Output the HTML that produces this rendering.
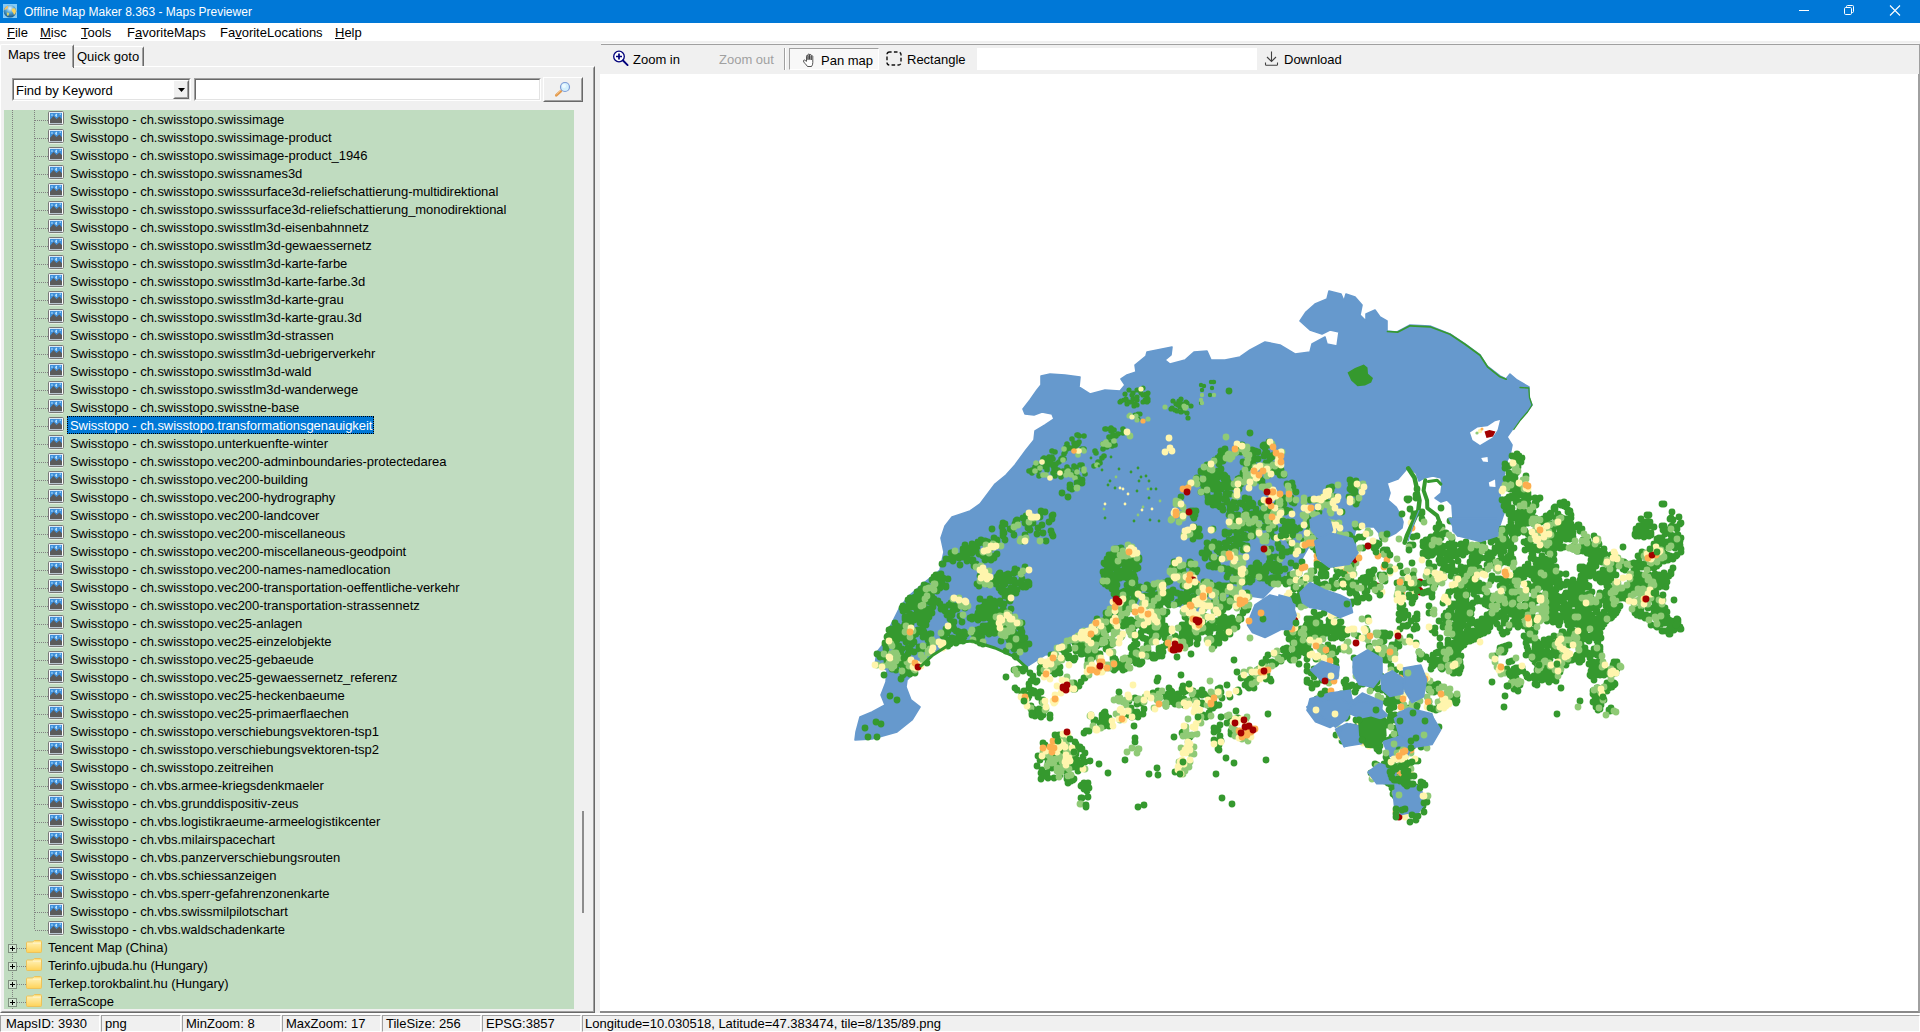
<!DOCTYPE html>
<html>
<head>
<meta charset="utf-8">
<title>Offline Map Maker 8.363 - Maps Previewer</title>
<style>
html,body{margin:0;padding:0;}
body{width:1920px;height:1032px;overflow:hidden;background:#f0f0f0;position:relative;
 font-family:"Liberation Sans",sans-serif;font-size:13px;color:#000;}
.abs{position:absolute;}
div,span{box-sizing:border-box;}
#title{left:0;top:0;width:1920px;height:23px;background:#0078d7;}
#title .t{position:absolute;left:24px;top:5px;font-size:12px;line-height:14px;color:#fff;white-space:pre;}
#menu{left:0;top:23px;width:1920px;height:18px;background:#fff;}
#menu span{position:absolute;top:2px;line-height:15px;font-size:13px;white-space:pre;}
#menu u{text-decoration:underline;text-underline-offset:1px;}
.tab{position:absolute;white-space:pre;font-size:13px;line-height:15px;}
.sunk{position:absolute;background:#fff;border:1px solid;border-color:#a0a0a0 #fff #fff #a0a0a0;}
.sunk:before{content:"";position:absolute;left:0;top:0;right:0;bottom:0;border:1px solid;border-color:#696969 #e3e3e3 #e3e3e3 #696969;}
.raised{position:absolute;background:#f0f0f0;border:1px solid;border-color:#fff #696969 #696969 #fff;}
.raised:before{content:"";position:absolute;left:0;top:0;right:0;bottom:0;border:1px solid;border-color:#f0f0f0 #a0a0a0 #a0a0a0 #f0f0f0;}
#tree{left:4px;top:110px;width:570px;height:899px;background:#c0dcc0;overflow:hidden;}
.row{position:absolute;left:0;height:18px;width:570px;}
.row .lbl{position:absolute;left:63px;top:0;height:18px;padding:2px 3px 0 3px;line-height:16px;font-size:13px;white-space:pre;letter-spacing:-0.05px;}
.row.f .lbl{left:41px;}
.row .lbl.sel{background:#0078d7;color:#fff;outline:1px dotted #000;outline-offset:-1px;width:307px;}
.row .ico{position:absolute;left:44px;top:1px;width:16px;height:15px;}
.row .fico{position:absolute;left:22px;top:2px;width:16px;height:13px;}
.row .plus{position:absolute;left:4px;top:6px;width:9px;height:9px;}
.hdot{position:absolute;height:1px;background-image:linear-gradient(90deg,#808080 50%,transparent 50%);background-size:2px 1px;}
.vdot{position:absolute;width:1px;background-image:linear-gradient(180deg,#808080 50%,transparent 50%);background-size:1px 2px;}
.sb{position:absolute;top:1015px;height:17px;border:1px solid;border-color:#a0a0a0 #fff #fff #a0a0a0;}
.sb span{position:absolute;left:3px;top:0px;font-size:13px;line-height:15px;white-space:pre;}
.tb{position:absolute;font-size:13px;line-height:15px;white-space:pre;}
</style>
</head>
<body>
<!-- TITLE BAR -->
<div id="title" class="abs">
  <svg class="abs" style="left:3px;top:4px" width="14" height="14" viewBox="0 0 14 14">
    <defs><radialGradient id="gl" cx=".5" cy=".28" r=".75"><stop offset="0" stop-color="#e8f4fa"/><stop offset=".45" stop-color="#58a8d8"/><stop offset="1" stop-color="#12507e"/></radialGradient></defs>
    <rect width="14" height="14" fill="#86cbf7"/>
    <circle cx="7" cy="7.200" r="6.300" fill="url(#gl)"/>
    <path d="M1.500 4.500Q3 2 5 1.800Q5.500 3.500 4.300 4.800Q3 5.800 1.300 6.200Z" fill="#f3bf63"/>
    <path d="M8.800 5Q10.500 3.600 12.300 4.600Q13.300 6.500 12.600 9Q11.800 11 10.800 10.800Q10.600 8.800 9.400 8Q8.300 6.500 8.800 5Z" fill="#f7d25e"/>
    <path d="M3.800 8.500Q5.500 8 6.300 9.600Q6 11.500 4.800 12.200Q3.500 10.500 3.800 8.500Z" fill="#d8cf6e"/>
  </svg>
  <span class="t">Offline Map Maker 8.363 - Maps Previewer</span>
  <svg class="abs" style="left:1790px;top:0" width="130" height="23" viewBox="0 0 130 23">
    <path d="M9 10.500H19" stroke="#fff" stroke-width="1" fill="none"/>
    <rect x="54.500" y="7.500" width="7" height="7" rx="1.200" fill="none" stroke="#fff" stroke-width="1"/>
    <path d="M56.500 7.500V6.500Q56.500 5.500 57.500 5.500H62.500Q63.500 5.500 63.500 6.500V11.500Q63.500 12.500 62.500 12.500H61.500" fill="none" stroke="#fff" stroke-width="1"/>
    <path d="M100 5.500L110 15.500M110 5.500L100 15.500" stroke="#fff" stroke-width="1.100" fill="none"/>
  </svg>
</div>
<!-- MENU BAR -->
<div id="menu" class="abs">
  <span style="left:7px"><u>F</u>ile</span>
  <span style="left:40px"><u>M</u>isc</span>
  <span style="left:81px"><u>T</u>ools</span>
  <span style="left:127px">F<u>a</u>voriteMaps</span>
  <span style="left:220px">Fa<u>v</u>oriteLocations</span>
  <span style="left:335px"><u>H</u>elp</span>
</div>
<!-- LEFT PANEL : tab control -->
<div class="abs" style="left:0;top:66px;width:595px;height:947px;border:1px solid;border-color:#fff #696969 #696969 #fff;"></div>
<div class="abs" style="left:1px;top:67px;width:593px;height:945px;border:1px solid;border-color:#f0f0f0 #a0a0a0 #a0a0a0 #f0f0f0;"></div>
<!-- active tab -->
<div class="abs" style="left:0;top:44px;width:74px;height:24px;background:#f0f0f0;border:1px solid;border-color:#fff #696969 #f0f0f0 #fff;border-bottom:0;border-radius:2px 2px 0 0;"></div>
<div class="abs" style="left:72px;top:46px;width:1px;height:21px;background:#a0a0a0;"></div>
<span class="tab" style="left:8px;top:47px">Maps tree</span>
<!-- inactive tab -->
<div class="abs" style="left:74px;top:46px;width:70px;height:20px;border:1px solid;border-color:#fff #696969 transparent transparent;border-bottom:0;border-left:0;border-radius:0 2px 0 0;"></div>
<div class="abs" style="left:142px;top:48px;width:1px;height:18px;background:#a0a0a0;"></div>
<span class="tab" style="left:77px;top:49px">Quick goto</span>
<!-- combobox -->
<div class="sunk" style="left:12px;top:78px;width:179px;height:23px;"></div>
<span class="tab" style="left:16px;top:83px">Find by Keyword</span>
<div class="raised" style="left:173px;top:80px;width:16px;height:19px;"></div>
<svg class="abs" style="left:177px;top:87px" width="9" height="6" viewBox="0 0 9 6"><path d="M1 1H8L4.500 5Z" fill="#000"/></svg>
<!-- search edit -->
<div class="sunk" style="left:194px;top:78px;width:347px;height:23px;"></div>
<!-- search button -->
<div class="raised" style="left:543px;top:77px;width:40px;height:25px;"></div>
<svg class="abs" style="left:552px;top:80px" width="22" height="18" viewBox="0 0 22 18">
  <path d="M9 11L4.300 15.300" stroke="#e39a4c" stroke-width="2.600" stroke-linecap="round"/>
  <path d="M8.500 10.500L4.800 14" stroke="#f6c48a" stroke-width="1" stroke-linecap="round"/>
  <circle cx="13" cy="7" r="4.500" fill="#d3f0fd" stroke="#7d9bd6" stroke-width="1.200"/>
  <circle cx="12" cy="6" r="2" fill="#eefaff"/>
</svg>
<!-- scrollbar -->
<div class="abs" style="left:582px;top:811px;width:2px;height:102px;background:#8c8c8c;"></div>
<!-- TOOLBAR -->
<div class="abs" style="left:601px;top:43px;width:1318px;height:1px;background:#f8f8f8;"></div>
<div class="abs" style="left:601px;top:44px;width:1319px;height:1px;background:#a0a0a0;"></div>
<div class="abs" style="left:1919px;top:44px;width:1px;height:30px;background:#a0a0a0;"></div>
<svg class="abs" style="left:611px;top:49px" width="20" height="20" viewBox="0 0 20 20">
  <circle cx="8" cy="7.500" r="5.300" fill="#fff" stroke="#00007b" stroke-width="1.300"/>
  <path d="M5 7.500H11M8 4.500V10.500" stroke="#00007b" stroke-width="1.700"/>
  <path d="M12 11.500L16.600 16.100" stroke="#00007b" stroke-width="1.900" stroke-linecap="round"/>
</svg>
<span class="tb" style="left:633px;top:52px">Zoom in</span>
<span class="tb" style="left:719px;top:52px;color:#a0a0a0">Zoom out</span>
<div class="abs" style="left:784px;top:48px;width:1px;height:22px;background:#a0a0a0;"></div>
<div class="abs" style="left:785px;top:48px;width:1px;height:22px;background:#fff;"></div>
<div class="abs" style="left:789px;top:48px;width:90px;height:22px;background:#f8f8f8;border:1px solid;border-color:#a0a0a0 #fff #fff #a0a0a0;"></div>
<svg class="abs" style="left:802px;top:53px" width="14" height="15" viewBox="0 0 14 15">
  <path d="M4.500 8V3.200Q4.500 2.300 5.300 2.300Q6 2.300 6 3.200V7M6 6.500V2Q6 1 6.800 1Q7.600 1 7.600 2V6.500M7.600 6.500V2.300Q7.600 1.500 8.400 1.500Q9.200 1.500 9.200 2.300V7M9.200 7V3.500Q9.200 2.700 10 2.700Q10.800 2.700 10.800 3.500V9.500Q10.800 12 9.500 13.500H5.500Q4.500 12 3 10.500Q1.500 9 1.500 8Q1.500 7 2.500 7Q3.300 7 4.500 8.800" fill="#fff" stroke="#404040" stroke-width=".9" stroke-linejoin="round"/>
</svg>
<span class="tb" style="left:821px;top:53px">Pan map</span>
<svg class="abs" style="left:886px;top:51px" width="16" height="15" viewBox="0 0 16 15">
  <rect x="1" y="1" width="14" height="13" rx="2.500" fill="none" stroke="#111" stroke-width="1.400" stroke-dasharray="3.600 2.300" stroke-dashoffset="1.500"/>
</svg>
<span class="tb" style="left:907px;top:52px">Rectangle</span>
<div class="abs" style="left:977px;top:48px;width:280px;height:22px;background:#fff;"></div>
<svg class="abs" style="left:1264px;top:50px" width="16" height="17" viewBox="0 0 16 17">
  <path d="M7.500 1.500V11.500M3 7L7.500 11.500L12 7" fill="none" stroke="#404040" stroke-width="1.100"/>
  <path d="M1.500 12.500V14.500Q1.500 15.300 2.300 15.300H12.700Q13.500 15.300 13.500 14.500V12.500" fill="none" stroke="#404040" stroke-width="1.100"/>
</svg>
<span class="tb" style="left:1284px;top:52px">Download</span>
<!-- MAP PANEL -->
<div class="abs" style="left:600px;top:74px;width:1320px;height:939px;background:#fff;border:solid;border-width:0 2px 2px 0;border-color:#a0a0a0 #a0a0a0 #8a8a8a #a0a0a0;"></div>
<div id="tree" class="abs">
<div class="vdot" style="left:8px;top:0;height:900px"></div>
<div class="vdot" style="left:30px;top:0;height:820px"></div>
<div class="row" style="top:0px"><div class="hdot" style="left:31px;top:10px;width:13px"></div><svg class="ico" viewBox="0 0 16 15"><rect x=".5" y=".5" width="15" height="13" rx="1.200" fill="#fff" stroke="#777"/><path d="M1 14.500H15" stroke="#e4efe4" stroke-width="1"/><rect x="2" y="1.800" width="12" height="10.400" fill="#3f90da"/><path d="M2 12.200V8.700L5.600 5L8.500 7.900L11.500 5.400L14 8.300V12.200Z" fill="#5b5b5b"/><path d="M3.200 4H4.800M4 3.200V4.800M11.600 3.200H13M12.300 2.500V3.900" stroke="#a9dcff" stroke-width=".8" fill="none"/><path d="M9.300 3.100A1.400 1.400 0 1 0 9.300 5.500A1.700 1.700 0 0 1 9.300 3.100Z" fill="#c9ecff"/></svg><span class="lbl">Swisstopo - ch.swisstopo.swissimage</span></div>
<div class="row" style="top:18px"><div class="hdot" style="left:31px;top:10px;width:13px"></div><svg class="ico" viewBox="0 0 16 15"><rect x=".5" y=".5" width="15" height="13" rx="1.200" fill="#fff" stroke="#777"/><path d="M1 14.500H15" stroke="#e4efe4" stroke-width="1"/><rect x="2" y="1.800" width="12" height="10.400" fill="#3f90da"/><path d="M2 12.200V8.700L5.600 5L8.500 7.900L11.500 5.400L14 8.300V12.200Z" fill="#5b5b5b"/><path d="M3.200 4H4.800M4 3.200V4.800M11.600 3.200H13M12.300 2.500V3.900" stroke="#a9dcff" stroke-width=".8" fill="none"/><path d="M9.300 3.100A1.400 1.400 0 1 0 9.300 5.500A1.700 1.700 0 0 1 9.300 3.100Z" fill="#c9ecff"/></svg><span class="lbl">Swisstopo - ch.swisstopo.swissimage-product</span></div>
<div class="row" style="top:36px"><div class="hdot" style="left:31px;top:10px;width:13px"></div><svg class="ico" viewBox="0 0 16 15"><rect x=".5" y=".5" width="15" height="13" rx="1.200" fill="#fff" stroke="#777"/><path d="M1 14.500H15" stroke="#e4efe4" stroke-width="1"/><rect x="2" y="1.800" width="12" height="10.400" fill="#3f90da"/><path d="M2 12.200V8.700L5.600 5L8.500 7.900L11.500 5.400L14 8.300V12.200Z" fill="#5b5b5b"/><path d="M3.200 4H4.800M4 3.200V4.800M11.600 3.200H13M12.300 2.500V3.900" stroke="#a9dcff" stroke-width=".8" fill="none"/><path d="M9.300 3.100A1.400 1.400 0 1 0 9.300 5.500A1.700 1.700 0 0 1 9.300 3.100Z" fill="#c9ecff"/></svg><span class="lbl">Swisstopo - ch.swisstopo.swissimage-product_1946</span></div>
<div class="row" style="top:54px"><div class="hdot" style="left:31px;top:10px;width:13px"></div><svg class="ico" viewBox="0 0 16 15"><rect x=".5" y=".5" width="15" height="13" rx="1.200" fill="#fff" stroke="#777"/><path d="M1 14.500H15" stroke="#e4efe4" stroke-width="1"/><rect x="2" y="1.800" width="12" height="10.400" fill="#3f90da"/><path d="M2 12.200V8.700L5.600 5L8.500 7.900L11.500 5.400L14 8.300V12.200Z" fill="#5b5b5b"/><path d="M3.200 4H4.800M4 3.200V4.800M11.600 3.200H13M12.300 2.500V3.900" stroke="#a9dcff" stroke-width=".8" fill="none"/><path d="M9.300 3.100A1.400 1.400 0 1 0 9.300 5.500A1.700 1.700 0 0 1 9.300 3.100Z" fill="#c9ecff"/></svg><span class="lbl">Swisstopo - ch.swisstopo.swissnames3d</span></div>
<div class="row" style="top:72px"><div class="hdot" style="left:31px;top:10px;width:13px"></div><svg class="ico" viewBox="0 0 16 15"><rect x=".5" y=".5" width="15" height="13" rx="1.200" fill="#fff" stroke="#777"/><path d="M1 14.500H15" stroke="#e4efe4" stroke-width="1"/><rect x="2" y="1.800" width="12" height="10.400" fill="#3f90da"/><path d="M2 12.200V8.700L5.600 5L8.500 7.900L11.500 5.400L14 8.300V12.200Z" fill="#5b5b5b"/><path d="M3.200 4H4.800M4 3.200V4.800M11.600 3.200H13M12.300 2.500V3.900" stroke="#a9dcff" stroke-width=".8" fill="none"/><path d="M9.300 3.100A1.400 1.400 0 1 0 9.300 5.500A1.700 1.700 0 0 1 9.300 3.100Z" fill="#c9ecff"/></svg><span class="lbl">Swisstopo - ch.swisstopo.swisssurface3d-reliefschattierung-multidirektional</span></div>
<div class="row" style="top:90px"><div class="hdot" style="left:31px;top:10px;width:13px"></div><svg class="ico" viewBox="0 0 16 15"><rect x=".5" y=".5" width="15" height="13" rx="1.200" fill="#fff" stroke="#777"/><path d="M1 14.500H15" stroke="#e4efe4" stroke-width="1"/><rect x="2" y="1.800" width="12" height="10.400" fill="#3f90da"/><path d="M2 12.200V8.700L5.600 5L8.500 7.900L11.500 5.400L14 8.300V12.200Z" fill="#5b5b5b"/><path d="M3.200 4H4.800M4 3.200V4.800M11.600 3.200H13M12.300 2.500V3.900" stroke="#a9dcff" stroke-width=".8" fill="none"/><path d="M9.300 3.100A1.400 1.400 0 1 0 9.300 5.500A1.700 1.700 0 0 1 9.300 3.100Z" fill="#c9ecff"/></svg><span class="lbl">Swisstopo - ch.swisstopo.swisssurface3d-reliefschattierung_monodirektional</span></div>
<div class="row" style="top:108px"><div class="hdot" style="left:31px;top:10px;width:13px"></div><svg class="ico" viewBox="0 0 16 15"><rect x=".5" y=".5" width="15" height="13" rx="1.200" fill="#fff" stroke="#777"/><path d="M1 14.500H15" stroke="#e4efe4" stroke-width="1"/><rect x="2" y="1.800" width="12" height="10.400" fill="#3f90da"/><path d="M2 12.200V8.700L5.600 5L8.500 7.900L11.500 5.400L14 8.300V12.200Z" fill="#5b5b5b"/><path d="M3.200 4H4.800M4 3.200V4.800M11.600 3.200H13M12.300 2.500V3.900" stroke="#a9dcff" stroke-width=".8" fill="none"/><path d="M9.300 3.100A1.400 1.400 0 1 0 9.300 5.500A1.700 1.700 0 0 1 9.300 3.100Z" fill="#c9ecff"/></svg><span class="lbl">Swisstopo - ch.swisstopo.swisstlm3d-eisenbahnnetz</span></div>
<div class="row" style="top:126px"><div class="hdot" style="left:31px;top:10px;width:13px"></div><svg class="ico" viewBox="0 0 16 15"><rect x=".5" y=".5" width="15" height="13" rx="1.200" fill="#fff" stroke="#777"/><path d="M1 14.500H15" stroke="#e4efe4" stroke-width="1"/><rect x="2" y="1.800" width="12" height="10.400" fill="#3f90da"/><path d="M2 12.200V8.700L5.600 5L8.500 7.900L11.500 5.400L14 8.300V12.200Z" fill="#5b5b5b"/><path d="M3.200 4H4.800M4 3.200V4.800M11.600 3.200H13M12.300 2.500V3.900" stroke="#a9dcff" stroke-width=".8" fill="none"/><path d="M9.300 3.100A1.400 1.400 0 1 0 9.300 5.500A1.700 1.700 0 0 1 9.300 3.100Z" fill="#c9ecff"/></svg><span class="lbl">Swisstopo - ch.swisstopo.swisstlm3d-gewaessernetz</span></div>
<div class="row" style="top:144px"><div class="hdot" style="left:31px;top:10px;width:13px"></div><svg class="ico" viewBox="0 0 16 15"><rect x=".5" y=".5" width="15" height="13" rx="1.200" fill="#fff" stroke="#777"/><path d="M1 14.500H15" stroke="#e4efe4" stroke-width="1"/><rect x="2" y="1.800" width="12" height="10.400" fill="#3f90da"/><path d="M2 12.200V8.700L5.600 5L8.500 7.900L11.500 5.400L14 8.300V12.200Z" fill="#5b5b5b"/><path d="M3.200 4H4.800M4 3.200V4.800M11.600 3.200H13M12.300 2.500V3.900" stroke="#a9dcff" stroke-width=".8" fill="none"/><path d="M9.300 3.100A1.400 1.400 0 1 0 9.300 5.500A1.700 1.700 0 0 1 9.300 3.100Z" fill="#c9ecff"/></svg><span class="lbl">Swisstopo - ch.swisstopo.swisstlm3d-karte-farbe</span></div>
<div class="row" style="top:162px"><div class="hdot" style="left:31px;top:10px;width:13px"></div><svg class="ico" viewBox="0 0 16 15"><rect x=".5" y=".5" width="15" height="13" rx="1.200" fill="#fff" stroke="#777"/><path d="M1 14.500H15" stroke="#e4efe4" stroke-width="1"/><rect x="2" y="1.800" width="12" height="10.400" fill="#3f90da"/><path d="M2 12.200V8.700L5.600 5L8.500 7.900L11.500 5.400L14 8.300V12.200Z" fill="#5b5b5b"/><path d="M3.200 4H4.800M4 3.200V4.800M11.600 3.200H13M12.300 2.500V3.900" stroke="#a9dcff" stroke-width=".8" fill="none"/><path d="M9.300 3.100A1.400 1.400 0 1 0 9.300 5.500A1.700 1.700 0 0 1 9.300 3.100Z" fill="#c9ecff"/></svg><span class="lbl">Swisstopo - ch.swisstopo.swisstlm3d-karte-farbe.3d</span></div>
<div class="row" style="top:180px"><div class="hdot" style="left:31px;top:10px;width:13px"></div><svg class="ico" viewBox="0 0 16 15"><rect x=".5" y=".5" width="15" height="13" rx="1.200" fill="#fff" stroke="#777"/><path d="M1 14.500H15" stroke="#e4efe4" stroke-width="1"/><rect x="2" y="1.800" width="12" height="10.400" fill="#3f90da"/><path d="M2 12.200V8.700L5.600 5L8.500 7.900L11.500 5.400L14 8.300V12.200Z" fill="#5b5b5b"/><path d="M3.200 4H4.800M4 3.200V4.800M11.600 3.200H13M12.300 2.500V3.900" stroke="#a9dcff" stroke-width=".8" fill="none"/><path d="M9.300 3.100A1.400 1.400 0 1 0 9.300 5.500A1.700 1.700 0 0 1 9.300 3.100Z" fill="#c9ecff"/></svg><span class="lbl">Swisstopo - ch.swisstopo.swisstlm3d-karte-grau</span></div>
<div class="row" style="top:198px"><div class="hdot" style="left:31px;top:10px;width:13px"></div><svg class="ico" viewBox="0 0 16 15"><rect x=".5" y=".5" width="15" height="13" rx="1.200" fill="#fff" stroke="#777"/><path d="M1 14.500H15" stroke="#e4efe4" stroke-width="1"/><rect x="2" y="1.800" width="12" height="10.400" fill="#3f90da"/><path d="M2 12.200V8.700L5.600 5L8.500 7.900L11.500 5.400L14 8.300V12.200Z" fill="#5b5b5b"/><path d="M3.200 4H4.800M4 3.200V4.800M11.600 3.200H13M12.300 2.500V3.900" stroke="#a9dcff" stroke-width=".8" fill="none"/><path d="M9.300 3.100A1.400 1.400 0 1 0 9.300 5.500A1.700 1.700 0 0 1 9.300 3.100Z" fill="#c9ecff"/></svg><span class="lbl">Swisstopo - ch.swisstopo.swisstlm3d-karte-grau.3d</span></div>
<div class="row" style="top:216px"><div class="hdot" style="left:31px;top:10px;width:13px"></div><svg class="ico" viewBox="0 0 16 15"><rect x=".5" y=".5" width="15" height="13" rx="1.200" fill="#fff" stroke="#777"/><path d="M1 14.500H15" stroke="#e4efe4" stroke-width="1"/><rect x="2" y="1.800" width="12" height="10.400" fill="#3f90da"/><path d="M2 12.200V8.700L5.600 5L8.500 7.900L11.500 5.400L14 8.300V12.200Z" fill="#5b5b5b"/><path d="M3.200 4H4.800M4 3.200V4.800M11.600 3.200H13M12.300 2.500V3.900" stroke="#a9dcff" stroke-width=".8" fill="none"/><path d="M9.300 3.100A1.400 1.400 0 1 0 9.300 5.500A1.700 1.700 0 0 1 9.300 3.100Z" fill="#c9ecff"/></svg><span class="lbl">Swisstopo - ch.swisstopo.swisstlm3d-strassen</span></div>
<div class="row" style="top:234px"><div class="hdot" style="left:31px;top:10px;width:13px"></div><svg class="ico" viewBox="0 0 16 15"><rect x=".5" y=".5" width="15" height="13" rx="1.200" fill="#fff" stroke="#777"/><path d="M1 14.500H15" stroke="#e4efe4" stroke-width="1"/><rect x="2" y="1.800" width="12" height="10.400" fill="#3f90da"/><path d="M2 12.200V8.700L5.600 5L8.500 7.900L11.500 5.400L14 8.300V12.200Z" fill="#5b5b5b"/><path d="M3.200 4H4.800M4 3.200V4.800M11.600 3.200H13M12.300 2.500V3.900" stroke="#a9dcff" stroke-width=".8" fill="none"/><path d="M9.300 3.100A1.400 1.400 0 1 0 9.300 5.500A1.700 1.700 0 0 1 9.300 3.100Z" fill="#c9ecff"/></svg><span class="lbl">Swisstopo - ch.swisstopo.swisstlm3d-uebrigerverkehr</span></div>
<div class="row" style="top:252px"><div class="hdot" style="left:31px;top:10px;width:13px"></div><svg class="ico" viewBox="0 0 16 15"><rect x=".5" y=".5" width="15" height="13" rx="1.200" fill="#fff" stroke="#777"/><path d="M1 14.500H15" stroke="#e4efe4" stroke-width="1"/><rect x="2" y="1.800" width="12" height="10.400" fill="#3f90da"/><path d="M2 12.200V8.700L5.600 5L8.500 7.900L11.500 5.400L14 8.300V12.200Z" fill="#5b5b5b"/><path d="M3.200 4H4.800M4 3.200V4.800M11.600 3.200H13M12.300 2.500V3.900" stroke="#a9dcff" stroke-width=".8" fill="none"/><path d="M9.300 3.100A1.400 1.400 0 1 0 9.300 5.500A1.700 1.700 0 0 1 9.300 3.100Z" fill="#c9ecff"/></svg><span class="lbl">Swisstopo - ch.swisstopo.swisstlm3d-wald</span></div>
<div class="row" style="top:270px"><div class="hdot" style="left:31px;top:10px;width:13px"></div><svg class="ico" viewBox="0 0 16 15"><rect x=".5" y=".5" width="15" height="13" rx="1.200" fill="#fff" stroke="#777"/><path d="M1 14.500H15" stroke="#e4efe4" stroke-width="1"/><rect x="2" y="1.800" width="12" height="10.400" fill="#3f90da"/><path d="M2 12.200V8.700L5.600 5L8.500 7.900L11.500 5.400L14 8.300V12.200Z" fill="#5b5b5b"/><path d="M3.200 4H4.800M4 3.200V4.800M11.600 3.200H13M12.300 2.500V3.900" stroke="#a9dcff" stroke-width=".8" fill="none"/><path d="M9.300 3.100A1.400 1.400 0 1 0 9.300 5.500A1.700 1.700 0 0 1 9.300 3.100Z" fill="#c9ecff"/></svg><span class="lbl">Swisstopo - ch.swisstopo.swisstlm3d-wanderwege</span></div>
<div class="row" style="top:288px"><div class="hdot" style="left:31px;top:10px;width:13px"></div><svg class="ico" viewBox="0 0 16 15"><rect x=".5" y=".5" width="15" height="13" rx="1.200" fill="#fff" stroke="#777"/><path d="M1 14.500H15" stroke="#e4efe4" stroke-width="1"/><rect x="2" y="1.800" width="12" height="10.400" fill="#3f90da"/><path d="M2 12.200V8.700L5.600 5L8.500 7.900L11.500 5.400L14 8.300V12.200Z" fill="#5b5b5b"/><path d="M3.200 4H4.800M4 3.200V4.800M11.600 3.200H13M12.300 2.500V3.900" stroke="#a9dcff" stroke-width=".8" fill="none"/><path d="M9.300 3.100A1.400 1.400 0 1 0 9.300 5.500A1.700 1.700 0 0 1 9.300 3.100Z" fill="#c9ecff"/></svg><span class="lbl">Swisstopo - ch.swisstopo.swisstne-base</span></div>
<div class="row" style="top:306px"><div class="hdot" style="left:31px;top:10px;width:13px"></div><svg class="ico" viewBox="0 0 16 15"><rect x=".5" y=".5" width="15" height="13" rx="1.200" fill="#fff" stroke="#777"/><path d="M1 14.500H15" stroke="#e4efe4" stroke-width="1"/><rect x="2" y="1.800" width="12" height="10.400" fill="#3f90da"/><path d="M2 12.200V8.700L5.600 5L8.500 7.900L11.500 5.400L14 8.300V12.200Z" fill="#5b5b5b"/><path d="M3.200 4H4.800M4 3.200V4.800M11.600 3.200H13M12.300 2.500V3.900" stroke="#a9dcff" stroke-width=".8" fill="none"/><path d="M9.300 3.100A1.400 1.400 0 1 0 9.300 5.500A1.700 1.700 0 0 1 9.300 3.100Z" fill="#c9ecff"/></svg><span class="lbl sel">Swisstopo - ch.swisstopo.transformationsgenauigkeit</span></div>
<div class="row" style="top:324px"><div class="hdot" style="left:31px;top:10px;width:13px"></div><svg class="ico" viewBox="0 0 16 15"><rect x=".5" y=".5" width="15" height="13" rx="1.200" fill="#fff" stroke="#777"/><path d="M1 14.500H15" stroke="#e4efe4" stroke-width="1"/><rect x="2" y="1.800" width="12" height="10.400" fill="#3f90da"/><path d="M2 12.200V8.700L5.600 5L8.500 7.900L11.500 5.400L14 8.300V12.200Z" fill="#5b5b5b"/><path d="M3.200 4H4.800M4 3.200V4.800M11.600 3.200H13M12.300 2.500V3.900" stroke="#a9dcff" stroke-width=".8" fill="none"/><path d="M9.300 3.100A1.400 1.400 0 1 0 9.300 5.500A1.700 1.700 0 0 1 9.300 3.100Z" fill="#c9ecff"/></svg><span class="lbl">Swisstopo - ch.swisstopo.unterkuenfte-winter</span></div>
<div class="row" style="top:342px"><div class="hdot" style="left:31px;top:10px;width:13px"></div><svg class="ico" viewBox="0 0 16 15"><rect x=".5" y=".5" width="15" height="13" rx="1.200" fill="#fff" stroke="#777"/><path d="M1 14.500H15" stroke="#e4efe4" stroke-width="1"/><rect x="2" y="1.800" width="12" height="10.400" fill="#3f90da"/><path d="M2 12.200V8.700L5.600 5L8.500 7.900L11.500 5.400L14 8.300V12.200Z" fill="#5b5b5b"/><path d="M3.200 4H4.800M4 3.200V4.800M11.600 3.200H13M12.300 2.500V3.900" stroke="#a9dcff" stroke-width=".8" fill="none"/><path d="M9.300 3.100A1.400 1.400 0 1 0 9.300 5.500A1.700 1.700 0 0 1 9.300 3.100Z" fill="#c9ecff"/></svg><span class="lbl">Swisstopo - ch.swisstopo.vec200-adminboundaries-protectedarea</span></div>
<div class="row" style="top:360px"><div class="hdot" style="left:31px;top:10px;width:13px"></div><svg class="ico" viewBox="0 0 16 15"><rect x=".5" y=".5" width="15" height="13" rx="1.200" fill="#fff" stroke="#777"/><path d="M1 14.500H15" stroke="#e4efe4" stroke-width="1"/><rect x="2" y="1.800" width="12" height="10.400" fill="#3f90da"/><path d="M2 12.200V8.700L5.600 5L8.500 7.900L11.500 5.400L14 8.300V12.200Z" fill="#5b5b5b"/><path d="M3.200 4H4.800M4 3.200V4.800M11.600 3.200H13M12.300 2.500V3.900" stroke="#a9dcff" stroke-width=".8" fill="none"/><path d="M9.300 3.100A1.400 1.400 0 1 0 9.300 5.500A1.700 1.700 0 0 1 9.300 3.100Z" fill="#c9ecff"/></svg><span class="lbl">Swisstopo - ch.swisstopo.vec200-building</span></div>
<div class="row" style="top:378px"><div class="hdot" style="left:31px;top:10px;width:13px"></div><svg class="ico" viewBox="0 0 16 15"><rect x=".5" y=".5" width="15" height="13" rx="1.200" fill="#fff" stroke="#777"/><path d="M1 14.500H15" stroke="#e4efe4" stroke-width="1"/><rect x="2" y="1.800" width="12" height="10.400" fill="#3f90da"/><path d="M2 12.200V8.700L5.600 5L8.500 7.900L11.500 5.400L14 8.300V12.200Z" fill="#5b5b5b"/><path d="M3.200 4H4.800M4 3.200V4.800M11.600 3.200H13M12.300 2.500V3.900" stroke="#a9dcff" stroke-width=".8" fill="none"/><path d="M9.300 3.100A1.400 1.400 0 1 0 9.300 5.500A1.700 1.700 0 0 1 9.300 3.100Z" fill="#c9ecff"/></svg><span class="lbl">Swisstopo - ch.swisstopo.vec200-hydrography</span></div>
<div class="row" style="top:396px"><div class="hdot" style="left:31px;top:10px;width:13px"></div><svg class="ico" viewBox="0 0 16 15"><rect x=".5" y=".5" width="15" height="13" rx="1.200" fill="#fff" stroke="#777"/><path d="M1 14.500H15" stroke="#e4efe4" stroke-width="1"/><rect x="2" y="1.800" width="12" height="10.400" fill="#3f90da"/><path d="M2 12.200V8.700L5.600 5L8.500 7.900L11.500 5.400L14 8.300V12.200Z" fill="#5b5b5b"/><path d="M3.200 4H4.800M4 3.200V4.800M11.600 3.200H13M12.300 2.500V3.900" stroke="#a9dcff" stroke-width=".8" fill="none"/><path d="M9.300 3.100A1.400 1.400 0 1 0 9.300 5.500A1.700 1.700 0 0 1 9.300 3.100Z" fill="#c9ecff"/></svg><span class="lbl">Swisstopo - ch.swisstopo.vec200-landcover</span></div>
<div class="row" style="top:414px"><div class="hdot" style="left:31px;top:10px;width:13px"></div><svg class="ico" viewBox="0 0 16 15"><rect x=".5" y=".5" width="15" height="13" rx="1.200" fill="#fff" stroke="#777"/><path d="M1 14.500H15" stroke="#e4efe4" stroke-width="1"/><rect x="2" y="1.800" width="12" height="10.400" fill="#3f90da"/><path d="M2 12.200V8.700L5.600 5L8.500 7.900L11.500 5.400L14 8.300V12.200Z" fill="#5b5b5b"/><path d="M3.200 4H4.800M4 3.200V4.800M11.600 3.200H13M12.300 2.500V3.900" stroke="#a9dcff" stroke-width=".8" fill="none"/><path d="M9.300 3.100A1.400 1.400 0 1 0 9.300 5.500A1.700 1.700 0 0 1 9.300 3.100Z" fill="#c9ecff"/></svg><span class="lbl">Swisstopo - ch.swisstopo.vec200-miscellaneous</span></div>
<div class="row" style="top:432px"><div class="hdot" style="left:31px;top:10px;width:13px"></div><svg class="ico" viewBox="0 0 16 15"><rect x=".5" y=".5" width="15" height="13" rx="1.200" fill="#fff" stroke="#777"/><path d="M1 14.500H15" stroke="#e4efe4" stroke-width="1"/><rect x="2" y="1.800" width="12" height="10.400" fill="#3f90da"/><path d="M2 12.200V8.700L5.600 5L8.500 7.900L11.500 5.400L14 8.300V12.200Z" fill="#5b5b5b"/><path d="M3.200 4H4.800M4 3.200V4.800M11.600 3.200H13M12.300 2.500V3.900" stroke="#a9dcff" stroke-width=".8" fill="none"/><path d="M9.300 3.100A1.400 1.400 0 1 0 9.300 5.500A1.700 1.700 0 0 1 9.300 3.100Z" fill="#c9ecff"/></svg><span class="lbl">Swisstopo - ch.swisstopo.vec200-miscellaneous-geodpoint</span></div>
<div class="row" style="top:450px"><div class="hdot" style="left:31px;top:10px;width:13px"></div><svg class="ico" viewBox="0 0 16 15"><rect x=".5" y=".5" width="15" height="13" rx="1.200" fill="#fff" stroke="#777"/><path d="M1 14.500H15" stroke="#e4efe4" stroke-width="1"/><rect x="2" y="1.800" width="12" height="10.400" fill="#3f90da"/><path d="M2 12.200V8.700L5.600 5L8.500 7.900L11.500 5.400L14 8.300V12.200Z" fill="#5b5b5b"/><path d="M3.200 4H4.800M4 3.200V4.800M11.600 3.200H13M12.300 2.500V3.900" stroke="#a9dcff" stroke-width=".8" fill="none"/><path d="M9.300 3.100A1.400 1.400 0 1 0 9.300 5.500A1.700 1.700 0 0 1 9.300 3.100Z" fill="#c9ecff"/></svg><span class="lbl">Swisstopo - ch.swisstopo.vec200-names-namedlocation</span></div>
<div class="row" style="top:468px"><div class="hdot" style="left:31px;top:10px;width:13px"></div><svg class="ico" viewBox="0 0 16 15"><rect x=".5" y=".5" width="15" height="13" rx="1.200" fill="#fff" stroke="#777"/><path d="M1 14.500H15" stroke="#e4efe4" stroke-width="1"/><rect x="2" y="1.800" width="12" height="10.400" fill="#3f90da"/><path d="M2 12.200V8.700L5.600 5L8.500 7.900L11.500 5.400L14 8.300V12.200Z" fill="#5b5b5b"/><path d="M3.200 4H4.800M4 3.200V4.800M11.600 3.200H13M12.300 2.500V3.900" stroke="#a9dcff" stroke-width=".8" fill="none"/><path d="M9.300 3.100A1.400 1.400 0 1 0 9.300 5.500A1.700 1.700 0 0 1 9.300 3.100Z" fill="#c9ecff"/></svg><span class="lbl">Swisstopo - ch.swisstopo.vec200-transportation-oeffentliche-verkehr</span></div>
<div class="row" style="top:486px"><div class="hdot" style="left:31px;top:10px;width:13px"></div><svg class="ico" viewBox="0 0 16 15"><rect x=".5" y=".5" width="15" height="13" rx="1.200" fill="#fff" stroke="#777"/><path d="M1 14.500H15" stroke="#e4efe4" stroke-width="1"/><rect x="2" y="1.800" width="12" height="10.400" fill="#3f90da"/><path d="M2 12.200V8.700L5.600 5L8.500 7.900L11.500 5.400L14 8.300V12.200Z" fill="#5b5b5b"/><path d="M3.200 4H4.800M4 3.200V4.800M11.600 3.200H13M12.300 2.500V3.900" stroke="#a9dcff" stroke-width=".8" fill="none"/><path d="M9.300 3.100A1.400 1.400 0 1 0 9.300 5.500A1.700 1.700 0 0 1 9.300 3.100Z" fill="#c9ecff"/></svg><span class="lbl">Swisstopo - ch.swisstopo.vec200-transportation-strassennetz</span></div>
<div class="row" style="top:504px"><div class="hdot" style="left:31px;top:10px;width:13px"></div><svg class="ico" viewBox="0 0 16 15"><rect x=".5" y=".5" width="15" height="13" rx="1.200" fill="#fff" stroke="#777"/><path d="M1 14.500H15" stroke="#e4efe4" stroke-width="1"/><rect x="2" y="1.800" width="12" height="10.400" fill="#3f90da"/><path d="M2 12.200V8.700L5.600 5L8.500 7.900L11.500 5.400L14 8.300V12.200Z" fill="#5b5b5b"/><path d="M3.200 4H4.800M4 3.200V4.800M11.600 3.200H13M12.300 2.500V3.900" stroke="#a9dcff" stroke-width=".8" fill="none"/><path d="M9.300 3.100A1.400 1.400 0 1 0 9.300 5.500A1.700 1.700 0 0 1 9.300 3.100Z" fill="#c9ecff"/></svg><span class="lbl">Swisstopo - ch.swisstopo.vec25-anlagen</span></div>
<div class="row" style="top:522px"><div class="hdot" style="left:31px;top:10px;width:13px"></div><svg class="ico" viewBox="0 0 16 15"><rect x=".5" y=".5" width="15" height="13" rx="1.200" fill="#fff" stroke="#777"/><path d="M1 14.500H15" stroke="#e4efe4" stroke-width="1"/><rect x="2" y="1.800" width="12" height="10.400" fill="#3f90da"/><path d="M2 12.200V8.700L5.600 5L8.500 7.900L11.500 5.400L14 8.300V12.200Z" fill="#5b5b5b"/><path d="M3.200 4H4.800M4 3.200V4.800M11.600 3.200H13M12.300 2.500V3.900" stroke="#a9dcff" stroke-width=".8" fill="none"/><path d="M9.300 3.100A1.400 1.400 0 1 0 9.300 5.500A1.700 1.700 0 0 1 9.300 3.100Z" fill="#c9ecff"/></svg><span class="lbl">Swisstopo - ch.swisstopo.vec25-einzelobjekte</span></div>
<div class="row" style="top:540px"><div class="hdot" style="left:31px;top:10px;width:13px"></div><svg class="ico" viewBox="0 0 16 15"><rect x=".5" y=".5" width="15" height="13" rx="1.200" fill="#fff" stroke="#777"/><path d="M1 14.500H15" stroke="#e4efe4" stroke-width="1"/><rect x="2" y="1.800" width="12" height="10.400" fill="#3f90da"/><path d="M2 12.200V8.700L5.600 5L8.500 7.900L11.500 5.400L14 8.300V12.200Z" fill="#5b5b5b"/><path d="M3.200 4H4.800M4 3.200V4.800M11.600 3.200H13M12.300 2.500V3.900" stroke="#a9dcff" stroke-width=".8" fill="none"/><path d="M9.300 3.100A1.400 1.400 0 1 0 9.300 5.500A1.700 1.700 0 0 1 9.300 3.100Z" fill="#c9ecff"/></svg><span class="lbl">Swisstopo - ch.swisstopo.vec25-gebaeude</span></div>
<div class="row" style="top:558px"><div class="hdot" style="left:31px;top:10px;width:13px"></div><svg class="ico" viewBox="0 0 16 15"><rect x=".5" y=".5" width="15" height="13" rx="1.200" fill="#fff" stroke="#777"/><path d="M1 14.500H15" stroke="#e4efe4" stroke-width="1"/><rect x="2" y="1.800" width="12" height="10.400" fill="#3f90da"/><path d="M2 12.200V8.700L5.600 5L8.500 7.900L11.500 5.400L14 8.300V12.200Z" fill="#5b5b5b"/><path d="M3.200 4H4.800M4 3.200V4.800M11.600 3.200H13M12.300 2.500V3.900" stroke="#a9dcff" stroke-width=".8" fill="none"/><path d="M9.300 3.100A1.400 1.400 0 1 0 9.300 5.500A1.700 1.700 0 0 1 9.300 3.100Z" fill="#c9ecff"/></svg><span class="lbl">Swisstopo - ch.swisstopo.vec25-gewaessernetz_referenz</span></div>
<div class="row" style="top:576px"><div class="hdot" style="left:31px;top:10px;width:13px"></div><svg class="ico" viewBox="0 0 16 15"><rect x=".5" y=".5" width="15" height="13" rx="1.200" fill="#fff" stroke="#777"/><path d="M1 14.500H15" stroke="#e4efe4" stroke-width="1"/><rect x="2" y="1.800" width="12" height="10.400" fill="#3f90da"/><path d="M2 12.200V8.700L5.600 5L8.500 7.900L11.500 5.400L14 8.300V12.200Z" fill="#5b5b5b"/><path d="M3.200 4H4.800M4 3.200V4.800M11.600 3.200H13M12.300 2.500V3.900" stroke="#a9dcff" stroke-width=".8" fill="none"/><path d="M9.300 3.100A1.400 1.400 0 1 0 9.300 5.500A1.700 1.700 0 0 1 9.300 3.100Z" fill="#c9ecff"/></svg><span class="lbl">Swisstopo - ch.swisstopo.vec25-heckenbaeume</span></div>
<div class="row" style="top:594px"><div class="hdot" style="left:31px;top:10px;width:13px"></div><svg class="ico" viewBox="0 0 16 15"><rect x=".5" y=".5" width="15" height="13" rx="1.200" fill="#fff" stroke="#777"/><path d="M1 14.500H15" stroke="#e4efe4" stroke-width="1"/><rect x="2" y="1.800" width="12" height="10.400" fill="#3f90da"/><path d="M2 12.200V8.700L5.600 5L8.500 7.900L11.500 5.400L14 8.300V12.200Z" fill="#5b5b5b"/><path d="M3.200 4H4.800M4 3.200V4.800M11.600 3.200H13M12.300 2.500V3.900" stroke="#a9dcff" stroke-width=".8" fill="none"/><path d="M9.300 3.100A1.400 1.400 0 1 0 9.300 5.500A1.700 1.700 0 0 1 9.300 3.100Z" fill="#c9ecff"/></svg><span class="lbl">Swisstopo - ch.swisstopo.vec25-primaerflaechen</span></div>
<div class="row" style="top:612px"><div class="hdot" style="left:31px;top:10px;width:13px"></div><svg class="ico" viewBox="0 0 16 15"><rect x=".5" y=".5" width="15" height="13" rx="1.200" fill="#fff" stroke="#777"/><path d="M1 14.500H15" stroke="#e4efe4" stroke-width="1"/><rect x="2" y="1.800" width="12" height="10.400" fill="#3f90da"/><path d="M2 12.200V8.700L5.600 5L8.500 7.900L11.500 5.400L14 8.300V12.200Z" fill="#5b5b5b"/><path d="M3.200 4H4.800M4 3.200V4.800M11.600 3.200H13M12.300 2.500V3.900" stroke="#a9dcff" stroke-width=".8" fill="none"/><path d="M9.300 3.100A1.400 1.400 0 1 0 9.300 5.500A1.700 1.700 0 0 1 9.300 3.100Z" fill="#c9ecff"/></svg><span class="lbl">Swisstopo - ch.swisstopo.verschiebungsvektoren-tsp1</span></div>
<div class="row" style="top:630px"><div class="hdot" style="left:31px;top:10px;width:13px"></div><svg class="ico" viewBox="0 0 16 15"><rect x=".5" y=".5" width="15" height="13" rx="1.200" fill="#fff" stroke="#777"/><path d="M1 14.500H15" stroke="#e4efe4" stroke-width="1"/><rect x="2" y="1.800" width="12" height="10.400" fill="#3f90da"/><path d="M2 12.200V8.700L5.600 5L8.500 7.900L11.500 5.400L14 8.300V12.200Z" fill="#5b5b5b"/><path d="M3.200 4H4.800M4 3.200V4.800M11.600 3.200H13M12.300 2.500V3.900" stroke="#a9dcff" stroke-width=".8" fill="none"/><path d="M9.300 3.100A1.400 1.400 0 1 0 9.300 5.500A1.700 1.700 0 0 1 9.300 3.100Z" fill="#c9ecff"/></svg><span class="lbl">Swisstopo - ch.swisstopo.verschiebungsvektoren-tsp2</span></div>
<div class="row" style="top:648px"><div class="hdot" style="left:31px;top:10px;width:13px"></div><svg class="ico" viewBox="0 0 16 15"><rect x=".5" y=".5" width="15" height="13" rx="1.200" fill="#fff" stroke="#777"/><path d="M1 14.500H15" stroke="#e4efe4" stroke-width="1"/><rect x="2" y="1.800" width="12" height="10.400" fill="#3f90da"/><path d="M2 12.200V8.700L5.600 5L8.500 7.900L11.500 5.400L14 8.300V12.200Z" fill="#5b5b5b"/><path d="M3.200 4H4.800M4 3.200V4.800M11.600 3.200H13M12.300 2.500V3.900" stroke="#a9dcff" stroke-width=".8" fill="none"/><path d="M9.300 3.100A1.400 1.400 0 1 0 9.300 5.500A1.700 1.700 0 0 1 9.300 3.100Z" fill="#c9ecff"/></svg><span class="lbl">Swisstopo - ch.swisstopo.zeitreihen</span></div>
<div class="row" style="top:666px"><div class="hdot" style="left:31px;top:10px;width:13px"></div><svg class="ico" viewBox="0 0 16 15"><rect x=".5" y=".5" width="15" height="13" rx="1.200" fill="#fff" stroke="#777"/><path d="M1 14.500H15" stroke="#e4efe4" stroke-width="1"/><rect x="2" y="1.800" width="12" height="10.400" fill="#3f90da"/><path d="M2 12.200V8.700L5.600 5L8.500 7.900L11.500 5.400L14 8.300V12.200Z" fill="#5b5b5b"/><path d="M3.200 4H4.800M4 3.200V4.800M11.600 3.200H13M12.300 2.500V3.900" stroke="#a9dcff" stroke-width=".8" fill="none"/><path d="M9.300 3.100A1.400 1.400 0 1 0 9.300 5.500A1.700 1.700 0 0 1 9.300 3.100Z" fill="#c9ecff"/></svg><span class="lbl">Swisstopo - ch.vbs.armee-kriegsdenkmaeler</span></div>
<div class="row" style="top:684px"><div class="hdot" style="left:31px;top:10px;width:13px"></div><svg class="ico" viewBox="0 0 16 15"><rect x=".5" y=".5" width="15" height="13" rx="1.200" fill="#fff" stroke="#777"/><path d="M1 14.500H15" stroke="#e4efe4" stroke-width="1"/><rect x="2" y="1.800" width="12" height="10.400" fill="#3f90da"/><path d="M2 12.200V8.700L5.600 5L8.500 7.900L11.500 5.400L14 8.300V12.200Z" fill="#5b5b5b"/><path d="M3.200 4H4.800M4 3.200V4.800M11.600 3.200H13M12.300 2.500V3.900" stroke="#a9dcff" stroke-width=".8" fill="none"/><path d="M9.300 3.100A1.400 1.400 0 1 0 9.300 5.500A1.700 1.700 0 0 1 9.300 3.100Z" fill="#c9ecff"/></svg><span class="lbl">Swisstopo - ch.vbs.grunddispositiv-zeus</span></div>
<div class="row" style="top:702px"><div class="hdot" style="left:31px;top:10px;width:13px"></div><svg class="ico" viewBox="0 0 16 15"><rect x=".5" y=".5" width="15" height="13" rx="1.200" fill="#fff" stroke="#777"/><path d="M1 14.500H15" stroke="#e4efe4" stroke-width="1"/><rect x="2" y="1.800" width="12" height="10.400" fill="#3f90da"/><path d="M2 12.200V8.700L5.600 5L8.500 7.900L11.500 5.400L14 8.300V12.200Z" fill="#5b5b5b"/><path d="M3.200 4H4.800M4 3.200V4.800M11.600 3.200H13M12.300 2.500V3.900" stroke="#a9dcff" stroke-width=".8" fill="none"/><path d="M9.300 3.100A1.400 1.400 0 1 0 9.300 5.500A1.700 1.700 0 0 1 9.300 3.100Z" fill="#c9ecff"/></svg><span class="lbl">Swisstopo - ch.vbs.logistikraeume-armeelogistikcenter</span></div>
<div class="row" style="top:720px"><div class="hdot" style="left:31px;top:10px;width:13px"></div><svg class="ico" viewBox="0 0 16 15"><rect x=".5" y=".5" width="15" height="13" rx="1.200" fill="#fff" stroke="#777"/><path d="M1 14.500H15" stroke="#e4efe4" stroke-width="1"/><rect x="2" y="1.800" width="12" height="10.400" fill="#3f90da"/><path d="M2 12.200V8.700L5.600 5L8.500 7.900L11.500 5.400L14 8.300V12.200Z" fill="#5b5b5b"/><path d="M3.200 4H4.800M4 3.200V4.800M11.600 3.200H13M12.300 2.500V3.900" stroke="#a9dcff" stroke-width=".8" fill="none"/><path d="M9.300 3.100A1.400 1.400 0 1 0 9.300 5.500A1.700 1.700 0 0 1 9.300 3.100Z" fill="#c9ecff"/></svg><span class="lbl">Swisstopo - ch.vbs.milairspacechart</span></div>
<div class="row" style="top:738px"><div class="hdot" style="left:31px;top:10px;width:13px"></div><svg class="ico" viewBox="0 0 16 15"><rect x=".5" y=".5" width="15" height="13" rx="1.200" fill="#fff" stroke="#777"/><path d="M1 14.500H15" stroke="#e4efe4" stroke-width="1"/><rect x="2" y="1.800" width="12" height="10.400" fill="#3f90da"/><path d="M2 12.200V8.700L5.600 5L8.500 7.900L11.500 5.400L14 8.300V12.200Z" fill="#5b5b5b"/><path d="M3.200 4H4.800M4 3.200V4.800M11.600 3.200H13M12.300 2.500V3.900" stroke="#a9dcff" stroke-width=".8" fill="none"/><path d="M9.300 3.100A1.400 1.400 0 1 0 9.300 5.500A1.700 1.700 0 0 1 9.300 3.100Z" fill="#c9ecff"/></svg><span class="lbl">Swisstopo - ch.vbs.panzerverschiebungsrouten</span></div>
<div class="row" style="top:756px"><div class="hdot" style="left:31px;top:10px;width:13px"></div><svg class="ico" viewBox="0 0 16 15"><rect x=".5" y=".5" width="15" height="13" rx="1.200" fill="#fff" stroke="#777"/><path d="M1 14.500H15" stroke="#e4efe4" stroke-width="1"/><rect x="2" y="1.800" width="12" height="10.400" fill="#3f90da"/><path d="M2 12.200V8.700L5.600 5L8.500 7.900L11.500 5.400L14 8.300V12.200Z" fill="#5b5b5b"/><path d="M3.200 4H4.800M4 3.200V4.800M11.600 3.200H13M12.300 2.500V3.900" stroke="#a9dcff" stroke-width=".8" fill="none"/><path d="M9.300 3.100A1.400 1.400 0 1 0 9.300 5.500A1.700 1.700 0 0 1 9.300 3.100Z" fill="#c9ecff"/></svg><span class="lbl">Swisstopo - ch.vbs.schiessanzeigen</span></div>
<div class="row" style="top:774px"><div class="hdot" style="left:31px;top:10px;width:13px"></div><svg class="ico" viewBox="0 0 16 15"><rect x=".5" y=".5" width="15" height="13" rx="1.200" fill="#fff" stroke="#777"/><path d="M1 14.500H15" stroke="#e4efe4" stroke-width="1"/><rect x="2" y="1.800" width="12" height="10.400" fill="#3f90da"/><path d="M2 12.200V8.700L5.600 5L8.500 7.900L11.500 5.400L14 8.300V12.200Z" fill="#5b5b5b"/><path d="M3.200 4H4.800M4 3.200V4.800M11.600 3.200H13M12.300 2.500V3.900" stroke="#a9dcff" stroke-width=".8" fill="none"/><path d="M9.300 3.100A1.400 1.400 0 1 0 9.300 5.500A1.700 1.700 0 0 1 9.300 3.100Z" fill="#c9ecff"/></svg><span class="lbl">Swisstopo - ch.vbs.sperr-gefahrenzonenkarte</span></div>
<div class="row" style="top:792px"><div class="hdot" style="left:31px;top:10px;width:13px"></div><svg class="ico" viewBox="0 0 16 15"><rect x=".5" y=".5" width="15" height="13" rx="1.200" fill="#fff" stroke="#777"/><path d="M1 14.500H15" stroke="#e4efe4" stroke-width="1"/><rect x="2" y="1.800" width="12" height="10.400" fill="#3f90da"/><path d="M2 12.200V8.700L5.600 5L8.500 7.900L11.500 5.400L14 8.300V12.200Z" fill="#5b5b5b"/><path d="M3.200 4H4.800M4 3.200V4.800M11.600 3.200H13M12.300 2.500V3.900" stroke="#a9dcff" stroke-width=".8" fill="none"/><path d="M9.300 3.100A1.400 1.400 0 1 0 9.300 5.500A1.700 1.700 0 0 1 9.300 3.100Z" fill="#c9ecff"/></svg><span class="lbl">Swisstopo - ch.vbs.swissmilpilotschart</span></div>
<div class="row" style="top:810px"><div class="hdot" style="left:31px;top:10px;width:13px"></div><svg class="ico" viewBox="0 0 16 15"><rect x=".5" y=".5" width="15" height="13" rx="1.200" fill="#fff" stroke="#777"/><path d="M1 14.500H15" stroke="#e4efe4" stroke-width="1"/><rect x="2" y="1.800" width="12" height="10.400" fill="#3f90da"/><path d="M2 12.200V8.700L5.600 5L8.500 7.900L11.500 5.400L14 8.300V12.200Z" fill="#5b5b5b"/><path d="M3.200 4H4.800M4 3.200V4.800M11.600 3.200H13M12.300 2.500V3.900" stroke="#a9dcff" stroke-width=".8" fill="none"/><path d="M9.300 3.100A1.400 1.400 0 1 0 9.300 5.500A1.700 1.700 0 0 1 9.300 3.100Z" fill="#c9ecff"/></svg><span class="lbl">Swisstopo - ch.vbs.waldschadenkarte</span></div>
<div class="row f" style="top:828px"><div class="hdot" style="left:13px;top:10px;width:9px"></div><svg class="plus" viewBox="0 0 9 9"><rect x=".5" y=".5" width="8" height="8" fill="#fff" fill-opacity=".3" stroke="#7f8f7f"/><path d="M2 4.500H7M4.500 2V7" stroke="#000" stroke-width="1"/></svg><svg class="fico" viewBox="0 0 16 13"><defs><linearGradient id="fg" x1="0" y1="0" x2="0" y2="1"><stop offset="0" stop-color="#fff6c4"/><stop offset="1" stop-color="#ffd257"/></linearGradient></defs><path d="M.5 3Q.5 2 1.500 2H6.800L8.300 .5H14.500Q15.500 .5 15.500 1.500V11.500Q15.500 12.500 14.500 12.500H1.500Q.5 12.500 .5 11.500Z" fill="url(#fg)" stroke="#ecc25a" stroke-width="1"/><path d="M8.600 1H15V2.600H7Z" fill="#ffe07c"/><path d="M7 3.100H15" stroke="#fff8d8" stroke-width=".8"/></svg><span class="lbl">Tencent Map (China)</span></div>
<div class="row f" style="top:846px"><div class="hdot" style="left:13px;top:10px;width:9px"></div><svg class="plus" viewBox="0 0 9 9"><rect x=".5" y=".5" width="8" height="8" fill="#fff" fill-opacity=".3" stroke="#7f8f7f"/><path d="M2 4.500H7M4.500 2V7" stroke="#000" stroke-width="1"/></svg><svg class="fico" viewBox="0 0 16 13"><path d="M.5 3Q.5 2 1.500 2H6.800L8.300 .5H14.500Q15.500 .5 15.500 1.500V11.500Q15.500 12.500 14.500 12.500H1.500Q.5 12.500 .5 11.500Z" fill="url(#fg)" stroke="#ecc25a" stroke-width="1"/><path d="M8.600 1H15V2.600H7Z" fill="#ffe07c"/><path d="M7 3.100H15" stroke="#fff8d8" stroke-width=".8"/></svg><span class="lbl">Terinfo.ujbuda.hu (Hungary)</span></div>
<div class="row f" style="top:864px"><div class="hdot" style="left:13px;top:10px;width:9px"></div><svg class="plus" viewBox="0 0 9 9"><rect x=".5" y=".5" width="8" height="8" fill="#fff" fill-opacity=".3" stroke="#7f8f7f"/><path d="M2 4.500H7M4.500 2V7" stroke="#000" stroke-width="1"/></svg><svg class="fico" viewBox="0 0 16 13"><path d="M.5 3Q.5 2 1.500 2H6.800L8.300 .5H14.500Q15.500 .5 15.500 1.500V11.500Q15.500 12.500 14.500 12.500H1.500Q.5 12.500 .5 11.500Z" fill="url(#fg)" stroke="#ecc25a" stroke-width="1"/><path d="M8.600 1H15V2.600H7Z" fill="#ffe07c"/><path d="M7 3.100H15" stroke="#fff8d8" stroke-width=".8"/></svg><span class="lbl">Terkep.torokbalint.hu (Hungary)</span></div>
<div class="row f" style="top:882px"><div class="hdot" style="left:13px;top:10px;width:9px"></div><svg class="plus" viewBox="0 0 9 9"><rect x=".5" y=".5" width="8" height="8" fill="#fff" fill-opacity=".3" stroke="#7f8f7f"/><path d="M2 4.500H7M4.500 2V7" stroke="#000" stroke-width="1"/></svg><svg class="fico" viewBox="0 0 16 13"><path d="M.5 3Q.5 2 1.500 2H6.800L8.300 .5H14.500Q15.500 .5 15.500 1.500V11.500Q15.500 12.500 14.500 12.500H1.500Q.5 12.500 .5 11.500Z" fill="url(#fg)" stroke="#ecc25a" stroke-width="1"/><path d="M8.600 1H15V2.600H7Z" fill="#ffe07c"/><path d="M7 3.100H15" stroke="#fff8d8" stroke-width=".8"/></svg><span class="lbl">TerraScope</span></div>
</div>
<svg class="abs" style="left:840px;top:280px" width="860" height="560" viewBox="840 280 860 560">
<path fill="#6699cd" stroke="#6699cd" stroke-width="1.6" stroke-linejoin="round" d="M941 538L945 526L952 517L970 511L980 504L989 492L995 484L1006 475L1015 465L1026 450L1034 440L1035 431L1045 425L1054 419L1052 414L1042 412L1034 415L1025 414L1023 409L1030 400L1037 390L1041 385L1041 376L1050 374L1065 375L1080 377L1079 387L1090 394L1105 390L1120 391L1125 385L1121 379L1127 375L1136 372L1135 365L1146 356L1147 352L1162 349L1172 347L1171 355L1165 360L1170 364L1185 360L1194 352L1207 351L1211 360L1225 360L1240 357L1250 350L1265 342L1280 345L1295 354L1310 352L1312 344L1325 337L1327 344L1337 346L1339 332L1330 330L1322 334L1310 330L1300 321L1306 312L1315 304L1327 299L1329 291L1341 294L1344 301L1346 294L1355 297L1362 305L1360 315L1366 321L1366 314L1375 310L1380 317L1387 321L1387 331L1397 332L1410 325L1430 326L1450 334L1465 344L1480 355L1487 366L1500 376L1506 379L1510 374L1517 380L1529 387L1529 397L1532 405L1527 412L1520 420L1512 430L1507 437L1512 445L1510 455L1505 465L1504 480L1500 495L1505 510L1500 525L1495 538L1480 537L1458 536L1453 531L1453 520L1452 505L1447 500L1441 502L1435 498L1441 493L1442 485L1441 478L1433 476L1424 478L1419 481L1416 473L1408 467L1405 471L1398 479L1387 483L1390 493L1388 500L1396 507L1401 516L1403 522L1402 528L1396 533L1388 537L1380 539L1379 533L1374 527L1364 527L1356 528L1354 536L1356 548L1351 553L1345 560L1333 561L1325 566L1318 560L1316 548L1320 540L1308 548L1300 562L1285 575L1263 598L1241.5 594.7L1219.8 605.6L1198.1 611L1176.4 605.6L1154.7 600.1L1133 605.6L1111.3 616.4L1095 627.3L1078.7 638.1L1062.5 649L1048.9 654.4L1045 655L1026 667L1015 656L995 647L972 640L952 642L932 655L920 667L907 680L906 687L911 700L920 707L912 720L897 732L872 739L855 740L856 732L860 717L872 712L885 705L881 695L886 682L887 670L875 665L877 652L885 642L891 625L900 607L910 595L925 582L940 570L944 552Z"/>
<path fill="#fff" d="M1470 432.5L1477.5 427.5L1487.5 426.2L1495 421.2L1500 420L1497.5 430L1492.5 437.5L1480 445L1472.5 440Z"/>
<path fill="#fff" d="M1481.2 458L1487.5 457L1488 462L1483 461.5Z"/>
<path fill="#fff" d="M1488.8 482.5L1495 479.5L1495.5 487L1489.5 486.5Z"/>
<path fill="none" stroke="#35992e" stroke-width="5.2" stroke-linecap="round" d="M1148 393h.01M1137 405h.01M1121 401h.01M1143 395h.01M1138 390h.01M1132 402h.01M1132 395h.01M1133 399h.01M1148 399h.01M1141 393h.01M1147 395h.01M1127 404h.01M1129 402h.01M1147 402h.01M1137 390h.01M1146 394h.01M1129 390h.01M1134 406h.01M1137 400h.01M1133 393h.01M1148 401h.01M1143 402h.01M1125 394h.01M1145 400h.01M1137 397h.01M1147 397h.01M1143 388h.01M1120 402h.01M1135 404h.01M1124 400h.01M1126 399h.01M1180 402h.01M1180 407h.01M1186 402h.01M1177 411h.01M1180 403h.01M1184 404h.01M1173 401h.01M1171 409h.01M1191 406h.01M1177 404h.01M1187 413h.01M1183 411h.01M1172 408h.01M1188 418h.01M1181 399h.01M1187 403h.01M1179 401h.01M1180 401h.01M1178 405h.01M1176 404h.01M1181 412h.01M1175 410h.01"/>
<path fill="none" stroke="#8fca76" stroke-width="5.2" stroke-linecap="round" d="M1184 406h.01M1165 407h.01M1185 408h.01M1186 407h.01"/>
<path fill="none" stroke="#fff5ad" stroke-width="5.2" stroke-linecap="round" d="M1141 389h.01"/>
<path fill="none" stroke="#35992e" stroke-width="4.4" stroke-linecap="round" d="M1212 388h.01M1214 382h.01M1204 386h.01M1201 385h.01M1210 395h.01M1201 403h.01M1202 390h.01M1213 382h.01M1211 382h.01"/>
<path fill="none" stroke="#8fca76" stroke-width="4.4" stroke-linecap="round" d="M1214 395h.01M1201 400h.01M1202 403h.01M1202 395h.01"/>
<path fill="none" stroke="#35992e" stroke-width="5.2" stroke-linecap="round" d="M1138 419h.01M1135 415h.01M1140 414h.01M1138 414h.01"/>
<path fill="none" stroke="#8fca76" stroke-width="5.2" stroke-linecap="round" d="M1137 420h.01M1129 416h.01M1130 415h.01M1148 419h.01M1136 416h.01"/>
<path fill="none" stroke="#fff5ad" stroke-width="5.2" stroke-linecap="round" d="M1132 417h.01"/>
<path fill="none" stroke="#fdae4f" stroke-width="5.2" stroke-linecap="round" d="M1143 421h.01"/>
<path fill="none" stroke="#35992e" stroke-width="5.6" stroke-linecap="round" d="M1080 465h.01M1075 473h.01M1062 458h.01M1043 459h.01M1065 472h.01M1035 467h.01M1074 443h.01M1109 442h.01M1070 470h.01M1107 447h.01M1067 444h.01M1049 458h.01M1038 470h.01M1064 454h.01M1111 428h.01M1052 457h.01M1052 451h.01M1047 462h.01M1054 469h.01M1055 466h.01M1059 462h.01M1078 435h.01M1032 470h.01M1054 471h.01M1074 466h.01M1112 437h.01M1049 464h.01M1106 429h.01M1063 471h.01M1098 462h.01M1039 470h.01M1113 435h.01M1084 449h.01M1109 437h.01M1075 448h.01M1047 467h.01M1055 452h.01M1045 460h.01M1100 463h.01M1061 459h.01M1053 473h.01M1053 459h.01M1072 439h.01M1123 433h.01M1058 471h.01M1056 464h.01M1064 459h.01M1116 436h.01M1029 471h.01M1053 466h.01M1085 474h.01M1096 453h.01M1075 467h.01M1061 459h.01M1078 444h.01M1108 443h.01M1061 476h.01M1123 429h.01M1102 458h.01M1037 471h.01M1058 470h.01M1079 436h.01M1065 451h.01M1083 470h.01M1076 474h.01M1044 458h.01M1037 468h.01M1045 467h.01M1066 447h.01M1105 429h.01M1112 446h.01M1077 445h.01M1070 448h.01M1049 457h.01M1078 443h.01M1039 476h.01M1051 464h.01M1067 447h.01M1046 459h.01M1032 473h.01M1061 459h.01M1037 464h.01M1077 435h.01M1103 444h.01M1076 469h.01M1104 456h.01M1079 442h.01M1067 467h.01M1114 430h.01M1076 468h.01M1045 463h.01M1074 447h.01M1082 449h.01M1077 444h.01M1111 431h.01M1115 445h.01M1040 467h.01M1104 446h.01M1067 449h.01M1039 470h.01M1065 452h.01M1118 434h.01M1051 461h.01M1067 468h.01M1078 477h.01M1055 476h.01M1061 477h.01M1061 475h.01M1103 449h.01M1051 463h.01M1047 469h.01M1084 436h.01M1094 466h.01M1082 465h.01M1061 475h.01M1047 470h.01M1095 451h.01"/>
<path fill="none" stroke="#8fca76" stroke-width="5.6" stroke-linecap="round" d="M1036 463h.01M1107 445h.01M1106 442h.01M1107 445h.01M1105 444h.01M1071 475h.01M1040 468h.01M1083 450h.01M1068 471h.01M1064 449h.01M1084 451h.01M1075 478h.01M1067 472h.01M1063 460h.01M1077 472h.01M1078 455h.01M1084 471h.01M1109 445h.01M1114 441h.01M1035 471h.01M1043 475h.01M1103 444h.01M1097 465h.01M1046 475h.01M1066 475h.01M1084 469h.01"/>
<path fill="none" stroke="#fff5ad" stroke-width="5.6" stroke-linecap="round" d="M1079 451h.01M1078 451h.01M1042 462h.01M1050 478h.01M1060 473h.01"/>
<path fill="none" stroke="#fdae4f" stroke-width="5.6" stroke-linecap="round" d="M1074 451h.01"/>
<path fill="none" stroke="#35992e" stroke-width="6.8" stroke-linecap="round" d="M1072 489h.01M1068 497h.01M1082 480h.01M1070 485h.01M1077 483h.01M1062 493h.01M1070 488h.01M1082 483h.01M1003 533h.01M992 529h.01M994 538h.01M1030 530h.01M1025 523h.01M1003 536h.01M1030 530h.01M1012 530h.01M1028 528h.01M1053 515h.01M1045 512h.01M1052 519h.01M1046 541h.01M1017 520h.01M1042 525h.01M1016 521h.01M1025 535h.01M1014 535h.01M1037 534h.01M1052 516h.01M1002 527h.01M1015 524h.01M1026 516h.01M1041 511h.01M1005 540h.01M1003 523h.01M1030 524h.01M1005 524h.01M1053 536h.01M1003 531h.01M1038 528h.01M1049 522h.01M1043 533h.01M1052 534h.01M1004 533h.01M1040 517h.01M1033 523h.01M1023 541h.01M1051 531h.01M1010 529h.01M1023 518h.01M1250 433h.01M1229 391h.01"/>
<path fill="none" stroke="#8fca76" stroke-width="6.8" stroke-linecap="round" d="M1077 488h.01M1014 527h.01M1040 541h.01M1029 522h.01M1020 541h.01M1018 525h.01M1026 538h.01M1021 539h.01M1034 518h.01M1130 436h.01M1226 437h.01"/>
<path fill="none" stroke="#fff5ad" stroke-width="6.8" stroke-linecap="round" d="M1033 517h.01M1029 513h.01M1037 517h.01M1025 541h.01M1031 517h.01M1169 438h.01M1172 451h.01M1165 452h.01M1170 448h.01M1127 432h.01"/>
<path fill="#35992e" d="M1347.5 372.5L1355 368L1363.8 364.5L1367.5 367.5L1368 373.8L1373 378L1371.2 382.5L1365 385.5L1357.5 386.2L1351.2 380.5Z"/>
<path fill="none" stroke="#35992e" stroke-width="2.8" stroke-linecap="round" d="M1137 491h.01M1156 489h.01M1141 477h.01M1110 481h.01M1102 470h.01M1146 476h.01M1091 458h.01M1111 457h.01M1138 468h.01M1099 466h.01M1139 481h.01M1151 489h.01M1159 521h.01M1108 485h.01M1150 520h.01M1131 472h.01M1149 498h.01M1119 469h.01M1149 481h.01M1134 521h.01M1105 518h.01M1115 488h.01"/>
<path fill="none" stroke="#8fca76" stroke-width="2.8" stroke-linecap="round" d="M1138 515h.01M1148 489h.01M1104 509h.01M1116 477h.01M1143 507h.01M1160 501h.01"/>
<path fill="none" stroke="#fff5ad" stroke-width="2.8" stroke-linecap="round" d="M1142 510h.01M1125 504h.01M1128 494h.01M1120 488h.01M1123 489h.01M1152 509h.01M1105 504h.01"/>
<path fill="none" stroke="#35992e" stroke-width="6.8" stroke-linecap="round" d="M1265 520h.01M1220 456h.01M1293 487h.01M1223 461h.01M1223 549h.01M1296 579h.01M1270 466h.01M1196 572h.01M1179 571h.01M1234 539h.01M1193 539h.01M1229 515h.01M1285 512h.01M1217 550h.01M1245 506h.01M1251 572h.01M1271 568h.01M1239 528h.01M1218 458h.01M1253 536h.01M1242 504h.01M1245 582h.01M1245 498h.01M1207 486h.01M1269 442h.01M1248 457h.01M1215 564h.01M1235 569h.01M1235 521h.01M1264 510h.01M1241 526h.01M1255 531h.01M1277 472h.01M1202 553h.01M1172 568h.01M1206 480h.01M1290 575h.01M1227 495h.01M1254 575h.01M1247 538h.01M1224 475h.01M1266 463h.01M1267 566h.01M1243 473h.01M1227 577h.01M1232 487h.01M1275 582h.01M1283 475h.01M1218 544h.01M1271 583h.01M1251 504h.01M1241 531h.01M1286 579h.01M1270 521h.01M1233 515h.01M1284 504h.01M1265 454h.01M1243 545h.01M1221 455h.01M1272 456h.01M1196 534h.01M1207 543h.01M1196 511h.01M1253 460h.01M1198 481h.01M1290 511h.01M1251 482h.01M1239 489h.01M1230 510h.01M1228 575h.01M1258 452h.01M1246 577h.01M1237 452h.01M1205 487h.01M1285 569h.01M1216 501h.01M1217 505h.01M1221 489h.01M1267 453h.01M1218 495h.01M1285 499h.01M1211 565h.01M1198 536h.01M1221 489h.01M1227 502h.01M1253 573h.01M1262 483h.01M1258 568h.01M1264 569h.01M1276 567h.01M1170 581h.01M1226 494h.01M1275 571h.01M1202 471h.01M1224 499h.01M1255 532h.01M1211 480h.01M1252 569h.01M1236 581h.01M1252 504h.01M1225 455h.01M1174 562h.01M1218 496h.01M1280 470h.01M1262 481h.01M1279 581h.01M1276 582h.01M1253 504h.01M1228 569h.01M1193 513h.01M1236 530h.01M1268 581h.01M1257 573h.01M1259 565h.01M1191 511h.01M1285 498h.01M1235 529h.01M1246 536h.01M1253 455h.01M1263 446h.01M1246 514h.01M1213 498h.01M1258 459h.01M1229 533h.01M1277 569h.01M1254 524h.01M1216 567h.01M1241 531h.01M1277 471h.01M1247 526h.01M1273 565h.01M1215 460h.01M1265 576h.01M1252 462h.01M1261 575h.01M1267 511h.01M1198 480h.01M1221 469h.01M1291 498h.01M1226 482h.01M1221 451h.01M1278 503h.01M1218 489h.01M1205 558h.01M1201 471h.01M1280 571h.01M1290 485h.01M1260 573h.01M1290 583h.01M1232 518h.01M1210 475h.01M1189 591h.01M1256 509h.01M1248 468h.01M1189 565h.01M1223 568h.01M1214 566h.01M1261 503h.01M1183 571h.01M1259 571h.01M1236 508h.01M1266 454h.01M1204 488h.01M1223 510h.01M1269 525h.01M1232 571h.01M1257 563h.01M1225 532h.01M1217 483h.01M1236 548h.01M1212 472h.01M1215 479h.01M1239 540h.01M1225 449h.01M1220 472h.01M1219 464h.01M1242 576h.01M1213 489h.01M1252 579h.01M1193 568h.01M1266 517h.01M1264 445h.01M1207 465h.01M1225 476h.01M1259 479h.01M1273 470h.01M1224 479h.01M1212 558h.01M1266 570h.01M1263 486h.01M1183 567h.01M1213 567h.01M1207 549h.01M1256 564h.01M1218 560h.01M1283 581h.01M1286 584h.01M1218 501h.01M1236 543h.01M1208 497h.01M1197 570h.01M1213 480h.01M1193 511h.01M1238 515h.01M1200 536h.01M1200 483h.01M1252 578h.01M1263 512h.01M1247 549h.01M1206 481h.01M1284 580h.01M1282 500h.01M1228 482h.01M1248 500h.01M1292 580h.01M1254 479h.01M1294 503h.01M1235 579h.01M1232 548h.01M1296 492h.01M1227 501h.01M1243 550h.01M1274 466h.01M1194 527h.01M1278 577h.01M1213 529h.01M1214 546h.01M1252 450h.01M1258 480h.01M1204 473h.01M1264 511h.01M1273 466h.01M1281 470h.01M1245 506h.01M1266 567h.01M1199 529h.01M1246 506h.01M1220 551h.01M1201 492h.01M1271 568h.01M1286 510h.01M1242 503h.01M1247 508h.01M1242 538h.01M1193 566h.01M1201 482h.01M1299 573h.01M1274 578h.01M1267 445h.01M1213 594h.01M1196 482h.01M1267 579h.01M1206 592h.01M1219 552h.01M1246 528h.01M1292 502h.01M1274 465h.01M1261 517h.01M1255 531h.01M1194 518h.01M1265 447h.01M1255 459h.01M1265 448h.01M1274 455h.01M1192 572h.01M1206 476h.01M1207 493h.01M1270 510h.01M1240 528h.01M1191 563h.01M1222 454h.01M1253 465h.01M1219 544h.01M1246 464h.01M1237 534h.01M1247 546h.01M1226 569h.01M1227 479h.01M1227 480h.01M1273 570h.01M1270 579h.01M1276 564h.01M1267 537h.01M1223 509h.01M1239 525h.01M1250 582h.01M1244 450h.01M1238 479h.01M1198 532h.01M1256 517h.01M1225 534h.01M1221 549h.01M1256 530h.01M1223 549h.01M1220 507h.01M1217 546h.01M1247 453h.01M1218 477h.01M1236 571h.01M1208 544h.01M1284 475h.01M1217 494h.01M1240 478h.01M1210 475h.01M1230 484h.01M1236 542h.01M1242 445h.01M1216 498h.01M1251 568h.01M1208 502h.01M1235 552h.01M1181 575h.01M1234 502h.01M1278 568h.01M1204 489h.01M1212 472h.01M1225 549h.01M1279 571h.01M1215 502h.01M1231 510h.01M1218 471h.01M1245 514h.01M1226 485h.01M1233 504h.01M1254 531h.01M1214 560h.01M1257 513h.01M1251 530h.01M1255 451h.01M1222 550h.01M1298 572h.01M1168 581h.01M1264 527h.01M1225 550h.01M1269 445h.01M1240 446h.01M1241 484h.01M1234 568h.01M1230 506h.01M1223 477h.01M1264 456h.01M1275 507h.01M1195 515h.01M1226 496h.01M1234 530h.01M1252 503h.01M1281 505h.01M1251 456h.01M1256 528h.01M1190 563h.01M1225 543h.01M1216 547h.01M1224 458h.01M1272 457h.01M1266 572h.01M1272 578h.01M1268 581h.01M1281 502h.01M1227 478h.01M1264 487h.01M1247 524h.01M1268 567h.01M1251 515h.01M1225 451h.01M1247 513h.01M1252 569h.01M1253 464h.01M1181 497h.01M1241 583h.01M1229 541h.01M1269 563h.01M1219 495h.01M1208 501h.01M1190 562h.01M1248 571h.01M1230 494h.01M1175 562h.01M1272 568h.01M1224 552h.01M1246 538h.01M1222 506h.01M1233 581h.01M1227 488h.01M1295 574h.01M1218 566h.01M1222 485h.01M1292 483h.01M1252 514h.01M1249 461h.01M1280 475h.01M1205 554h.01M1260 578h.01M1222 557h.01M1287 484h.01M1217 472h.01M1260 479h.01M1249 499h.01M1238 527h.01M1224 476h.01M1248 462h.01M1220 507h.01M1241 452h.01M1211 500h.01M1236 577h.01M1227 546h.01M1251 506h.01M1209 554h.01M1233 524h.01M1258 515h.01M1213 485h.01M1243 462h.01M1214 542h.01M1273 564h.01M1270 459h.01M1252 454h.01M1213 505h.01M1244 535h.01M1206 471h.01M1240 503h.01M1174 564h.01M1234 526h.01M1200 481h.01M1209 473h.01M1197 478h.01M1273 578h.01M1269 475h.01M1279 566h.01M1234 546h.01M1193 516h.01M1237 545h.01M1209 566h.01M1293 489h.01M1195 530h.01M1225 550h.01M1218 505h.01M1263 578h.01M1190 533h.01M1229 540h.01M1252 580h.01M1251 454h.01M1246 508h.01M1249 455h.01M1217 499h.01M1177 569h.01M1223 509h.01M1277 505h.01M1201 472h.01M1213 474h.01M1331 490h.01M1318 513h.01M1355 485h.01M1353 487h.01M1308 518h.01M1332 487h.01M1358 497h.01M1335 497h.01M1328 503h.01M1351 484h.01M1354 484h.01M1319 512h.01M1356 481h.01M1357 501h.01M1351 490h.01M1342 512h.01M1310 500h.01M1355 493h.01M1354 493h.01M1350 489h.01M1355 491h.01M1349 497h.01M1325 499h.01M1350 480h.01M1353 485h.01M1356 504h.01M1329 488h.01M1352 569h.01M1321 574h.01M1340 557h.01M1271 557h.01M1345 557h.01M1331 587h.01M1271 549h.01M1271 533h.01M1334 588h.01M1352 570h.01M1292 545h.01M1328 586h.01M1341 583h.01M1333 552h.01M1304 541h.01M1351 571h.01M1302 562h.01M1278 544h.01M1334 551h.01M1315 541h.01M1275 528h.01M1350 547h.01M1274 537h.01M1276 557h.01M1270 561h.01M1270 532h.01M1317 583h.01M1337 570h.01M1291 563h.01M1290 541h.01M1336 577h.01M1332 581h.01M1297 547h.01M1338 586h.01M1338 586h.01M1291 551h.01M1349 570h.01M1320 553h.01M1344 587h.01M1279 548h.01M1335 551h.01M1270 557h.01M1336 560h.01M1347 553h.01M1302 550h.01M1343 555h.01M1326 557h.01M1330 554h.01M1327 557h.01M1305 541h.01M1328 560h.01M1266 549h.01M1336 577h.01M1130 561h.01M1122 551h.01M1115 582h.01M1105 584h.01M1130 567h.01M1128 576h.01M1109 584h.01M1107 570h.01M1118 549h.01M1120 595h.01M1123 592h.01M1129 570h.01M1125 557h.01M1119 564h.01M1114 578h.01M1108 580h.01M1114 564h.01M1117 570h.01M1117 551h.01M1134 576h.01M1129 561h.01M1125 552h.01M1115 562h.01M1139 589h.01M1133 580h.01M1121 561h.01M1111 586h.01M1115 549h.01M1110 585h.01M1115 585h.01M1115 558h.01M1105 577h.01M1112 589h.01M1123 561h.01M1131 587h.01M1127 571h.01M1110 557h.01M1118 553h.01M1114 594h.01M1116 582h.01M1110 586h.01M1110 559h.01M1131 559h.01M1136 563h.01M1120 571h.01M1134 566h.01M1113 577h.01M1107 559h.01M1103 572h.01M1124 556h.01M1114 594h.01M1130 559h.01M1131 581h.01M1116 588h.01M1109 557h.01M1127 585h.01M1107 577h.01M1124 577h.01M1117 574h.01M1115 565h.01M1129 580h.01M1121 596h.01M1127 572h.01M1108 586h.01M1119 593h.01M1104 575h.01M1123 592h.01M1110 576h.01M1132 563h.01M1120 574h.01M1109 555h.01M1110 573h.01M1130 563h.01M1113 563h.01M1134 590h.01M1133 567h.01M1139 560h.01M1109 564h.01M1116 574h.01M1134 559h.01M1126 574h.01M1139 558h.01M1120 577h.01M1124 563h.01M1131 589h.01M1136 569h.01M1115 589h.01M1120 549h.01M1105 583h.01M1131 588h.01M1103 582h.01M1125 591h.01M1129 580h.01M1111 567h.01M1131 565h.01M1112 559h.01M1117 585h.01M1127 590h.01M1125 567h.01M1104 575h.01M1120 577h.01M1130 574h.01M1135 561h.01M1128 589h.01M1120 578h.01M1121 548h.01M1124 572h.01M1118 564h.01M1109 556h.01M1129 590h.01M1131 577h.01M1118 555h.01M1133 574h.01M1124 561h.01M1108 560h.01M1128 570h.01M1113 554h.01M1109 568h.01M1135 579h.01M1109 568h.01M1135 583h.01M1114 552h.01M1133 563h.01M1126 595h.01M1110 578h.01M1138 568h.01M1105 564h.01M1137 567h.01M1115 568h.01M1126 573h.01M1127 578h.01M1104 563h.01M1409 499h.01M1442 527h.01M1417 536h.01M1416 498h.01M1414 514h.01M1422 512h.01M1450 521h.01M1439 524h.01M1418 513h.01M1413 518h.01M1413 537h.01M1436 528h.01M1416 495h.01M1407 499h.01M1408 500h.01M1422 519h.01M1441 508h.01M1410 545h.01M1440 532h.01M1410 509h.01M1402 514h.01M1430 539h.01M1417 489h.01M1422 513h.01M1451 521h.01M1414 514h.01"/>
<path fill="none" stroke="#8fca76" stroke-width="6.8" stroke-linecap="round" d="M1269 486h.01M1265 487h.01M1296 574h.01M1293 574h.01M1274 512h.01M1249 523h.01M1201 492h.01M1232 457h.01M1297 582h.01M1244 516h.01M1250 479h.01M1248 459h.01M1180 565h.01M1235 453h.01M1289 498h.01M1179 502h.01M1296 500h.01M1290 582h.01M1272 444h.01M1235 552h.01M1189 534h.01M1185 512h.01M1269 529h.01M1279 503h.01M1192 575h.01M1255 520h.01M1172 574h.01M1230 522h.01M1211 464h.01M1237 579h.01M1289 491h.01M1230 459h.01M1262 466h.01M1187 535h.01M1240 584h.01M1190 534h.01M1268 489h.01M1185 578h.01M1266 536h.01M1185 575h.01M1279 500h.01M1233 579h.01M1180 580h.01M1198 588h.01M1242 449h.01M1266 549h.01M1264 508h.01M1221 569h.01M1233 526h.01M1280 454h.01M1203 479h.01M1182 514h.01M1247 463h.01M1273 514h.01M1247 449h.01M1230 555h.01M1235 496h.01M1288 486h.01M1280 504h.01M1226 458h.01M1277 497h.01M1255 467h.01M1246 515h.01M1190 589h.01M1237 566h.01M1267 517h.01M1249 455h.01M1190 574h.01M1207 490h.01M1183 518h.01M1248 459h.01M1252 477h.01M1229 454h.01M1180 504h.01M1191 564h.01M1185 580h.01M1245 452h.01M1242 579h.01M1228 455h.01M1244 482h.01M1282 452h.01M1230 525h.01M1195 564h.01M1183 565h.01M1185 534h.01M1211 468h.01M1237 496h.01M1252 522h.01M1190 484h.01M1212 470h.01M1210 469h.01M1176 504h.01M1246 548h.01M1245 470h.01M1284 474h.01M1224 554h.01M1242 523h.01M1262 487h.01M1273 465h.01M1174 571h.01M1197 484h.01M1213 593h.01M1259 524h.01M1212 469h.01M1238 565h.01M1260 535h.01M1183 507h.01M1179 522h.01M1243 573h.01M1250 475h.01M1176 501h.01M1240 558h.01M1246 454h.01M1275 466h.01M1172 519h.01M1184 535h.01M1212 547h.01M1212 530h.01M1214 461h.01M1239 480h.01M1214 557h.01M1179 576h.01M1170 572h.01M1280 501h.01M1237 481h.01M1247 475h.01M1278 584h.01M1204 467h.01M1265 488h.01M1263 541h.01M1235 553h.01M1170 571h.01M1274 584h.01M1269 467h.01M1289 499h.01M1263 541h.01M1234 484h.01M1266 490h.01M1180 566h.01M1281 511h.01M1186 513h.01M1233 564h.01M1171 520h.01M1259 531h.01M1228 455h.01M1247 519h.01M1267 476h.01M1247 447h.01M1262 537h.01M1255 519h.01M1266 467h.01M1251 536h.01M1243 563h.01M1246 474h.01M1237 565h.01M1267 475h.01M1238 526h.01M1266 541h.01M1273 525h.01M1259 577h.01M1196 479h.01M1176 503h.01M1200 588h.01M1254 483h.01M1278 456h.01M1282 520h.01M1231 517h.01M1192 483h.01M1236 452h.01M1246 477h.01M1275 515h.01M1268 552h.01M1245 572h.01M1226 558h.01M1228 456h.01M1231 554h.01M1268 521h.01M1236 565h.01M1314 500h.01M1359 498h.01M1338 485h.01M1317 515h.01M1321 507h.01M1306 516h.01M1323 497h.01M1303 515h.01M1304 516h.01M1360 486h.01M1331 513h.01M1306 522h.01M1363 484h.01M1327 505h.01M1313 514h.01M1318 500h.01M1331 504h.01M1304 502h.01M1352 501h.01M1331 496h.01M1330 511h.01M1304 498h.01M1304 498h.01M1322 501h.01M1280 559h.01M1297 546h.01M1336 566h.01M1297 567h.01M1342 571h.01M1321 557h.01M1352 570h.01M1356 563h.01M1347 557h.01M1348 565h.01M1297 550h.01M1337 584h.01M1338 558h.01M1288 538h.01M1352 560h.01M1353 568h.01M1353 567h.01M1130 555h.01M1120 555h.01M1137 558h.01M1103 581h.01M1126 556h.01M1116 549h.01M1122 556h.01M1114 549h.01M1118 561h.01M1132 583h.01M1132 547h.01M1123 551h.01M1107 581h.01M1128 545h.01M1442 530h.01"/>
<path fill="none" stroke="#fff5ad" stroke-width="6.8" stroke-linecap="round" d="M1296 580h.01M1276 521h.01M1292 514h.01M1274 492h.01M1241 570h.01M1276 519h.01M1242 574h.01M1273 490h.01M1239 521h.01M1256 475h.01M1192 584h.01M1188 530h.01M1229 522h.01M1179 560h.01M1254 471h.01M1237 495h.01M1238 484h.01M1281 465h.01M1281 513h.01M1174 577h.01M1177 577h.01M1271 492h.01M1241 573h.01M1174 513h.01M1189 576h.01M1280 514h.01M1181 504h.01M1231 555h.01M1257 478h.01M1278 463h.01M1175 578h.01M1243 569h.01M1211 464h.01M1176 512h.01M1281 452h.01M1270 442h.01M1249 488h.01M1186 577h.01M1256 478h.01M1272 498h.01M1191 483h.01M1242 582h.01M1268 503h.01M1183 516h.01M1271 499h.01M1264 500h.01M1185 531h.01M1259 533h.01M1260 466h.01M1222 559h.01M1247 549h.01M1280 520h.01M1234 561h.01M1272 495h.01M1175 563h.01M1242 446h.01M1268 492h.01M1209 590h.01M1213 591h.01M1267 469h.01M1279 457h.01M1276 496h.01M1250 482h.01M1211 530h.01M1254 474h.01M1237 444h.01M1278 461h.01M1256 468h.01M1271 474h.01M1194 578h.01M1237 491h.01M1235 559h.01M1184 537h.01M1175 511h.01M1193 527h.01M1299 573h.01M1275 508h.01M1246 557h.01M1190 585h.01M1318 507h.01M1334 501h.01M1326 496h.01M1308 508h.01M1308 510h.01M1319 499h.01M1304 508h.01M1357 484h.01M1324 497h.01M1333 503h.01M1314 499h.01M1350 502h.01M1321 500h.01M1364 487h.01M1337 500h.01M1326 492h.01M1350 499h.01M1329 491h.01M1328 495h.01M1338 497h.01M1340 512h.01M1362 492h.01M1335 508h.01M1319 541h.01M1289 536h.01M1283 537h.01M1348 573h.01M1350 583h.01M1348 585h.01M1320 550h.01M1299 570h.01M1356 556h.01M1319 559h.01M1277 538h.01M1345 575h.01M1298 551h.01M1296 554h.01M1357 555h.01M1320 567h.01M1340 565h.01M1288 525h.01M1132 549h.01M1133 554h.01M1137 553h.01M1129 550h.01M1131 548h.01M1134 550h.01M1411 523h.01"/>
<path fill="none" stroke="#fdae4f" stroke-width="6.8" stroke-linecap="round" d="M1280 494h.01M1230 557h.01M1273 447h.01M1272 492h.01M1188 488h.01M1263 471h.01M1281 462h.01M1276 453h.01M1176 515h.01M1183 489h.01M1235 449h.01M1254 471h.01M1176 512h.01M1281 456h.01M1190 575h.01M1289 494h.01M1271 506h.01M1273 492h.01M1211 589h.01M1197 584h.01M1259 475h.01M1229 554h.01M1272 517h.01M1268 501h.01M1311 508h.01M1345 572h.01M1317 556h.01M1346 567h.01M1317 561h.01M1357 552h.01M1129 552h.01M1412 528h.01"/>
<path fill="none" stroke="#a30000" stroke-width="6.8" stroke-linecap="round" d="M1187 492h.01M1207 588h.01M1267 492h.01M1264 549h.01M1193 580h.01M1269 501h.01M1189 512h.01M1354 560h.01"/>
<path fill="none" stroke="#35992e" stroke-width="4.5" stroke-linecap="round" stroke-linejoin="round" d="M1408.2 468.3L1414.5 477.8L1417.3 490.4L1419.5 500.5L1418.3 510.6L1413.2 521.9L1406.9 535.7L1404.7 542.7"/>
<path fill="none" stroke="#6699cd" stroke-width="1.2" stroke-linecap="round" stroke-linejoin="round" d="M1408.2 540.8L1413.9 523.1L1418.9 510.6"/>
<path fill="none" stroke="#35992e" stroke-width="4" stroke-linecap="round" stroke-linejoin="round" d="M1425.2 480.3L1423.6 490.4L1427.1 500.5L1427.3 508L1437.2 515.6L1440.9 525.7L1433.4 535.7"/>
<path fill="none" stroke="#35992e" stroke-width="3" stroke-linecap="round" stroke-linejoin="round" d="M1428.3 481.6L1437.2 480.3L1440.9 484.1"/>
<path fill="none" stroke="#35992e" stroke-width="6.8" stroke-linecap="round" d="M1388 553h.01M1383 538h.01M1383 551h.01M1374 548h.01M1356 527h.01M1359 527h.01M1384 554h.01M1377 546h.01M1379 544h.01M1383 538h.01M1373 546h.01M1359 537h.01M1363 548h.01M1363 537h.01M1384 550h.01M1413 545h.01M1385 565h.01M1377 543h.01M1400 566h.01M1403 573h.01M1412 563h.01M1015 569h.01M1023 647h.01M1014 641h.01M948 613h.01M1008 591h.01M998 630h.01M1022 579h.01M1009 599h.01M976 617h.01M1000 573h.01M919 647h.01M943 636h.01M926 616h.01M971 560h.01M914 652h.01M930 644h.01M1009 620h.01M983 627h.01M1003 579h.01M971 548h.01M960 556h.01M908 654h.01M957 631h.01M979 636h.01M923 616h.01M967 561h.01M980 632h.01M1003 604h.01M1019 572h.01M891 633h.01M957 557h.01M965 605h.01M985 602h.01M930 602h.01M913 636h.01M908 648h.01M999 577h.01M975 547h.01M893 669h.01M920 609h.01M991 624h.01M946 559h.01M896 670h.01M991 560h.01M921 590h.01M1024 641h.01M979 586h.01M980 642h.01M947 630h.01M1023 587h.01M932 608h.01M1002 626h.01M887 637h.01M945 607h.01M979 614h.01M935 589h.01M1014 649h.01M968 553h.01M983 607h.01M908 661h.01M946 642h.01M985 541h.01M910 626h.01M938 601h.01M1002 592h.01M1004 578h.01M1014 588h.01M1010 581h.01M1017 648h.01M973 562h.01M1014 641h.01M1021 574h.01M1025 638h.01M886 648h.01M998 629h.01M992 607h.01M956 642h.01M933 607h.01M925 588h.01M945 636h.01M896 650h.01M914 620h.01M972 544h.01M954 642h.01M903 666h.01M921 610h.01M995 628h.01M912 644h.01M948 631h.01M952 638h.01M994 633h.01M896 652h.01M1015 583h.01M953 561h.01M987 606h.01M965 556h.01M993 630h.01M919 601h.01M1017 570h.01M1010 590h.01M892 669h.01M965 545h.01M887 655h.01M978 613h.01M954 607h.01M891 643h.01M931 613h.01M934 577h.01M1015 656h.01M977 546h.01M974 566h.01M1014 573h.01M925 590h.01M987 557h.01M926 610h.01M920 621h.01M979 585h.01M963 557h.01M989 605h.01M923 637h.01M964 637h.01M1001 620h.01M1018 638h.01M997 624h.01M888 637h.01M926 587h.01M885 643h.01M902 636h.01M891 658h.01M989 609h.01M979 616h.01M987 611h.01M929 638h.01M944 635h.01M1009 576h.01M927 663h.01M992 614h.01M1024 585h.01M991 548h.01M932 613h.01M981 540h.01M903 675h.01M1017 637h.01M898 664h.01M993 621h.01M941 580h.01M993 623h.01M984 543h.01M1025 649h.01M994 557h.01M995 619h.01M935 601h.01M999 574h.01M1003 606h.01M928 609h.01M997 540h.01M950 613h.01M952 553h.01M972 619h.01M1016 590h.01M986 607h.01M1026 645h.01M959 558h.01M881 655h.01M954 553h.01M989 559h.01M956 631h.01M904 636h.01M960 565h.01M895 637h.01M896 642h.01M926 636h.01M895 641h.01M949 641h.01M907 640h.01M943 586h.01M964 632h.01M993 608h.01M1025 567h.01M974 634h.01M1005 596h.01M1010 601h.01M1004 604h.01M945 611h.01M925 636h.01M983 626h.01M904 665h.01M959 641h.01M923 649h.01M926 625h.01M997 554h.01M1000 601h.01M967 606h.01M1005 579h.01M1005 594h.01M1021 641h.01M1002 619h.01M945 646h.01M901 660h.01M988 629h.01M977 630h.01M980 576h.01M1008 626h.01M947 615h.01M993 629h.01M999 625h.01M986 626h.01M979 554h.01M962 622h.01M1018 642h.01M989 559h.01M956 606h.01M999 613h.01M906 642h.01M1024 642h.01M989 581h.01M1028 582h.01M1016 642h.01M929 617h.01M1001 578h.01M975 639h.01M964 634h.01M994 556h.01M988 584h.01M972 618h.01M1003 611h.01M922 619h.01M915 673h.01M972 617h.01M966 548h.01M980 599h.01M942 564h.01M1029 585h.01M1006 575h.01M1001 591h.01M978 620h.01M963 549h.01M1023 586h.01M951 553h.01M887 662h.01M989 617h.01M980 641h.01M977 547h.01M951 625h.01M1002 582h.01M968 548h.01M999 588h.01M922 598h.01M1005 584h.01M1015 643h.01M995 607h.01M936 577h.01M975 637h.01M978 613h.01M961 636h.01M925 623h.01M979 608h.01M983 556h.01M984 632h.01M940 604h.01M959 635h.01M897 640h.01M1020 645h.01M902 656h.01M984 542h.01M994 581h.01M994 558h.01M959 632h.01M911 624h.01M891 645h.01M989 614h.01M980 634h.01M982 636h.01M917 615h.01M893 632h.01M990 616h.01M997 542h.01M943 578h.01M957 609h.01M949 605h.01M907 665h.01M895 641h.01M965 608h.01M983 614h.01M998 576h.01M973 560h.01M980 629h.01M932 588h.01M897 657h.01M928 640h.01M924 632h.01M1029 583h.01M966 634h.01M980 643h.01M888 641h.01M896 641h.01M1024 585h.01M980 611h.01M1029 644h.01M963 641h.01M1022 586h.01M956 643h.01M948 646h.01M901 654h.01M1013 588h.01M986 608h.01M977 641h.01M931 634h.01M1017 590h.01M919 649h.01M972 553h.01M997 577h.01M926 588h.01M960 616h.01M991 618h.01M943 564h.01M943 564h.01M1014 642h.01M1003 621h.01M988 542h.01M888 664h.01M910 674h.01M954 622h.01M946 587h.01M906 664h.01M925 647h.01M923 623h.01M986 630h.01M1016 638h.01M979 608h.01M899 658h.01M940 580h.01M967 556h.01M899 646h.01M930 634h.01M914 642h.01M973 618h.01M1018 583h.01M940 582h.01M930 640h.01M934 603h.01M1008 595h.01M1009 615h.01M1016 641h.01M918 630h.01M926 586h.01M921 623h.01M963 552h.01M950 644h.01M1002 625h.01M886 653h.01M941 574h.01M951 627h.01M953 557h.01M916 634h.01M999 578h.01M906 657h.01M929 614h.01M911 673h.01M916 615h.01M907 671h.01M944 634h.01M1021 584h.01M990 625h.01M994 601h.01M1003 582h.01M983 618h.01M980 616h.01M889 657h.01M889 630h.01M977 584h.01M1016 593h.01M884 657h.01M946 586h.01M991 607h.01M1014 580h.01M995 625h.01M927 620h.01M1004 611h.01M914 633h.01M977 616h.01M918 632h.01M886 649h.01M924 621h.01M923 611h.01M1003 607h.01M989 634h.01M1016 657h.01M976 564h.01M995 606h.01M949 616h.01M920 592h.01M990 599h.01M955 639h.01M989 618h.01M941 584h.01M880 657h.01M938 582h.01M924 585h.01M996 584h.01M902 663h.01M950 640h.01M1011 609h.01M978 542h.01M929 641h.01M908 623h.01M1011 590h.01M894 637h.01M1001 604h.01M987 614h.01M1011 588h.01M1006 581h.01M985 606h.01M902 638h.01M950 559h.01M985 560h.01M994 619h.01M983 644h.01M1003 587h.01M923 627h.01M885 644h.01M953 611h.01M984 618h.01M947 633h.01M995 629h.01M895 636h.01M1022 636h.01M953 560h.01M952 615h.01M957 606h.01M921 611h.01M969 551h.01M934 599h.01M1001 630h.01M953 626h.01M986 613h.01M994 612h.01M951 603h.01M904 674h.01M910 649h.01M954 629h.01M964 555h.01M917 592h.01M1008 574h.01M1006 651h.01M924 607h.01M941 609h.01M970 618h.01M989 556h.01M986 607h.01M1020 650h.01M1026 587h.01M991 623h.01M1013 593h.01M902 664h.01M950 619h.01M902 649h.01M920 623h.01M976 551h.01M946 629h.01M971 551h.01M999 612h.01M979 543h.01M876 722h.01M868 737h.01M865 728h.01M877 737h.01M881 724h.01M890 696h.01M897 700h.01M914 604h.01M895 653h.01M932 597h.01M932 580h.01M895 628h.01M915 597h.01M899 634h.01M906 610h.01M897 626h.01M903 606h.01M911 624h.01M920 603h.01M895 623h.01M916 608h.01M920 602h.01M902 608h.01M901 632h.01M904 627h.01M942 578h.01M905 617h.01M909 605h.01M904 632h.01M932 592h.01M923 590h.01M905 624h.01M914 606h.01M900 629h.01M908 621h.01M925 587h.01M942 582h.01M903 627h.01M927 587h.01M888 636h.01M917 600h.01M940 588h.01M935 577h.01M932 590h.01M922 606h.01M903 611h.01M922 607h.01M926 594h.01M925 599h.01M937 583h.01M891 629h.01M915 607h.01M907 630h.01M889 661h.01M918 609h.01M891 638h.01M911 607h.01M931 589h.01M939 585h.01M905 619h.01M924 596h.01M895 636h.01M920 600h.01M916 602h.01M927 586h.01M940 576h.01M910 618h.01M921 589h.01M930 588h.01M906 609h.01M904 638h.01M920 597h.01M938 588h.01M910 601h.01M936 575h.01M910 598h.01M911 618h.01M937 591h.01M917 610h.01M932 591h.01M924 604h.01M900 634h.01M929 589h.01M920 598h.01M896 647h.01M948 579h.01M914 605h.01M907 610h.01M891 636h.01M911 616h.01M915 615h.01M935 586h.01M931 590h.01M907 627h.01M908 600h.01M910 614h.01M920 605h.01M927 600h.01M890 640h.01M904 636h.01"/>
<path fill="none" stroke="#8fca76" stroke-width="6.8" stroke-linecap="round" d="M1385 539h.01M1368 531h.01M1384 554h.01M1382 535h.01M1409 547h.01M1373 578h.01M1370 533h.01M1390 567h.01M1402 580h.01M1414 571h.01M929 588h.01M1002 624h.01M960 602h.01M980 570h.01M986 549h.01M983 642h.01M889 663h.01M923 605h.01M884 654h.01M976 567h.01M910 637h.01M980 581h.01M897 655h.01M935 584h.01M959 598h.01M934 584h.01M932 640h.01M923 660h.01M923 646h.01M941 633h.01M891 663h.01M986 545h.01M891 664h.01M993 544h.01M924 658h.01M927 596h.01M1009 620h.01M980 581h.01M983 580h.01M921 606h.01M888 665h.01M909 666h.01M961 606h.01M983 552h.01M915 670h.01M989 553h.01M971 632h.01M894 653h.01M990 585h.01M925 599h.01M955 551h.01M1000 616h.01M894 666h.01M933 643h.01M1001 546h.01M896 661h.01M989 571h.01M1020 652h.01M913 631h.01M981 566h.01M892 668h.01M893 654h.01M985 584h.01M914 669h.01M905 632h.01M1023 571h.01M973 640h.01M928 653h.01M972 630h.01M899 658h.01M921 655h.01M928 651h.01M930 649h.01M934 590h.01M953 599h.01M963 615h.01M907 629h.01M1021 574h.01M897 659h.01M938 642h.01M907 662h.01M968 606h.01M893 654h.01M965 607h.01M926 589h.01M877 665h.01M888 665h.01M891 654h.01M892 646h.01M891 644h.01M906 626h.01M896 653h.01M892 664h.01M883 666h.01"/>
<path fill="none" stroke="#fff5ad" stroke-width="6.8" stroke-linecap="round" d="M1357 554h.01M1366 534h.01M1414 591h.01M1395 569h.01M1390 573h.01M1382 592h.01M921 666h.01M932 651h.01M984 551h.01M996 546h.01M911 660h.01M991 546h.01M948 626h.01M990 577h.01M933 648h.01M890 658h.01M994 547h.01M916 668h.01M889 657h.01M983 568h.01M939 642h.01M965 601h.01M1011 598h.01M882 667h.01M966 602h.01M959 600h.01M954 598h.01M981 578h.01M959 600h.01M913 667h.01M1029 570h.01M983 573h.01M943 648h.01M987 579h.01M987 576h.01M941 645h.01M993 547h.01M943 648h.01M988 550h.01M917 664h.01M943 643h.01M919 667h.01M985 572h.01M911 628h.01M980 570h.01M875 665h.01M889 641h.01"/>
<path fill="none" stroke="#fdae4f" stroke-width="6.8" stroke-linecap="round" d="M1378 556h.01M1387 560h.01M1384 567h.01M1359 558h.01M1402 592h.01M910 632h.01M915 663h.01"/>
<path fill="none" stroke="#a30000" stroke-width="6.8" stroke-linecap="round" d="M1420 582h.01M1419 590h.01M1368 546h.01M1420 592h.01M1377 586h.01M1420 591h.01M918 667h.01"/>
<path fill="none" stroke="#35992e" stroke-width="3" stroke-linecap="round" stroke-linejoin="round" d="M921 666L933 655L952 643L972 641L995 648L1015 657L1026 667"/>
<path fill="none" stroke="#35992e" stroke-width="6.8" stroke-linecap="round" d="M1014 633h.01M1006 626h.01M1022 623h.01M1022 638h.01M997 632h.01M1019 627h.01M1001 641h.01M1020 638h.01M1013 646h.01M1005 620h.01M1009 613h.01M1007 637h.01M1020 634h.01M1011 643h.01M1022 639h.01M1013 632h.01M1008 631h.01M1011 622h.01M995 633h.01M1011 638h.01M1021 630h.01M1009 640h.01M1006 630h.01M1008 630h.01M1013 630h.01M1021 629h.01M1004 634h.01M1019 636h.01M1022 632h.01M1010 632h.01M1013 633h.01M1011 646h.01M1165 602h.01M1184 601h.01M1088 660h.01M1171 598h.01M1177 593h.01M1106 618h.01M1225 591h.01M1219 634h.01M1113 669h.01M1187 606h.01M1040 673h.01M1093 641h.01M1055 674h.01M1129 661h.01M1164 584h.01M1152 630h.01M1215 596h.01M1148 651h.01M1175 636h.01M1147 585h.01M1186 595h.01M1183 596h.01M1172 593h.01M1186 636h.01M1224 617h.01M1230 626h.01M1124 669h.01M1128 660h.01M1159 650h.01M1185 628h.01M1152 638h.01M1162 620h.01M1241 619h.01M1159 629h.01M1218 639h.01M1183 586h.01M1089 654h.01M1160 633h.01M1107 625h.01M1227 586h.01M1234 600h.01M1238 621h.01M1134 595h.01M1113 659h.01M1122 611h.01M1166 593h.01M1153 655h.01M1210 637h.01M1223 617h.01M1040 668h.01M1216 638h.01M1074 660h.01M1214 628h.01M1130 623h.01M1146 630h.01M1160 602h.01M1075 658h.01M1232 622h.01M1221 625h.01M1106 649h.01M1131 648h.01M1221 616h.01M1149 598h.01M1210 632h.01M1160 632h.01M1041 662h.01M1102 626h.01M1040 669h.01M1090 658h.01M1094 630h.01M1123 670h.01M1185 626h.01M1170 592h.01M1231 602h.01M1152 593h.01M1162 625h.01M1165 601h.01M1160 613h.01M1121 617h.01M1063 649h.01M1178 602h.01M1165 628h.01M1192 632h.01M1181 640h.01M1138 636h.01M1219 585h.01M1148 589h.01M1197 592h.01M1201 626h.01M1227 619h.01M1228 619h.01M1185 617h.01M1190 626h.01M1214 586h.01M1124 668h.01M1127 609h.01M1190 606h.01M1230 600h.01M1131 603h.01M1135 626h.01M1159 648h.01M1165 614h.01M1224 622h.01M1120 612h.01M1159 594h.01M1137 654h.01M1173 590h.01M1125 664h.01M1191 601h.01M1154 630h.01M1132 602h.01M1248 597h.01M1169 592h.01M1219 636h.01M1222 599h.01M1066 654h.01M1113 657h.01M1104 632h.01M1136 656h.01M1109 617h.01M1160 605h.01M1182 631h.01M1124 608h.01M1093 657h.01M1182 645h.01M1153 625h.01M1196 586h.01M1122 625h.01M1214 646h.01M1226 603h.01M1134 656h.01M1225 624h.01M1208 632h.01M1247 610h.01M1141 663h.01M1187 596h.01M1243 612h.01M1127 625h.01M1150 600h.01M1204 582h.01M1214 591h.01M1145 624h.01M1069 649h.01M1110 615h.01M1075 689h.01M1155 631h.01M1140 625h.01M1194 598h.01M1225 605h.01M1221 587h.01M1135 658h.01M1135 639h.01M1148 587h.01M1137 644h.01M1160 619h.01M1058 669h.01M1181 598h.01M1068 658h.01M1191 629h.01M1221 628h.01M1116 661h.01M1074 683h.01M1186 615h.01M1129 658h.01M1151 599h.01M1223 599h.01M1215 612h.01M1219 591h.01M1149 631h.01M1185 626h.01M1075 643h.01M1069 649h.01M1163 652h.01M1168 604h.01M1120 610h.01M1130 661h.01M1146 624h.01M1181 598h.01M1080 644h.01M1109 629h.01M1220 605h.01M1247 608h.01M1243 613h.01M1113 629h.01M1107 630h.01M1165 635h.01M1146 639h.01M1087 642h.01M1221 592h.01M1189 602h.01M1134 597h.01M1103 638h.01M1124 612h.01M1114 670h.01M1222 623h.01M1185 632h.01M1162 619h.01M1159 653h.01M1227 630h.01M1142 625h.01M1169 605h.01M1157 618h.01M1189 590h.01M1213 603h.01M1203 623h.01M1123 626h.01M1121 637h.01M1088 661h.01M1132 658h.01M1096 638h.01M1181 638h.01M1167 640h.01M1232 619h.01M1130 623h.01M1230 634h.01M1057 669h.01M1233 598h.01M1162 628h.01M1148 623h.01M1216 641h.01M1182 629h.01M1223 621h.01M1240 619h.01M1192 599h.01M1205 595h.01M1197 638h.01M1229 591h.01M1137 651h.01M1084 637h.01M1141 633h.01M1162 622h.01M1090 655h.01M1132 604h.01M1095 641h.01M1099 634h.01M1102 639h.01M1187 592h.01M1043 670h.01M1202 632h.01M1197 644h.01M1193 607h.01M1228 601h.01M1130 591h.01M1064 651h.01M1179 603h.01M1222 621h.01M1207 584h.01M1126 620h.01M1198 638h.01M1130 632h.01M1222 625h.01M1157 595h.01M1100 654h.01M1081 651h.01M1065 654h.01M1143 638h.01M1181 628h.01M1132 631h.01M1148 621h.01M1152 634h.01M1208 626h.01M1079 639h.01M1244 608h.01M1121 665h.01M1045 670h.01M1140 587h.01M1156 600h.01M1148 656h.01M1145 596h.01M1218 591h.01M1210 630h.01M1225 586h.01M1134 601h.01M1223 610h.01M1081 682h.01M1133 609h.01M1186 626h.01M1225 621h.01M1129 589h.01M1190 640h.01M1168 582h.01M1132 647h.01M1127 598h.01M1080 638h.01M1140 664h.01M1232 597h.01M1167 612h.01M1132 648h.01M1119 667h.01M1136 663h.01M1221 604h.01M1248 608h.01M1137 662h.01M1237 627h.01M1076 686h.01M1079 686h.01M1203 620h.01M1136 622h.01M1073 689h.01M1107 667h.01M1162 630h.01M1130 624h.01M1220 592h.01M1149 596h.01M1165 626h.01M1195 618h.01M1217 628h.01M1210 625h.01M1125 615h.01M1118 617h.01M1192 634h.01M1191 626h.01M1061 649h.01M1122 664h.01M1232 618h.01M1108 644h.01M1163 647h.01M1234 625h.01M1203 590h.01M1214 603h.01M1068 647h.01M1198 639h.01M1124 607h.01M1074 641h.01M1104 628h.01M1166 645h.01M1085 639h.01M1109 619h.01M1246 608h.01M1195 636h.01M1140 663h.01M1195 633h.01M1054 668h.01M1114 610h.01M1127 602h.01M1210 624h.01M1190 643h.01M1106 613h.01M1149 588h.01M1181 594h.01M1094 636h.01M1225 638h.01M1060 673h.01M1191 586h.01M1119 610h.01M1188 644h.01M1107 642h.01M1164 598h.01M1051 655h.01M1193 598h.01M1139 588h.01M1133 632h.01M1215 609h.01M1157 609h.01M1125 669h.01M1183 640h.01M1153 586h.01M1052 671h.01M1191 633h.01M1127 622h.01M1123 594h.01M1057 664h.01M1159 656h.01M1158 637h.01M1182 635h.01M1220 638h.01M1193 597h.01M1101 644h.01M1204 631h.01M1082 654h.01M1129 625h.01M1142 627h.01M1180 641h.01M1221 604h.01M1184 644h.01M1160 602h.01M1152 591h.01M1115 669h.01M1149 630h.01M1084 678h.01M1233 628h.01M1085 647h.01M1164 635h.01M1168 593h.01M1157 595h.01M1103 623h.01M1127 611h.01M1166 634h.01M1134 645h.01M1139 664h.01M1131 602h.01M1147 586h.01M1198 586h.01M1125 617h.01M1160 608h.01M1049 662h.01M1123 625h.01M1166 597h.01M1108 615h.01M1221 588h.01M1151 603h.01M1176 604h.01M1195 590h.01M1144 650h.01M1187 635h.01M1186 596h.01M1115 659h.01M1247 593h.01M1129 629h.01M1122 609h.01M1159 614h.01M1165 627h.01M1235 601h.01M1113 657h.01M1087 654h.01M1080 649h.01M1210 583h.01M1123 605h.01M1217 621h.01M1148 597h.01M1060 667h.01M1228 607h.01M1182 625h.01M1188 602h.01M1230 620h.01M1087 641h.01M1240 617h.01M1085 678h.01M1121 620h.01M1159 616h.01M1081 650h.01M1219 643h.01M1092 650h.01M1221 603h.01M1069 656h.01M1168 632h.01M1164 583h.01M1201 632h.01M1185 625h.01M1162 656h.01M1149 642h.01M1152 599h.01M1228 620h.01M1229 586h.01M1155 658h.01M1188 621h.01M1168 629h.01M1165 638h.01M1223 586h.01M1187 613h.01M1097 637h.01M1083 648h.01M1056 666h.01M1194 635h.01M1158 604h.01M1189 642h.01M1100 639h.01M1224 608h.01M1132 654h.01M1219 593h.01M1204 616h.01M1089 661h.01M1081 642h.01M1224 637h.01M1182 597h.01M1229 606h.01M1133 651h.01M1153 658h.01M1192 590h.01M1120 618h.01M1134 647h.01M1155 587h.01M1223 618h.01M1161 620h.01M1129 593h.01M1096 653h.01M1186 632h.01M1224 634h.01M1127 668h.01M1080 649h.01M1137 657h.01M1149 626h.01M1105 629h.01M1152 593h.01M1097 619h.01M1211 605h.01M1191 630h.01M1181 597h.01M1137 651h.01M1073 659h.01M1111 645h.01M1221 619h.01M1089 643h.01M1147 645h.01M1228 591h.01M1076 651h.01M1133 603h.01M1095 637h.01M1213 622h.01M1135 599h.01M1134 590h.01M1213 605h.01M1192 633h.01M1097 646h.01M1131 620h.01M1133 601h.01M1112 625h.01M1081 654h.01M1131 708h.01M1203 704h.01M1241 678h.01M1110 725h.01M1171 691h.01M1204 694h.01M1222 698h.01M1101 726h.01M1104 713h.01M1107 719h.01M1105 722h.01M1267 674h.01M1161 692h.01M1172 692h.01M1158 691h.01M1171 697h.01M1245 685h.01M1172 699h.01M1143 714h.01M1139 701h.01M1170 691h.01M1184 687h.01M1173 700h.01M1196 698h.01M1208 696h.01M1227 685h.01M1184 699h.01M1250 679h.01M1144 709h.01M1129 701h.01M1109 726h.01M1218 689h.01M1189 689h.01M1175 701h.01M1199 693h.01M1175 698h.01M1135 714h.01M1179 694h.01M1168 702h.01M1173 702h.01M1270 679h.01M1238 690h.01M1137 712h.01M1104 726h.01M1177 698h.01M1265 674h.01M1170 700h.01M1166 706h.01M1173 699h.01M1102 718h.01M1239 692h.01M1221 692h.01M1167 696h.01M1137 699h.01M1172 697h.01M1175 704h.01M1137 704h.01M1132 717h.01M1248 680h.01M1184 705h.01M1153 693h.01M1193 699h.01M1136 714h.01M1181 701h.01M1230 697h.01M1103 718h.01M1168 698h.01M1255 674h.01M1197 701h.01M1177 699h.01M1194 698h.01M1141 703h.01M1193 691h.01M1169 698h.01M1084 733h.01M1266 679h.01M1166 697h.01M1271 681h.01M1182 689h.01M1183 699h.01M1100 723h.01M1105 712h.01M1089 731h.01M1250 679h.01M1198 693h.01M1178 694h.01M1109 718h.01M1086 731h.01M1220 688h.01M1168 694h.01M1102 724h.01M1127 715h.01M1143 714h.01M1106 716h.01M1202 690h.01M1197 702h.01M1257 677h.01M1183 686h.01M1171 701h.01M1186 691h.01M1169 688h.01M1094 721h.01M1169 700h.01M1135 698h.01M1095 720h.01M1256 679h.01M1104 721h.01M1202 695h.01M1137 700h.01M1202 703h.01M1133 712h.01M1184 692h.01M1250 685h.01M1102 715h.01M1261 677h.01M1259 675h.01M1272 662h.01M1250 684h.01M1301 629h.01M1259 669h.01M1274 664h.01M1247 681h.01M1318 628h.01M1250 685h.01M1300 643h.01M1294 651h.01M1254 677h.01M1297 645h.01M1266 659h.01M1293 643h.01M1254 678h.01M1296 632h.01M1248 687h.01M1299 639h.01M1318 622h.01M1284 657h.01M1287 654h.01M1262 664h.01M1263 663h.01M1313 624h.01M1279 657h.01M1306 626h.01M1276 663h.01M1248 682h.01M1253 678h.01M1290 639h.01M1249 683h.01M1287 648h.01M1275 664h.01M1296 641h.01M1256 682h.01M1299 646h.01M1317 624h.01M1296 645h.01M1266 661h.01M1284 649h.01M1249 688h.01M1250 682h.01M1310 633h.01M1307 629h.01M1254 688h.01M1307 630h.01M1292 640h.01M1310 632h.01M1320 626h.01M1256 676h.01M1313 633h.01M1248 685h.01M1268 655h.01M1312 633h.01M1252 673h.01M1077 766h.01M1036 682h.01M1050 718h.01M1040 692h.01M1028 698h.01M1057 743h.01M1031 706h.01M1033 709h.01M1029 684h.01M1045 746h.01M1058 757h.01M1038 697h.01M1057 748h.01M1033 676h.01M1077 764h.01M1043 715h.01M1062 751h.01M1067 779h.01M1039 709h.01M1043 700h.01M1017 690h.01M1031 681h.01M1032 715h.01M1014 670h.01M1049 767h.01M1030 673h.01M1070 765h.01M1055 756h.01M1034 691h.01M1037 766h.01M1076 744h.01M1025 669h.01M1045 745h.01M1053 765h.01M1066 734h.01M1074 764h.01M1041 717h.01M1042 702h.01M1043 743h.01M1048 778h.01M1067 770h.01M1047 773h.01M1022 694h.01M1029 688h.01M1037 681h.01M1064 770h.01M1054 778h.01M1053 747h.01M1017 672h.01M1067 777h.01M1050 715h.01M1045 776h.01M1026 695h.01M1041 779h.01M1042 770h.01M1035 715h.01M1043 711h.01M1061 764h.01M1023 669h.01M1015 688h.01M1042 777h.01M1044 710h.01M1023 671h.01M1041 773h.01M1069 761h.01M1056 744h.01M1034 693h.01M1018 669h.01M1031 709h.01M1068 770h.01M1066 771h.01M1048 763h.01M1024 691h.01M1056 748h.01M1006 677h.01M1029 696h.01M1061 742h.01M1070 758h.01M1057 745h.01M1051 766h.01M1031 690h.01M1062 741h.01M1037 714h.01M1041 692h.01M1035 716h.01M1060 775h.01M1134 726h.01M1133 714h.01M1138 717h.01M1135 742h.01M1136 716h.01M1190 737h.01M1183 732h.01M1181 769h.01M1182 733h.01M1175 772h.01M1219 741h.01M1214 740h.01M1216 730h.01M1219 750h.01M1218 729h.01M1206 717h.01M1214 728h.01M1214 732h.01M1209 713h.01M1227 723h.01M1231 719h.01M1231 731h.01M1246 737h.01M1231 734h.01M1238 718h.01M1236 711h.01M1078 771h.01M1045 757h.01M1075 742h.01M1071 781h.01M1080 763h.01M1065 757h.01M1087 787h.01M1055 759h.01M1082 785h.01M1060 737h.01M1086 807h.01M1087 791h.01M1058 771h.01M1088 797h.01M1059 735h.01M1057 752h.01M1083 757h.01M1076 754h.01M1080 747h.01M1060 763h.01M1057 749h.01M1038 756h.01M1063 739h.01M1074 779h.01M1056 757h.01M1073 780h.01M1071 758h.01M1061 765h.01M1054 764h.01M1084 785h.01M1089 788h.01M1069 768h.01M1073 767h.01M1073 764h.01M1075 752h.01M1043 755h.01M1084 783h.01M1067 748h.01M1081 798h.01M1052 768h.01M1087 786h.01M1070 759h.01M1077 760h.01M1084 789h.01M1081 786h.01M1077 750h.01M1085 762h.01M1071 778h.01M1040 760h.01M1082 749h.01M1082 798h.01M1071 776h.01M1071 753h.01M1072 778h.01M1088 783h.01M1085 753h.01M1076 749h.01M1056 754h.01M1070 753h.01M1203 715h.01M1215 706h.01M1213 708h.01M1214 740h.01M1210 707h.01M1220 736h.01M1218 730h.01M1219 745h.01M1219 705h.01M1221 741h.01M1214 703h.01M1217 729h.01M1218 744h.01M1220 725h.01M1210 705h.01M1218 749h.01M1580 595h.01M1487 552h.01M1553 571h.01M1655 603h.01M1443 627h.01M1507 607h.01M1603 574h.01M1448 597h.01M1536 650h.01M1436 664h.01M1469 639h.01M1581 603h.01M1597 609h.01M1551 599h.01M1504 623h.01M1532 513h.01M1552 655h.01M1617 611h.01M1441 552h.01M1452 604h.01M1485 592h.01M1598 641h.01M1485 600h.01M1502 529h.01M1454 636h.01M1658 616h.01M1550 576h.01M1566 574h.01M1574 631h.01M1520 462h.01M1544 549h.01M1465 568h.01M1489 606h.01M1524 636h.01M1663 631h.01M1547 522h.01M1622 590h.01M1562 634h.01M1572 529h.01M1555 507h.01M1566 640h.01M1565 656h.01M1645 618h.01M1616 575h.01M1660 557h.01M1515 490h.01M1585 634h.01M1527 606h.01M1509 560h.01M1621 592h.01M1597 655h.01M1444 553h.01M1519 514h.01M1513 559h.01M1443 534h.01M1445 616h.01M1451 570h.01M1546 572h.01M1465 613h.01M1594 536h.01M1648 608h.01M1549 541h.01M1461 567h.01M1464 602h.01M1496 540h.01M1462 595h.01M1554 648h.01M1543 662h.01M1463 621h.01M1596 559h.01M1668 558h.01M1498 617h.01M1600 556h.01M1532 639h.01M1516 469h.01M1580 547h.01M1426 540h.01M1581 658h.01M1444 625h.01M1539 664h.01M1502 600h.01M1617 609h.01M1589 640h.01M1606 621h.01M1515 673h.01M1579 525h.01M1549 665h.01M1562 536h.01M1517 596h.01M1489 553h.01M1499 546h.01M1554 508h.01M1570 598h.01M1536 684h.01M1555 645h.01M1604 612h.01M1491 541h.01M1466 642h.01M1569 617h.01M1656 610h.01M1512 531h.01M1505 610h.01M1588 541h.01M1511 605h.01M1453 617h.01M1563 529h.01M1430 550h.01M1551 608h.01M1469 639h.01M1537 685h.01M1466 581h.01M1638 589h.01M1536 586h.01M1599 655h.01M1458 613h.01M1551 564h.01M1510 555h.01M1520 683h.01M1439 621h.01M1642 567h.01M1609 576h.01M1667 612h.01M1570 617h.01M1479 568h.01M1450 626h.01M1518 616h.01M1621 597h.01M1426 544h.01M1549 682h.01M1672 512h.01M1569 521h.01M1590 565h.01M1607 691h.01M1592 667h.01M1558 653h.01M1561 584h.01M1520 460h.01M1555 610h.01M1556 590h.01M1498 562h.01M1478 547h.01M1566 539h.01M1499 561h.01M1624 562h.01M1518 611h.01M1671 572h.01M1646 529h.01M1573 537h.01M1454 634h.01M1593 694h.01M1536 591h.01M1573 601h.01M1597 612h.01M1556 600h.01M1513 622h.01M1637 534h.01M1509 473h.01M1681 538h.01M1545 676h.01M1611 607h.01M1508 591h.01M1592 548h.01M1459 673h.01M1542 610h.01M1653 608h.01M1560 585h.01M1600 652h.01M1517 624h.01M1442 669h.01M1571 518h.01M1588 636h.01M1449 592h.01M1584 575h.01M1579 649h.01M1601 615h.01M1472 557h.01M1534 640h.01M1546 670h.01M1657 580h.01M1567 582h.01M1516 500h.01M1534 579h.01M1617 669h.01M1600 669h.01M1516 586h.01M1590 576h.01M1586 629h.01M1548 620h.01M1542 599h.01M1675 621h.01M1431 687h.01M1582 595h.01M1506 546h.01M1564 547h.01M1550 672h.01M1467 595h.01M1593 635h.01M1453 697h.01M1496 614h.01M1656 626h.01M1456 606h.01M1440 555h.01M1543 558h.01M1599 555h.01M1642 552h.01M1531 558h.01M1478 587h.01M1522 458h.01M1571 588h.01M1578 525h.01M1602 627h.01M1570 526h.01M1473 603h.01M1511 522h.01M1442 546h.01M1545 565h.01M1505 537h.01M1520 669h.01M1509 645h.01M1461 647h.01M1619 596h.01M1465 593h.01M1584 648h.01M1435 585h.01M1680 541h.01M1547 621h.01M1640 616h.01M1580 643h.01M1535 518h.01M1492 613h.01M1510 555h.01M1519 495h.01M1518 668h.01M1629 585h.01M1430 592h.01M1443 668h.01M1455 652h.01M1589 567h.01M1528 650h.01M1611 575h.01M1551 514h.01M1614 589h.01M1550 564h.01M1537 574h.01M1600 623h.01M1562 661h.01M1524 542h.01M1629 597h.01M1467 617h.01M1561 525h.01M1428 556h.01M1593 662h.01M1604 675h.01M1568 643h.01M1460 577h.01M1459 645h.01M1533 547h.01M1520 509h.01M1562 597h.01M1440 653h.01M1631 590h.01M1514 548h.01M1516 502h.01M1547 572h.01M1550 517h.01M1453 659h.01M1551 595h.01M1438 537h.01M1459 612h.01M1596 578h.01M1444 651h.01M1529 678h.01M1569 638h.01M1516 668h.01M1441 554h.01M1452 572h.01M1467 592h.01M1508 671h.01M1447 556h.01M1548 559h.01M1515 618h.01M1576 595h.01M1581 605h.01M1423 546h.01M1429 591h.01M1604 622h.01M1592 604h.01M1591 671h.01M1504 529h.01M1589 586h.01M1593 662h.01M1517 454h.01M1452 563h.01M1568 526h.01M1529 628h.01M1642 616h.01M1671 527h.01M1597 620h.01M1443 603h.01M1447 546h.01M1546 584h.01M1504 600h.01M1550 546h.01M1577 584h.01M1533 555h.01M1585 586h.01M1677 555h.01M1519 456h.01M1467 585h.01M1502 652h.01M1640 530h.01M1649 536h.01M1676 623h.01M1568 534h.01M1549 516h.01M1539 520h.01M1617 599h.01M1455 604h.01M1654 568h.01M1639 581h.01M1551 620h.01M1451 612h.01M1501 555h.01M1532 658h.01M1680 629h.01M1515 624h.01M1564 617h.01M1511 614h.01M1534 559h.01M1589 571h.01M1484 630h.01M1513 623h.01M1597 688h.01M1533 659h.01M1614 662h.01M1464 585h.01M1488 616h.01M1540 584h.01M1450 592h.01M1510 592h.01M1466 552h.01M1564 603h.01M1571 626h.01M1447 553h.01M1657 578h.01M1559 527h.01M1585 595h.01M1541 677h.01M1510 509h.01M1562 524h.01M1602 627h.01M1460 662h.01M1511 597h.01M1569 596h.01M1459 606h.01M1531 535h.01M1646 588h.01M1599 576h.01M1609 574h.01M1459 614h.01M1461 656h.01M1586 609h.01M1552 582h.01M1560 587h.01M1643 532h.01M1478 627h.01M1591 560h.01M1661 615h.01M1546 672h.01M1512 496h.01M1613 570h.01M1487 615h.01M1654 544h.01M1531 631h.01M1614 595h.01M1588 547h.01M1570 520h.01M1473 583h.01M1526 643h.01M1523 515h.01M1515 528h.01M1470 566h.01M1462 545h.01M1575 527h.01M1464 645h.01M1518 618h.01M1565 615h.01M1543 611h.01M1561 659h.01M1542 671h.01M1531 575h.01M1518 683h.01M1448 557h.01M1545 678h.01M1555 674h.01M1466 616h.01M1485 604h.01M1452 567h.01M1597 562h.01M1497 624h.01M1606 592h.01M1573 612h.01M1489 560h.01M1530 513h.01M1597 703h.01M1550 584h.01M1465 608h.01M1522 520h.01M1668 545h.01M1453 617h.01M1643 524h.01M1620 606h.01M1559 625h.01M1572 584h.01M1649 568h.01M1540 582h.01M1528 569h.01M1458 597h.01M1669 620h.01M1550 516h.01M1659 538h.01M1536 583h.01M1624 597h.01M1573 549h.01M1591 571h.01M1475 632h.01M1537 642h.01M1456 670h.01M1514 685h.01M1646 586h.01M1522 517h.01M1678 545h.01M1612 687h.01M1537 670h.01M1587 653h.01M1555 548h.01M1541 522h.01M1536 560h.01M1593 691h.01M1454 555h.01M1548 678h.01M1676 545h.01M1522 513h.01M1663 530h.01M1535 678h.01M1476 561h.01M1507 504h.01M1442 661h.01M1600 709h.01M1573 580h.01M1556 600h.01M1476 562h.01M1547 660h.01M1603 573h.01M1579 590h.01M1554 636h.01M1618 609h.01M1671 535h.01M1664 578h.01M1550 608h.01M1659 587h.01M1459 639h.01M1549 655h.01M1544 657h.01M1444 659h.01M1608 588h.01M1523 503h.01M1657 541h.01M1659 620h.01M1614 567h.01M1597 631h.01M1548 645h.01M1497 579h.01M1458 554h.01M1538 549h.01M1455 585h.01M1672 628h.01M1583 588h.01M1603 552h.01M1510 581h.01M1537 583h.01M1463 578h.01M1646 522h.01M1615 556h.01M1514 589h.01M1589 641h.01M1661 613h.01M1439 535h.01M1533 511h.01M1525 490h.01M1600 633h.01M1616 668h.01M1433 655h.01M1643 587h.01M1667 555h.01M1513 587h.01M1556 546h.01M1506 606h.01M1538 550h.01M1582 576h.01M1551 670h.01M1448 699h.01M1483 549h.01M1426 555h.01M1603 570h.01M1429 592h.01M1496 551h.01M1472 623h.01M1506 584h.01M1515 611h.01M1528 504h.01M1573 612h.01M1640 609h.01M1576 593h.01M1538 582h.01M1538 649h.01M1594 695h.01M1547 593h.01M1519 487h.01M1525 517h.01M1449 544h.01M1542 616h.01M1516 611h.01M1481 558h.01M1504 543h.01M1462 570h.01M1524 497h.01M1498 543h.01M1596 604h.01M1572 657h.01M1681 629h.01M1506 479h.01M1561 535h.01M1431 538h.01M1546 679h.01M1523 526h.01M1675 548h.01M1486 623h.01M1638 531h.01M1544 618h.01M1589 610h.01M1538 677h.01M1546 679h.01M1445 565h.01M1652 565h.01M1675 538h.01M1458 631h.01M1437 660h.01M1665 623h.01M1442 656h.01M1588 626h.01M1459 611h.01M1620 590h.01M1478 622h.01M1518 610h.01M1511 546h.01M1443 560h.01M1573 619h.01M1546 645h.01M1503 647h.01M1543 673h.01M1655 587h.01M1497 604h.01M1551 589h.01M1657 587h.01M1535 647h.01M1463 637h.01M1563 527h.01M1599 653h.01M1479 555h.01M1644 564h.01M1464 599h.01M1436 543h.01M1522 516h.01M1473 561h.01M1455 545h.01M1491 542h.01M1462 601h.01M1611 571h.01M1531 587h.01M1662 538h.01M1560 517h.01M1516 529h.01M1598 645h.01M1593 570h.01M1582 618h.01M1612 609h.01M1621 594h.01M1595 667h.01M1507 481h.01M1547 651h.01M1516 571h.01M1525 531h.01M1464 612h.01M1462 642h.01M1444 650h.01M1478 624h.01M1462 573h.01M1657 603h.01M1534 630h.01M1451 667h.01M1562 518h.01M1509 628h.01M1581 609h.01M1643 523h.01M1649 575h.01M1507 686h.01M1502 602h.01M1565 585h.01M1502 614h.01M1429 690h.01M1457 637h.01M1511 486h.01M1501 586h.01M1516 621h.01M1458 613h.01M1649 533h.01M1479 583h.01M1609 606h.01M1439 545h.01M1551 680h.01M1519 524h.01M1486 558h.01M1491 581h.01M1525 503h.01M1476 591h.01M1639 536h.01M1454 634h.01M1477 562h.01M1504 611h.01M1609 710h.01M1664 504h.01M1460 551h.01M1550 603h.01M1591 629h.01M1672 536h.01M1518 578h.01M1475 562h.01M1530 603h.01M1456 619h.01M1594 623h.01M1516 495h.01M1519 492h.01M1556 567h.01M1443 574h.01M1553 530h.01M1447 560h.01M1535 618h.01M1676 527h.01M1537 660h.01M1472 634h.01M1452 544h.01M1630 585h.01M1624 562h.01M1513 624h.01M1424 553h.01M1518 618h.01M1600 555h.01M1534 623h.01M1463 590h.01M1601 638h.01M1498 615h.01M1451 612h.01M1560 541h.01M1488 631h.01M1660 613h.01M1437 582h.01M1454 673h.01M1485 571h.01M1657 539h.01M1631 565h.01M1577 618h.01M1550 645h.01M1615 684h.01M1555 602h.01M1515 587h.01M1528 564h.01M1631 591h.01M1492 599h.01M1676 556h.01M1501 553h.01M1503 601h.01M1595 697h.01M1582 594h.01M1578 608h.01M1658 607h.01M1573 614h.01M1626 590h.01M1624 589h.01M1547 577h.01M1510 578h.01M1544 611h.01M1454 654h.01M1588 615h.01M1472 552h.01M1483 591h.01M1553 611h.01M1549 582h.01M1440 559h.01M1551 642h.01M1464 600h.01M1443 659h.01M1661 546h.01M1569 617h.01M1518 523h.01M1566 507h.01M1588 653h.01M1595 538h.01M1548 569h.01M1679 517h.01M1541 647h.01M1501 554h.01M1611 618h.01M1578 605h.01M1514 689h.01M1579 662h.01M1582 635h.01M1559 580h.01M1552 576h.01M1634 566h.01M1530 535h.01M1560 503h.01M1533 540h.01M1442 664h.01M1590 675h.01M1583 584h.01M1540 648h.01M1514 482h.01M1569 597h.01M1671 574h.01M1595 651h.01M1580 649h.01M1440 645h.01M1453 673h.01M1465 551h.01M1580 531h.01M1513 560h.01M1586 547h.01M1657 566h.01M1631 564h.01M1474 581h.01M1570 631h.01M1460 591h.01M1567 584h.01M1533 557h.01M1639 585h.01M1658 576h.01M1658 564h.01M1501 563h.01M1554 540h.01M1513 580h.01M1500 628h.01M1560 599h.01M1591 618h.01M1461 544h.01M1552 551h.01M1459 604h.01M1601 582h.01M1549 604h.01M1499 613h.01M1431 669h.01M1494 553h.01M1518 490h.01M1535 547h.01M1668 532h.01M1664 573h.01M1466 542h.01M1656 613h.01M1577 613h.01M1452 553h.01M1505 597h.01M1500 648h.01M1568 660h.01M1592 676h.01M1526 476h.01M1561 547h.01M1430 567h.01M1587 636h.01M1617 662h.01M1568 625h.01M1463 589h.01M1651 625h.01M1463 585h.01M1658 606h.01M1510 562h.01M1681 549h.01M1598 662h.01M1505 468h.01M1678 622h.01M1634 583h.01M1605 554h.01M1536 505h.01M1520 623h.01M1517 682h.01M1515 493h.01M1606 601h.01M1515 474h.01M1546 645h.01M1453 545h.01M1605 601h.01M1528 629h.01M1564 523h.01M1593 702h.01M1573 590h.01M1581 622h.01M1557 596h.01M1490 626h.01M1502 558h.01M1594 680h.01M1633 587h.01M1673 624h.01M1564 506h.01M1524 524h.01M1518 624h.01M1458 561h.01M1580 632h.01M1663 623h.01M1538 572h.01M1534 640h.01M1579 551h.01M1530 640h.01M1667 582h.01M1599 617h.01M1504 609h.01M1550 675h.01M1527 503h.01M1594 651h.01M1668 560h.01M1624 592h.01M1566 593h.01M1584 648h.01M1616 613h.01M1450 567h.01M1458 654h.01M1582 579h.01M1592 607h.01M1641 609h.01M1680 547h.01M1553 654h.01M1474 639h.01M1444 663h.01M1436 709h.01M1490 627h.01M1667 542h.01M1490 614h.01M1546 589h.01M1454 643h.01M1555 508h.01M1609 688h.01M1505 464h.01M1522 495h.01M1544 549h.01M1556 615h.01M1548 591h.01M1433 709h.01M1536 583h.01M1448 651h.01M1584 568h.01M1540 678h.01M1510 489h.01M1515 535h.01M1567 504h.01M1452 651h.01M1547 613h.01M1541 560h.01M1566 597h.01M1535 662h.01M1527 541h.01M1437 551h.01M1659 577h.01M1590 554h.01M1469 620h.01M1429 702h.01M1588 606h.01M1459 612h.01M1466 600h.01M1513 539h.01M1452 539h.01M1560 538h.01M1600 706h.01M1481 634h.01M1595 633h.01M1556 681h.01M1516 681h.01M1544 580h.01M1479 591h.01M1528 584h.01M1670 519h.01M1651 533h.01M1429 688h.01M1462 609h.01M1460 629h.01M1619 563h.01M1484 633h.01M1518 627h.01M1644 582h.01M1543 657h.01M1462 634h.01M1542 676h.01M1502 537h.01M1472 609h.01M1583 634h.01M1466 578h.01M1556 518h.01M1540 560h.01M1511 555h.01M1652 583h.01M1541 561h.01M1509 497h.01M1554 648h.01M1659 564h.01M1471 583h.01M1505 543h.01M1560 616h.01M1609 571h.01M1475 639h.01M1596 564h.01M1638 577h.01M1511 604h.01M1551 673h.01M1614 615h.01M1657 541h.01M1659 608h.01M1492 576h.01M1505 541h.01M1487 631h.01M1507 632h.01M1600 667h.01M1446 655h.01M1575 595h.01M1585 648h.01M1474 558h.01M1548 673h.01M1572 660h.01M1639 533h.01M1454 631h.01M1434 692h.01M1448 643h.01M1660 613h.01M1501 548h.01M1500 579h.01M1462 607h.01M1564 659h.01M1538 670h.01M1664 526h.01M1510 612h.01M1441 649h.01M1472 573h.01M1505 545h.01M1539 547h.01M1472 572h.01M1547 608h.01M1523 525h.01M1544 560h.01M1455 670h.01M1457 589h.01M1530 549h.01M1520 570h.01M1469 637h.01M1584 586h.01M1588 617h.01M1673 628h.01M1452 662h.01M1428 541h.01M1562 505h.01M1662 631h.01M1634 610h.01M1596 651h.01M1598 576h.01M1588 587h.01M1579 637h.01M1439 689h.01M1607 683h.01M1586 652h.01M1635 534h.01M1661 624h.01M1546 570h.01M1646 523h.01M1515 615h.01M1460 663h.01M1458 612h.01M1512 527h.01M1548 620h.01M1581 597h.01M1535 632h.01M1470 584h.01M1448 595h.01M1522 667h.01M1492 579h.01M1555 509h.01M1511 605h.01M1459 602h.01M1582 656h.01M1659 575h.01M1569 645h.01M1640 613h.01M1466 636h.01M1470 632h.01M1553 620h.01M1673 559h.01M1563 524h.01M1502 650h.01M1491 613h.01M1581 612h.01M1450 560h.01M1663 631h.01M1550 678h.01M1597 641h.01M1596 675h.01M1586 616h.01M1585 580h.01M1669 630h.01M1597 619h.01M1561 518h.01M1486 598h.01M1513 583h.01M1610 570h.01M1549 674h.01M1671 518h.01M1505 543h.01M1552 524h.01M1594 649h.01M1503 612h.01M1531 558h.01M1556 524h.01M1454 626h.01M1453 648h.01M1429 551h.01M1563 664h.01M1516 618h.01M1611 580h.01M1451 607h.01M1608 595h.01M1432 665h.01M1543 612h.01M1548 552h.01M1558 514h.01M1501 547h.01M1463 618h.01M1532 590h.01M1532 587h.01M1524 607h.01M1473 590h.01M1607 617h.01M1535 498h.01M1540 567h.01M1638 556h.01M1525 550h.01M1563 585h.01M1663 547h.01M1563 634h.01M1663 586h.01M1458 621h.01M1547 538h.01M1563 632h.01M1543 559h.01M1506 510h.01M1423 554h.01M1452 546h.01M1669 621h.01M1614 558h.01M1666 631h.01M1440 687h.01M1580 660h.01M1514 595h.01M1537 658h.01M1491 622h.01M1554 574h.01M1517 596h.01M1587 576h.01M1601 674h.01M1568 526h.01M1527 503h.01M1522 578h.01M1560 622h.01M1533 677h.01M1577 551h.01M1611 708h.01M1453 556h.01M1544 656h.01M1542 680h.01M1549 517h.01M1571 524h.01M1620 596h.01M1539 656h.01M1441 668h.01M1528 630h.01M1458 644h.01M1589 594h.01M1526 674h.01M1553 676h.01M1586 639h.01M1538 566h.01M1596 560h.01M1578 599h.01M1437 582h.01M1574 585h.01M1558 602h.01M1542 665h.01M1603 570h.01M1461 604h.01M1541 548h.01M1618 596h.01M1574 546h.01M1529 516h.01M1505 600h.01M1448 644h.01M1505 650h.01M1465 570h.01M1583 635h.01M1608 598h.01M1581 631h.01M1512 508h.01M1595 605h.01M1566 665h.01M1597 548h.01M1560 530h.01M1519 593h.01M1433 587h.01M1497 615h.01M1622 564h.01M1516 618h.01M1445 649h.01M1583 574h.01M1602 562h.01M1606 670h.01M1489 626h.01M1589 623h.01M1564 503h.01M1441 663h.01M1504 580h.01M1455 604h.01M1538 667h.01M1477 598h.01M1596 706h.01M1474 550h.01M1509 514h.01M1535 648h.01M1642 556h.01M1504 559h.01M1634 587h.01M1505 622h.01M1434 685h.01M1438 684h.01M1560 672h.01M1582 585h.01M1561 617h.01M1528 534h.01M1517 496h.01M1614 608h.01M1484 619h.01M1461 667h.01M1477 553h.01M1432 552h.01M1565 595h.01M1540 596h.01M1528 607h.01M1554 612h.01M1511 532h.01M1482 619h.01M1511 525h.01M1458 633h.01M1542 569h.01M1456 646h.01M1446 651h.01M1503 500h.01M1473 567h.01M1443 570h.01M1530 636h.01M1680 524h.01M1475 586h.01M1599 575h.01M1561 548h.01M1580 584h.01M1520 685h.01M1493 599h.01M1450 647h.01M1608 619h.01M1457 696h.01M1603 617h.01M1512 478h.01M1579 633h.01M1440 638h.01M1451 576h.01M1538 574h.01M1470 623h.01M1651 535h.01M1579 609h.01M1539 654h.01M1671 628h.01M1483 543h.01M1462 610h.01M1523 671h.01M1518 513h.01M1586 572h.01M1439 560h.01M1530 549h.01M1511 498h.01M1429 545h.01M1472 640h.01M1479 624h.01M1579 603h.01M1590 570h.01M1540 677h.01M1491 553h.01M1524 577h.01M1655 544h.01M1589 550h.01M1652 599h.01M1542 564h.01M1553 614h.01M1556 577h.01M1564 502h.01M1500 586h.01M1506 602h.01M1577 655h.01M1545 667h.01M1533 606h.01M1566 532h.01M1524 532h.01M1556 543h.01M1504 614h.01M1583 654h.01M1467 626h.01M1481 544h.01M1518 626h.01M1512 598h.01M1641 519h.01M1575 614h.01M1573 533h.01M1678 535h.01M1441 552h.01M1592 545h.01M1568 512h.01M1534 589h.01M1556 597h.01M1580 567h.01M1583 551h.01M1596 578h.01M1542 565h.01M1662 612h.01M1656 579h.01M1551 653h.01M1526 638h.01M1602 576h.01M1589 608h.01M1604 549h.01M1523 608h.01M1665 554h.01M1599 574h.01M1472 620h.01M1512 534h.01M1432 568h.01M1586 595h.01M1553 544h.01M1440 662h.01M1594 550h.01M1527 544h.01M1608 602h.01M1470 641h.01M1423 553h.01M1467 574h.01M1512 661h.01M1655 574h.01M1660 623h.01M1525 624h.01M1610 610h.01M1573 604h.01M1609 587h.01M1534 640h.01M1499 605h.01M1650 522h.01M1470 587h.01M1549 639h.01M1551 547h.01M1599 605h.01M1528 514h.01M1425 546h.01M1570 539h.01M1454 551h.01M1673 520h.01M1512 672h.01M1547 581h.01M1457 590h.01M1430 541h.01M1563 609h.01M1531 655h.01M1447 659h.01M1471 605h.01M1495 620h.01M1440 563h.01M1432 597h.01M1635 613h.01M1660 585h.01M1527 677h.01M1668 532h.01M1600 675h.01M1649 526h.01M1552 600h.01M1604 576h.01M1468 626h.01M1452 649h.01M1600 593h.01M1606 606h.01M1547 566h.01M1681 552h.01M1534 559h.01M1452 625h.01M1636 530h.01M1517 618h.01M1429 582h.01M1662 619h.01M1443 552h.01M1556 546h.01M1589 586h.01M1571 636h.01M1554 554h.01M1543 558h.01M1595 638h.01M1530 601h.01M1526 623h.01M1593 573h.01M1656 593h.01M1566 664h.01M1486 620h.01M1665 534h.01M1604 624h.01M1514 669h.01M1527 505h.01M1521 616h.01M1549 657h.01M1512 677h.01M1507 531h.01M1583 583h.01M1568 510h.01M1591 676h.01M1671 540h.01M1453 590h.01M1542 672h.01M1506 562h.01M1513 513h.01M1517 472h.01M1476 632h.01M1623 569h.01M1457 701h.01M1637 585h.01M1438 691h.01M1583 567h.01M1583 636h.01M1592 552h.01M1478 553h.01M1549 564h.01M1432 555h.01M1513 605h.01M1487 615h.01M1557 587h.01M1503 634h.01M1610 711h.01M1566 538h.01M1510 610h.01M1477 601h.01M1523 510h.01M1544 584h.01M1515 532h.01M1667 582h.01M1502 549h.01M1468 629h.01M1557 656h.01M1509 662h.01M1487 565h.01M1509 511h.01M1580 662h.01M1500 600h.01M1517 597h.01M1511 519h.01M1543 667h.01M1608 586h.01M1454 550h.01M1508 478h.01M1638 556h.01M1648 522h.01M1436 710h.01M1524 616h.01M1509 478h.01M1456 571h.01M1495 656h.01M1441 538h.01M1601 705h.01M1463 616h.01M1574 635h.01M1680 545h.01M1667 617h.01M1524 493h.01M1526 655h.01M1483 591h.01M1525 604h.01M1614 685h.01M1609 569h.01M1552 598h.01M1536 679h.01M1504 583h.01M1474 594h.01M1677 529h.01M1597 636h.01M1595 627h.01M1609 616h.01M1549 672h.01M1598 710h.01M1449 555h.01M1591 598h.01M1445 619h.01M1663 552h.01M1489 559h.01M1587 621h.01M1589 664h.01M1481 601h.01M1477 625h.01M1568 661h.01M1504 506h.01M1518 582h.01M1518 527h.01M1535 643h.01M1539 579h.01M1433 551h.01M1457 578h.01M1604 620h.01M1444 663h.01M1454 651h.01M1493 621h.01M1531 600h.01M1463 597h.01M1584 547h.01M1552 550h.01M1547 521h.01M1537 500h.01M1639 609h.01M1582 625h.01M1524 626h.01M1593 566h.01M1600 637h.01M1465 568h.01M1508 503h.01M1516 614h.01M1433 584h.01M1550 588h.01M1449 611h.01M1471 614h.01M1604 612h.01M1504 618h.01M1616 610h.01M1577 624h.01M1528 523h.01M1536 655h.01M1439 621h.01M1496 537h.01M1566 528h.01M1565 531h.01M1431 537h.01M1655 615h.01M1589 602h.01M1651 616h.01M1570 612h.01M1662 504h.01M1582 648h.01M1479 635h.01M1532 553h.01M1446 620h.01M1581 639h.01M1469 612h.01M1670 542h.01M1456 703h.01M1573 641h.01M1614 574h.01M1502 632h.01M1505 603h.01M1507 499h.01M1429 564h.01M1542 663h.01M1529 534h.01M1551 583h.01M1568 608h.01M1450 611h.01M1581 598h.01M1530 637h.01M1655 611h.01M1446 533h.01M1472 633h.01M1528 566h.01M1546 516h.01M1431 582h.01M1553 619h.01M1666 530h.01M1466 612h.01M1570 635h.01M1547 645h.01M1647 515h.01M1545 545h.01M1508 672h.01M1535 503h.01M1555 607h.01M1528 610h.01M1439 705h.01M1601 576h.01M1519 502h.01M1458 657h.01M1665 608h.01M1614 606h.01M1603 620h.01M1611 555h.01M1672 526h.01M1516 473h.01M1591 608h.01M1553 595h.01M1552 607h.01M1568 610h.01M1551 645h.01M1583 540h.01M1548 641h.01M1670 626h.01M1540 587h.01M1659 538h.01M1586 639h.01M1457 555h.01M1626 568h.01M1470 562h.01M1570 604h.01M1504 620h.01M1448 640h.01M1548 679h.01M1540 664h.01M1479 545h.01M1467 631h.01M1461 627h.01M1499 564h.01M1536 502h.01M1438 652h.01M1442 548h.01M1621 598h.01M1502 582h.01M1506 543h.01M1611 615h.01M1596 610h.01M1539 678h.01M1505 534h.01M1503 616h.01M1484 621h.01M1554 597h.01M1661 582h.01M1527 675h.01M1588 607h.01M1567 584h.01M1536 679h.01M1527 492h.01M1466 570h.01M1447 555h.01M1522 571h.01M1596 540h.01M1561 505h.01M1465 545h.01M1549 655h.01M1519 456h.01M1604 700h.01M1644 580h.01M1445 570h.01M1674 630h.01M1575 659h.01M1577 550h.01M1638 615h.01M1444 616h.01M1680 627h.01M1464 644h.01M1491 616h.01M1510 675h.01M1587 620h.01M1631 590h.01M1590 554h.01M1654 613h.01M1585 539h.01M1482 631h.01M1537 664h.01M1435 549h.01M1490 596h.01M1554 560h.01M1523 610h.01M1518 576h.01M1635 535h.01M1449 620h.01M1523 577h.01M1552 577h.01M1565 523h.01M1612 617h.01M1549 670h.01M1600 577h.01M1457 660h.01M1434 567h.01M1456 616h.01M1504 652h.01M1551 513h.01M1593 555h.01M1514 528h.01M1523 572h.01M1429 563h.01M1662 526h.01M1587 585h.01M1605 687h.01M1519 623h.01M1495 564h.01M1604 612h.01M1487 605h.01M1575 622h.01M1590 574h.01M1596 707h.01M1586 654h.01M1454 605h.01M1606 583h.01M1526 574h.01M1488 616h.01M1459 649h.01M1446 613h.01M1457 596h.01M1495 548h.01M1542 600h.01M1516 678h.01M1529 653h.01M1609 576h.01M1460 610h.01M1558 608h.01M1437 580h.01M1581 644h.01M1612 685h.01M1626 592h.01M1562 521h.01M1670 556h.01M1543 657h.01M1568 639h.01M1566 519h.01M1470 567h.01M1540 599h.01M1573 594h.01M1509 466h.01M1580 627h.01M1564 530h.01M1461 545h.01M1515 594h.01M1478 554h.01M1508 510h.01M1511 542h.01M1458 647h.01M1634 570h.01M1460 589h.01M1536 563h.01M1523 529h.01M1527 647h.01M1670 634h.01M1635 593h.01M1664 585h.01M1433 666h.01M1470 609h.01M1534 676h.01M1434 661h.01M1573 531h.01M1599 544h.01M1603 553h.01M1528 495h.01M1656 610h.01M1553 573h.01M1639 527h.01M1597 627h.01M1603 559h.01M1638 528h.01M1613 607h.01M1516 459h.01M1542 677h.01M1614 683h.01M1503 587h.01M1557 617h.01M1440 646h.01M1592 592h.01M1675 536h.01M1543 519h.01M1597 695h.01M1658 598h.01M1567 621h.01M1518 672h.01M1636 609h.01M1547 573h.01M1650 597h.01M1456 624h.01M1570 583h.01M1562 608h.01M1638 583h.01M1538 678h.01M1513 528h.01M1592 615h.01M1433 554h.01M1542 644h.01M1476 553h.01M1596 566h.01M1542 655h.01M1639 526h.01M1593 672h.01M1641 566h.01M1551 578h.01M1609 591h.01M1596 654h.01M1509 563h.01M1601 702h.01M1534 524h.01M1600 649h.01M1507 669h.01M1671 621h.01M1631 590h.01M1560 548h.01M1456 616h.01M1560 574h.01M1490 599h.01M1636 529h.01M1607 586h.01M1545 652h.01M1456 651h.01M1517 486h.01M1590 658h.01M1511 551h.01M1530 545h.01M1630 589h.01M1554 620h.01M1462 619h.01M1571 515h.01M1452 608h.01M1571 590h.01M1669 634h.01M1509 499h.01M1477 561h.01M1545 574h.01M1459 640h.01M1627 590h.01M1553 622h.01M1639 567h.01M1596 605h.01M1569 617h.01M1518 467h.01M1644 537h.01M1462 584h.01M1510 672h.01M1521 462h.01M1515 478h.01M1581 548h.01M1540 571h.01M1511 563h.01M1444 658h.01M1679 542h.01M1463 555h.01M1480 557h.01M1460 614h.01M1579 630h.01M1654 577h.01M1483 627h.01M1641 575h.01M1470 612h.01M1478 561h.01M1444 568h.01M1453 698h.01M1472 559h.01M1468 547h.01M1663 576h.01M1435 552h.01M1506 618h.01M1669 576h.01M1470 578h.01M1542 556h.01M1426 554h.01M1580 645h.01M1483 585h.01M1569 607h.01M1518 533h.01M1517 518h.01M1504 531h.01M1585 575h.01M1638 582h.01M1529 512h.01M1506 539h.01M1581 576h.01M1598 688h.01M1550 514h.01M1580 580h.01M1465 635h.01M1642 526h.01M1640 616h.01M1475 584h.01M1465 610h.01M1513 518h.01M1550 570h.01M1502 530h.01M1673 557h.01M1520 506h.01M1452 631h.01M1681 523h.01M1503 541h.01M1587 553h.01M1462 585h.01M1614 665h.01M1430 685h.01M1466 603h.01M1466 600h.01M1648 593h.01M1448 569h.01M1609 674h.01M1529 498h.01M1475 634h.01M1611 614h.01M1536 601h.01M1602 595h.01M1600 551h.01M1534 640h.01M1586 587h.01M1654 527h.01M1490 557h.01M1638 530h.01M1557 535h.01M1504 551h.01M1586 606h.01M1535 684h.01M1663 527h.01M1638 576h.01M1456 649h.01M1623 547h.01M1539 660h.01M1659 559h.01M1644 524h.01M1606 686h.01M1511 597h.01M1510 597h.01M1518 460h.01M1544 640h.01M1558 623h.01M1466 602h.01M1558 641h.01M1536 499h.01M1588 625h.01M1517 498h.01M1625 570h.01M1524 607h.01M1485 620h.01M1512 456h.01M1463 640h.01M1637 570h.01M1642 533h.01M1557 584h.01M1491 617h.01M1458 597h.01M1624 598h.01M1568 535h.01M1634 577h.01M1568 511h.01M1600 581h.01M1625 563h.01M1490 559h.01M1469 640h.01M1603 623h.01M1660 540h.01M1471 568h.01M1582 614h.01M1514 577h.01M1519 484h.01M1450 551h.01M1657 627h.01M1473 584h.01M1580 569h.01M1453 700h.01M1449 570h.01M1573 622h.01M1489 604h.01M1600 647h.01M1621 596h.01M1532 615h.01M1569 634h.01M1596 665h.01M1613 665h.01M1502 500h.01M1605 579h.01M1507 508h.01M1627 599h.01M1528 493h.01M1656 606h.01M1492 557h.01M1605 601h.01M1584 580h.01M1591 655h.01M1574 624h.01M1557 575h.01M1506 646h.01M1582 529h.01M1656 584h.01M1471 547h.01M1540 498h.01M1550 659h.01M1517 603h.01M1533 653h.01M1664 561h.01M1676 543h.01M1644 532h.01M1601 619h.01M1649 515h.01M1549 641h.01M1582 660h.01M1586 575h.01M1467 570h.01M1594 606h.01M1551 616h.01M1676 626h.01M1501 531h.01M1460 670h.01M1450 654h.01M1509 527h.01M1544 674h.01M1598 604h.01M1462 568h.01M1665 543h.01M1562 632h.01M1436 653h.01M1655 595h.01M1547 617h.01M1595 670h.01M1513 682h.01M1432 549h.01M1637 615h.01M1678 620h.01M1534 678h.01M1570 511h.01M1636 536h.01M1614 561h.01M1518 522h.01M1635 582h.01M1473 631h.01M1588 621h.01M1486 599h.01M1453 655h.01M1512 598h.01M1534 523h.01M1477 587h.01M1670 622h.01M1426 547h.01M1635 590h.01M1530 630h.01M1525 567h.01M1453 617h.01M1599 699h.01M1428 556h.01M1442 550h.01M1600 600h.01M1602 618h.01M1579 641h.01M1555 643h.01M1454 654h.01M1639 562h.01M1572 625h.01M1457 604h.01M1613 588h.01M1450 549h.01M1549 603h.01M1508 557h.01M1550 540h.01M1646 615h.01M1493 615h.01M1563 610h.01M1507 587h.01M1447 697h.01M1533 569h.01M1557 578h.01M1361 580h.01M1300 590h.01M1322 632h.01M1410 637h.01M1411 621h.01M1385 581h.01M1401 588h.01M1414 586h.01M1291 529h.01M1365 583h.01M1390 634h.01M1398 594h.01M1349 541h.01M1355 539h.01M1384 575h.01M1370 579h.01M1343 540h.01M1334 624h.01M1358 600h.01M1330 627h.01M1317 565h.01M1356 583h.01M1417 591h.01M1326 574h.01M1419 652h.01M1285 611h.01M1318 546h.01M1385 660h.01M1402 597h.01M1325 548h.01M1318 541h.01M1294 587h.01M1417 583h.01M1358 636h.01M1314 571h.01M1334 564h.01M1304 582h.01M1353 541h.01M1322 570h.01M1407 587h.01M1287 552h.01M1326 627h.01M1334 638h.01M1309 530h.01M1299 646h.01M1395 649h.01M1398 641h.01M1399 646h.01M1299 641h.01M1432 630h.01M1336 637h.01M1292 523h.01M1417 628h.01M1294 589h.01M1320 647h.01M1388 660h.01M1351 538h.01M1430 660h.01M1314 629h.01M1349 535h.01M1379 587h.01M1386 636h.01M1342 581h.01M1382 633h.01M1356 594h.01M1314 612h.01M1291 527h.01M1311 623h.01M1310 651h.01M1283 534h.01M1429 613h.01M1364 588h.01M1373 571h.01M1306 650h.01M1348 546h.01M1367 591h.01M1357 599h.01M1288 522h.01M1339 542h.01M1426 657h.01M1327 567h.01M1316 637h.01M1307 619h.01M1314 594h.01M1323 650h.01M1327 532h.01M1282 530h.01M1432 630h.01M1329 624h.01M1292 656h.01M1319 565h.01M1382 636h.01M1295 658h.01M1324 606h.01M1282 556h.01M1401 595h.01M1322 627h.01M1285 527h.01M1288 597h.01M1281 661h.01M1403 626h.01M1357 596h.01M1311 526h.01M1325 563h.01M1316 544h.01M1317 539h.01M1288 606h.01M1394 645h.01M1392 645h.01M1281 548h.01M1364 578h.01M1292 636h.01M1374 584h.01M1337 615h.01M1327 536h.01M1281 536h.01M1417 619h.01M1310 522h.01M1331 604h.01M1308 646h.01M1349 562h.01M1307 624h.01M1341 634h.01M1380 587h.01M1322 576h.01M1429 581h.01M1291 608h.01M1316 522h.01M1292 522h.01M1400 608h.01M1423 593h.01M1291 660h.01M1399 588h.01M1298 651h.01M1286 535h.01M1406 626h.01M1310 619h.01M1334 636h.01M1297 600h.01M1373 652h.01M1300 528h.01M1298 635h.01M1404 618h.01M1289 639h.01M1415 619h.01M1282 549h.01M1328 632h.01M1332 610h.01M1319 554h.01M1413 575h.01M1286 652h.01M1290 614h.01M1316 550h.01M1325 597h.01M1312 533h.01M1333 628h.01M1296 530h.01M1337 540h.01M1305 650h.01M1365 579h.01M1338 574h.01M1293 648h.01M1291 523h.01M1434 629h.01M1416 627h.01M1341 543h.01M1409 595h.01M1383 636h.01M1370 658h.01M1305 595h.01M1425 583h.01M1340 572h.01M1311 639h.01M1403 605h.01M1352 602h.01M1367 577h.01M1303 593h.01M1312 578h.01M1377 591h.01M1355 591h.01M1392 646h.01M1372 655h.01M1286 656h.01M1414 629h.01M1383 577h.01M1408 615h.01M1317 629h.01M1378 653h.01M1324 537h.01M1285 529h.01M1282 658h.01M1415 618h.01M1400 629h.01M1351 552h.01M1363 598h.01M1331 619h.01M1336 538h.01M1316 617h.01M1417 614h.01M1294 527h.01M1319 524h.01M1311 639h.01M1350 593h.01M1303 643h.01M1408 625h.01M1304 603h.01M1363 578h.01M1405 611h.01M1349 588h.01M1298 656h.01M1380 595h.01M1305 605h.01M1422 655h.01M1435 633h.01M1316 579h.01M1321 647h.01M1337 634h.01M1296 566h.01M1298 604h.01M1382 654h.01M1346 536h.01M1320 536h.01M1318 616h.01M1307 636h.01M1288 531h.01M1321 531h.01M1326 650h.01M1304 587h.01M1303 580h.01M1325 584h.01M1290 659h.01M1313 547h.01M1328 628h.01M1326 576h.01M1350 551h.01M1316 530h.01M1299 650h.01M1329 620h.01M1324 567h.01M1324 540h.01M1294 654h.01M1307 648h.01M1322 585h.01M1283 650h.01M1317 564h.01M1298 604h.01M1313 619h.01M1320 551h.01M1409 597h.01M1358 602h.01M1406 626h.01M1347 581h.01M1386 660h.01M1351 584h.01M1351 552h.01M1397 583h.01M1419 584h.01M1286 600h.01M1308 592h.01M1432 593h.01M1372 574h.01M1306 597h.01M1306 592h.01M1368 580h.01M1392 651h.01M1324 593h.01M1321 520h.01M1334 633h.01M1320 615h.01M1354 591h.01M1369 572h.01M1381 577h.01M1368 597h.01M1317 581h.01M1380 575h.01M1314 547h.01M1399 620h.01M1355 592h.01M1379 653h.01M1289 602h.01M1333 559h.01M1302 647h.01M1314 522h.01M1369 646h.01M1291 656h.01M1286 651h.01M1375 656h.01M1340 622h.01M1287 656h.01M1305 629h.01M1395 649h.01M1407 626h.01M1404 588h.01M1298 597h.01M1412 603h.01M1410 582h.01M1305 628h.01M1350 536h.01M1420 656h.01M1304 630h.01M1328 598h.01M1348 560h.01M1315 631h.01M1435 628h.01M1347 538h.01M1365 592h.01M1385 633h.01M1416 626h.01M1320 623h.01M1325 573h.01M1331 638h.01M1367 631h.01M1320 549h.01M1300 595h.01M1352 556h.01M1326 650h.01M1350 583h.01M1426 592h.01M1384 641h.01M1343 539h.01M1412 583h.01M1371 586h.01M1287 633h.01M1351 565h.01M1352 589h.01M1371 651h.01M1417 616h.01M1369 598h.01M1384 655h.01M1310 642h.01M1411 588h.01M1282 554h.01M1302 595h.01M1421 657h.01M1415 597h.01M1325 604h.01M1290 615h.01M1324 613h.01M1379 648h.01M1325 566h.01M1325 608h.01M1319 526h.01M1305 591h.01M1366 629h.01M1322 586h.01M1357 602h.01M1401 612h.01M1341 622h.01M1429 606h.01M1384 641h.01M1297 656h.01M1338 630h.01M1400 605h.01M1292 602h.01M1416 585h.01M1326 631h.01M1283 521h.01M1416 643h.01M1413 600h.01M1382 643h.01M1293 535h.01M1290 600h.01M1357 601h.01M1302 638h.01M1407 584h.01M1399 614h.01M1343 629h.01M1339 626h.01M1368 618h.01M1413 600h.01M1351 580h.01M1344 574h.01M1296 646h.01M1330 549h.01M1299 653h.01M1335 632h.01M1342 638h.01M1320 606h.01M1323 549h.01M1315 544h.01M1294 596h.01M1317 621h.01M1327 633h.01M1429 577h.01M1324 568h.01M1301 598h.01M1400 640h.01M1351 604h.01M1385 653h.01M1378 587h.01M1420 659h.01M1353 584h.01M1389 636h.01M1358 686h.01M1350 686h.01M1384 778h.01M1307 682h.01M1307 680h.01M1403 730h.01M1379 674h.01M1312 688h.01M1345 684h.01M1401 728h.01M1372 688h.01M1322 680h.01M1346 680h.01M1394 717h.01M1387 725h.01M1381 779h.01M1375 684h.01M1346 688h.01M1338 700h.01M1320 700h.01M1403 741h.01M1336 661h.01M1417 741h.01M1377 682h.01M1356 667h.01M1369 679h.01M1346 718h.01M1316 684h.01M1404 729h.01M1389 690h.01M1402 700h.01M1391 666h.01M1378 723h.01M1324 701h.01M1429 681h.01M1389 660h.01M1413 727h.01M1310 683h.01M1425 745h.01M1358 733h.01M1359 736h.01M1375 764h.01M1352 685h.01M1325 691h.01M1432 722h.01M1356 689h.01M1325 706h.01M1424 746h.01M1350 708h.01M1344 682h.01M1396 670h.01M1416 743h.01M1408 735h.01M1383 726h.01M1401 739h.01M1417 730h.01M1369 718h.01M1390 722h.01M1347 700h.01M1366 700h.01M1311 673h.01M1375 673h.01M1434 728h.01M1383 720h.01M1358 667h.01M1396 740h.01M1387 724h.01M1404 749h.01M1348 691h.01M1347 717h.01M1351 703h.01M1327 717h.01M1421 747h.01M1378 689h.01M1340 695h.01M1362 673h.01M1314 669h.01M1375 686h.01M1336 666h.01M1403 695h.01M1359 666h.01M1363 670h.01M1410 742h.01M1307 666h.01M1392 693h.01M1407 742h.01M1307 671h.01M1382 688h.01M1399 734h.01M1378 678h.01M1350 702h.01M1317 699h.01M1360 674h.01M1363 684h.01M1314 677h.01M1381 676h.01M1395 691h.01M1391 718h.01M1357 667h.01M1355 692h.01M1403 729h.01M1347 697h.01M1396 728h.01M1317 684h.01M1390 692h.01M1405 736h.01M1328 708h.01M1361 665h.01M1409 732h.01M1402 674h.01M1372 676h.01M1429 685h.01M1368 682h.01M1299 664h.01M1336 661h.01M1334 630h.01M1329 628h.01M1309 631h.01M1312 629h.01M1323 636h.01M1340 649h.01M1316 642h.01M1307 659h.01M1341 632h.01M1318 632h.01M1339 632h.01M1331 630h.01M1354 658h.01M1333 648h.01M1338 636h.01M1305 653h.01M1333 649h.01M1320 631h.01M1334 634h.01M1334 659h.01M1347 634h.01M1316 659h.01M1328 645h.01M1310 629h.01M1337 630h.01M1336 652h.01M1344 635h.01M1328 647h.01M1307 629h.01M1324 654h.01M1327 652h.01M1329 650h.01M1319 635h.01M1396 740h.01M1382 738h.01M1439 727h.01M1404 735h.01M1407 805h.01M1419 794h.01M1426 800h.01M1391 708h.01M1424 730h.01M1420 802h.01M1392 706h.01M1388 724h.01M1341 694h.01M1331 714h.01M1410 822h.01M1392 764h.01M1379 741h.01M1361 732h.01M1399 737h.01M1411 710h.01M1384 764h.01M1415 814h.01M1395 699h.01M1379 744h.01M1326 704h.01M1380 746h.01M1385 724h.01M1413 814h.01M1343 694h.01M1390 701h.01M1389 695h.01M1416 820h.01M1393 794h.01M1356 730h.01M1342 741h.01M1328 714h.01M1402 745h.01M1418 794h.01M1410 768h.01M1419 801h.01M1418 816h.01M1331 697h.01M1395 720h.01M1418 807h.01M1406 805h.01M1392 737h.01M1423 727h.01M1378 724h.01M1393 741h.01M1412 813h.01M1390 744h.01M1396 772h.01M1409 708h.01M1403 797h.01M1418 761h.01M1399 742h.01M1391 742h.01M1339 732h.01M1333 704h.01M1388 692h.01M1336 721h.01M1414 739h.01M1326 717h.01M1397 695h.01M1410 798h.01M1395 796h.01M1389 710h.01M1388 722h.01M1386 701h.01M1401 741h.01M1377 765h.01M1371 773h.01M1377 717h.01M1392 788h.01M1422 740h.01M1396 784h.01M1421 736h.01M1336 735h.01M1396 787h.01M1393 699h.01M1418 734h.01M1399 767h.01M1389 692h.01M1389 740h.01M1320 705h.01M1395 701h.01M1398 701h.01M1416 709h.01M1327 716h.01M1397 700h.01M1386 702h.01M1408 734h.01M1402 742h.01M1431 737h.01M1401 783h.01M1331 722h.01M1372 744h.01M1383 738h.01M1375 719h.01M1390 718h.01M1379 751h.01M1413 746h.01M1387 692h.01M1419 733h.01M1391 739h.01M1427 723h.01M1398 806h.01M1426 729h.01M1422 731h.01M1399 766h.01M1325 717h.01M1423 806h.01M1387 760h.01M1390 784h.01M1395 789h.01M1339 733h.01M1356 720h.01M1392 787h.01M1413 738h.01M1356 727h.01M1392 716h.01M1378 743h.01M1395 715h.01M1416 729h.01M1377 734h.01M1387 703h.01M1337 702h.01M1421 727h.01M1388 782h.01M1388 783h.01M1394 707h.01M1403 797h.01M1385 781h.01M1382 690h.01M1405 785h.01M1416 761h.01M1414 790h.01M1420 727h.01M1330 697h.01M1417 705h.01M1398 735h.01M1418 730h.01M1313 707h.01M1425 744h.01M1416 787h.01M1418 742h.01M1419 734h.01"/>
<path fill="none" stroke="#8fca76" stroke-width="6.8" stroke-linecap="round" d="M1009 614h.01M1009 646h.01M1008 631h.01M1012 625h.01M1002 635h.01M1015 617h.01M1008 632h.01M1010 627h.01M1008 623h.01M1013 627h.01M1005 636h.01M1005 631h.01M1007 613h.01M1002 634h.01M1016 639h.01M1012 631h.01M1001 634h.01M1002 623h.01M1005 616h.01M996 617h.01M1018 622h.01M1006 632h.01M1020 623h.01M1053 665h.01M1123 659h.01M1131 635h.01M1155 639h.01M1117 642h.01M1158 598h.01M1199 592h.01M1195 630h.01M1170 639h.01M1109 668h.01M1109 613h.01M1163 611h.01M1062 660h.01M1140 619h.01M1146 656h.01M1101 621h.01M1143 616h.01M1138 624h.01M1121 616h.01M1161 593h.01M1099 659h.01M1113 652h.01M1106 636h.01M1087 667h.01M1143 603h.01M1156 636h.01M1119 609h.01M1210 589h.01M1153 641h.01M1216 593h.01M1114 634h.01M1058 662h.01M1067 641h.01M1214 610h.01M1215 595h.01M1105 642h.01M1194 623h.01M1210 640h.01M1156 612h.01M1192 615h.01M1138 654h.01M1075 648h.01M1053 667h.01M1143 649h.01M1088 644h.01M1085 639h.01M1155 627h.01M1064 646h.01M1203 616h.01M1121 602h.01M1105 665h.01M1118 621h.01M1203 628h.01M1110 609h.01M1144 588h.01M1151 621h.01M1195 606h.01M1089 675h.01M1142 605h.01M1161 593h.01M1242 595h.01M1106 622h.01M1183 642h.01M1055 654h.01M1103 629h.01M1220 607h.01M1205 584h.01M1192 615h.01M1236 604h.01M1128 666h.01M1148 648h.01M1129 661h.01M1129 609h.01M1095 624h.01M1044 670h.01M1235 603h.01M1125 658h.01M1202 586h.01M1148 615h.01M1216 602h.01M1174 605h.01M1211 640h.01M1136 653h.01M1152 642h.01M1087 665h.01M1207 617h.01M1054 666h.01M1127 613h.01M1084 639h.01M1090 635h.01M1101 627h.01M1129 631h.01M1071 640h.01M1132 628h.01M1210 639h.01M1073 688h.01M1198 626h.01M1144 614h.01M1158 618h.01M1075 640h.01M1178 628h.01M1130 668h.01M1108 613h.01M1208 589h.01M1234 629h.01M1160 589h.01M1185 585h.01M1230 601h.01M1108 665h.01M1247 597h.01M1138 617h.01M1239 589h.01M1239 619h.01M1119 607h.01M1154 601h.01M1091 660h.01M1105 668h.01M1144 621h.01M1113 663h.01M1154 584h.01M1233 589h.01M1215 597h.01M1152 606h.01M1200 604h.01M1123 595h.01M1067 677h.01M1076 640h.01M1158 583h.01M1204 589h.01M1139 595h.01M1235 594h.01M1078 636h.01M1104 633h.01M1092 627h.01M1088 650h.01M1212 620h.01M1192 617h.01M1102 643h.01M1204 609h.01M1155 615h.01M1154 622h.01M1223 598h.01M1120 634h.01M1218 610h.01M1132 603h.01M1202 595h.01M1081 637h.01M1158 625h.01M1102 671h.01M1103 640h.01M1201 600h.01M1081 639h.01M1099 658h.01M1210 605h.01M1180 643h.01M1112 639h.01M1163 612h.01M1056 655h.01M1211 640h.01M1049 670h.01M1122 636h.01M1249 605h.01M1114 632h.01M1156 622h.01M1113 644h.01M1249 597h.01M1185 648h.01M1202 589h.01M1196 632h.01M1214 611h.01M1146 600h.01M1245 606h.01M1237 608h.01M1214 592h.01M1184 613h.01M1143 618h.01M1228 591h.01M1094 645h.01M1195 582h.01M1183 612h.01M1217 610h.01M1147 606h.01M1211 585h.01M1117 631h.01M1185 647h.01M1095 650h.01M1158 612h.01M1071 683h.01M1151 618h.01M1139 615h.01M1097 632h.01M1122 614h.01M1184 646h.01M1223 596h.01M1207 640h.01M1178 642h.01M1214 609h.01M1198 600h.01M1115 624h.01M1162 583h.01M1232 592h.01M1089 647h.01M1057 648h.01M1157 627h.01M1207 582h.01M1199 629h.01M1084 631h.01M1233 590h.01M1208 602h.01M1096 645h.01M1211 692h.01M1153 696h.01M1193 692h.01M1120 715h.01M1119 701h.01M1090 716h.01M1116 714h.01M1126 705h.01M1259 673h.01M1165 704h.01M1254 673h.01M1157 700h.01M1162 691h.01M1114 700h.01M1120 720h.01M1123 702h.01M1166 703h.01M1179 705h.01M1253 672h.01M1145 697h.01M1257 670h.01M1212 693h.01M1129 699h.01M1195 701h.01M1218 694h.01M1120 698h.01M1160 698h.01M1160 698h.01M1091 715h.01M1126 700h.01M1144 702h.01M1188 701h.01M1093 726h.01M1137 700h.01M1129 711h.01M1139 699h.01M1192 694h.01M1244 672h.01M1250 670h.01M1219 695h.01M1219 692h.01M1252 684h.01M1118 698h.01M1159 694h.01M1256 675h.01M1185 702h.01M1166 706h.01M1101 728h.01M1096 729h.01M1154 708h.01M1256 682h.01M1301 633h.01M1281 660h.01M1262 666h.01M1278 658h.01M1259 674h.01M1266 667h.01M1303 640h.01M1302 632h.01M1274 654h.01M1272 666h.01M1277 651h.01M1316 623h.01M1045 710h.01M1048 755h.01M1062 760h.01M1062 768h.01M1065 767h.01M1070 761h.01M1043 703h.01M1044 703h.01M1015 670h.01M1059 756h.01M1017 674h.01M1047 766h.01M1057 771h.01M1054 762h.01M1070 754h.01M1068 756h.01M1062 762h.01M1046 709h.01M1031 708h.01M1074 752h.01M1049 763h.01M1057 768h.01M1056 759h.01M1067 746h.01M1061 772h.01M1059 777h.01M1050 757h.01M1043 752h.01M1052 762h.01M1066 752h.01M1073 753h.01M1052 763h.01M1060 758h.01M1137 753h.01M1138 749h.01M1188 742h.01M1188 719h.01M1183 749h.01M1181 768h.01M1183 736h.01M1181 748h.01M1186 727h.01M1179 762h.01M1186 730h.01M1232 727h.01M1235 719h.01M1235 736h.01M1246 719h.01M1233 727h.01M1242 739h.01M1229 715h.01M1248 741h.01M1235 730h.01M1249 732h.01M1247 717h.01M1227 716h.01M1069 753h.01M1071 775h.01M1081 804h.01M1068 776h.01M1080 804h.01M1065 742h.01M1066 741h.01M1064 757h.01M1069 769h.01M1085 769h.01M1066 746h.01M1063 739h.01M1066 767h.01M1067 758h.01M1186 736h.01M1182 770h.01M1207 705h.01M1183 774h.01M1197 734h.01M1188 766h.01M1189 767h.01M1191 749h.01M1192 735h.01M1190 762h.01M1191 754h.01M1201 723h.01M1194 747h.01M1201 717h.01M1185 771h.01M1194 754h.01M1188 735h.01M1442 700h.01M1634 594h.01M1569 654h.01M1503 539h.01M1658 552h.01M1448 690h.01M1470 573h.01M1537 627h.01M1615 589h.01M1577 551h.01M1563 651h.01M1537 535h.01M1448 628h.01M1519 681h.01M1512 683h.01M1556 646h.01M1472 545h.01M1601 693h.01M1615 557h.01M1613 591h.01M1448 616h.01M1604 687h.01M1435 583h.01M1443 575h.01M1457 694h.01M1480 572h.01M1430 707h.01M1515 470h.01M1474 570h.01M1543 605h.01M1471 570h.01M1657 562h.01M1535 638h.01M1498 571h.01M1582 541h.01M1652 593h.01M1611 677h.01M1498 594h.01M1607 619h.01M1504 599h.01M1439 542h.01M1655 617h.01M1613 599h.01M1444 578h.01M1525 621h.01M1438 702h.01M1547 545h.01M1549 543h.01M1448 666h.01M1579 644h.01M1545 594h.01M1650 562h.01M1523 596h.01M1591 602h.01M1429 689h.01M1476 578h.01M1505 673h.01M1499 600h.01M1656 619h.01M1555 670h.01M1488 569h.01M1577 645h.01M1539 617h.01M1630 579h.01M1501 650h.01M1518 581h.01M1498 569h.01M1436 541h.01M1654 585h.01M1536 609h.01M1485 548h.01M1498 565h.01M1515 539h.01M1516 658h.01M1505 603h.01M1446 659h.01M1611 669h.01M1535 531h.01M1550 554h.01M1461 585h.01M1449 695h.01M1524 506h.01M1534 592h.01M1492 613h.01M1595 600h.01M1495 662h.01M1441 667h.01M1664 557h.01M1523 594h.01M1611 593h.01M1561 518h.01M1439 689h.01M1627 585h.01M1499 566h.01M1497 564h.01M1643 599h.01M1515 592h.01M1671 529h.01M1613 674h.01M1436 582h.01M1653 582h.01M1616 712h.01M1632 609h.01M1533 507h.01M1614 711h.01M1511 485h.01M1437 580h.01M1671 546h.01M1619 566h.01M1539 665h.01M1562 663h.01M1574 637h.01M1597 648h.01M1559 664h.01M1434 579h.01M1643 589h.01M1541 610h.01M1442 703h.01M1457 664h.01M1663 600h.01M1562 644h.01M1597 688h.01M1449 671h.01M1485 589h.01M1447 693h.01M1471 548h.01M1589 602h.01M1574 548h.01M1483 549h.01M1430 581h.01M1543 619h.01M1546 608h.01M1526 598h.01M1500 535h.01M1532 523h.01M1541 666h.01M1545 535h.01M1662 553h.01M1658 558h.01M1538 589h.01M1582 598h.01M1545 596h.01M1641 606h.01M1446 699h.01M1649 620h.01M1562 650h.01M1447 633h.01M1523 480h.01M1565 656h.01M1544 538h.01M1572 547h.01M1524 489h.01M1542 543h.01M1638 589h.01M1540 668h.01M1450 652h.01M1542 612h.01M1565 640h.01M1646 558h.01M1521 682h.01M1651 598h.01M1501 595h.01M1515 581h.01M1610 569h.01M1451 537h.01M1451 665h.01M1596 602h.01M1523 596h.01M1524 504h.01M1599 708h.01M1556 670h.01M1559 519h.01M1577 638h.01M1653 555h.01M1607 560h.01M1524 530h.01M1447 654h.01M1547 536h.01M1606 715h.01M1568 659h.01M1544 662h.01M1589 598h.01M1442 583h.01M1531 539h.01M1614 604h.01M1532 521h.01M1538 670h.01M1456 579h.01M1533 611h.01M1539 609h.01M1621 588h.01M1534 524h.01M1545 616h.01M1546 528h.01M1620 666h.01M1642 605h.01M1520 591h.01M1496 609h.01M1459 661h.01M1575 634h.01M1594 690h.01M1648 580h.01M1578 547h.01M1467 576h.01M1457 663h.01M1444 687h.01M1532 605h.01M1598 539h.01M1575 541h.01M1449 535h.01M1627 564h.01M1611 679h.01M1509 625h.01M1657 624h.01M1452 537h.01M1569 640h.01M1552 666h.01M1496 562h.01M1563 659h.01M1579 650h.01M1618 558h.01M1512 592h.01M1513 464h.01M1510 685h.01M1590 597h.01M1546 612h.01M1514 563h.01M1661 616h.01M1439 541h.01M1448 601h.01M1648 604h.01M1646 553h.01M1647 604h.01M1575 617h.01M1505 485h.01M1560 662h.01M1464 581h.01M1450 695h.01M1449 623h.01M1606 564h.01M1487 592h.01M1649 579h.01M1621 561h.01M1649 595h.01M1541 573h.01M1574 644h.01M1598 541h.01M1555 523h.01M1431 692h.01M1659 600h.01M1669 548h.01M1550 525h.01M1565 651h.01M1616 601h.01M1558 644h.01M1550 666h.01M1517 585h.01M1452 634h.01M1587 543h.01M1544 598h.01M1496 569h.01M1616 673h.01M1562 644h.01M1618 583h.01M1603 662h.01M1561 669h.01M1563 646h.01M1555 645h.01M1503 589h.01M1587 537h.01M1630 565h.01M1450 689h.01M1539 530h.01M1578 617h.01M1639 600h.01M1599 596h.01M1621 667h.01M1549 532h.01M1556 666h.01M1647 570h.01M1520 599h.01M1528 615h.01M1466 595h.01M1543 603h.01M1494 596h.01M1619 588h.01M1649 590h.01M1551 535h.01M1561 518h.01M1586 598h.01M1520 606h.01M1526 624h.01M1565 652h.01M1631 574h.01M1526 479h.01M1477 545h.01M1512 604h.01M1569 548h.01M1662 604h.01M1600 691h.01M1513 567h.01M1501 673h.01M1615 584h.01M1442 687h.01M1622 588h.01M1590 629h.01M1526 594h.01M1648 577h.01M1541 533h.01M1513 603h.01M1536 519h.01M1634 604h.01M1501 674h.01M1584 534h.01M1540 520h.01M1502 530h.01M1499 595h.01M1566 640h.01M1631 596h.01M1651 592h.01M1530 510h.01M1507 488h.01M1499 652h.01M1595 544h.01M1432 545h.01M1527 619h.01M1602 656h.01M1616 590h.01M1525 606h.01M1545 661h.01M1615 592h.01M1434 540h.01M1520 506h.01M1610 673h.01M1489 585h.01M1562 657h.01M1546 602h.01M1645 594h.01M1518 471h.01M1434 588h.01M1599 596h.01M1530 634h.01M1532 657h.01M1449 669h.01M1574 637h.01M1655 555h.01M1514 682h.01M1642 599h.01M1560 636h.01M1651 563h.01M1611 563h.01M1497 606h.01M1449 628h.01M1651 586h.01M1490 566h.01M1499 667h.01M1516 467h.01M1558 676h.01M1677 539h.01M1482 547h.01M1617 584h.01M1470 613h.01M1540 621h.01M1638 601h.01M1645 575h.01M1499 564h.01M1492 656h.01M1534 595h.01M1648 603h.01M1511 683h.01M1496 569h.01M1662 555h.01M1602 667h.01M1447 699h.01M1521 484h.01M1449 703h.01M1518 684h.01M1630 574h.01M1544 575h.01M1497 667h.01M1439 709h.01M1644 556h.01M1430 570h.01M1493 599h.01M1573 549h.01M1549 663h.01M1640 594h.01M1550 525h.01M1559 642h.01M1662 558h.01M1492 606h.01M1449 650h.01M1556 571h.01M1465 580h.01M1435 574h.01M1586 541h.01M1603 700h.01M1661 550h.01M1444 652h.01M1533 519h.01M1482 551h.01M1546 618h.01M1635 601h.01M1398 592h.01M1313 594h.01M1377 635h.01M1368 640h.01M1287 601h.01M1335 615h.01M1323 542h.01M1426 576h.01M1294 643h.01M1385 650h.01M1354 574h.01M1294 660h.01M1376 633h.01M1414 579h.01M1421 654h.01M1368 621h.01M1320 592h.01M1310 642h.01M1313 538h.01M1301 582h.01M1395 654h.01M1312 640h.01M1293 632h.01M1380 642h.01M1322 655h.01M1414 583h.01M1375 643h.01M1307 586h.01M1340 539h.01M1310 579h.01M1292 649h.01M1333 523h.01M1329 657h.01M1320 649h.01M1385 578h.01M1355 524h.01M1434 610h.01M1312 531h.01M1304 629h.01M1361 588h.01M1323 589h.01M1308 539h.01M1375 590h.01M1307 537h.01M1301 607h.01M1397 596h.01M1311 574h.01M1307 576h.01M1322 654h.01M1337 561h.01M1347 549h.01M1400 587h.01M1331 564h.01M1380 587h.01M1347 568h.01M1349 567h.01M1384 648h.01M1317 590h.01M1358 588h.01M1296 587h.01M1328 587h.01M1390 655h.01M1330 545h.01M1332 654h.01M1329 522h.01M1289 607h.01M1400 638h.01M1434 614h.01M1340 534h.01M1353 585h.01M1394 650h.01M1362 619h.01M1315 638h.01M1311 571h.01M1382 580h.01M1405 642h.01M1391 648h.01M1391 658h.01M1378 660h.01M1382 576h.01M1339 523h.01M1382 654h.01M1311 545h.01M1428 570h.01M1307 542h.01M1324 648h.01M1407 571h.01M1330 528h.01M1370 648h.01M1366 630h.01M1313 541h.01M1346 535h.01M1330 523h.01M1364 638h.01M1306 605h.01M1336 562h.01M1325 599h.01M1330 538h.01M1366 638h.01M1419 652h.01M1299 537h.01M1350 569h.01M1391 658h.01M1433 613h.01M1378 633h.01M1348 577h.01M1403 589h.01M1399 588h.01M1305 597h.01M1368 704h.01M1408 753h.01M1407 709h.01M1356 676h.01M1377 733h.01M1391 670h.01M1403 751h.01M1336 675h.01M1349 712h.01M1340 729h.01M1374 713h.01M1420 680h.01M1430 681h.01M1430 726h.01M1354 709h.01M1429 701h.01M1421 676h.01M1401 764h.01M1427 697h.01M1418 730h.01M1329 683h.01M1377 766h.01M1320 696h.01M1410 687h.01M1383 679h.01M1413 674h.01M1416 722h.01M1430 724h.01M1386 779h.01M1411 769h.01M1411 753h.01M1406 687h.01M1416 669h.01M1404 773h.01M1320 647h.01M1323 639h.01M1315 640h.01M1344 650h.01M1348 642h.01M1347 643h.01M1347 649h.01M1321 660h.01M1349 651h.01M1354 634h.01M1323 652h.01M1304 635h.01M1366 730h.01M1402 780h.01M1369 727h.01M1368 730h.01M1378 775h.01M1405 768h.01M1379 737h.01M1342 709h.01M1370 691h.01M1411 730h.01M1372 779h.01M1395 778h.01M1376 746h.01M1420 701h.01M1412 722h.01M1412 703h.01M1376 775h.01M1405 754h.01M1401 775h.01M1390 769h.01M1401 714h.01M1358 740h.01M1407 718h.01M1370 726h.01M1404 705h.01M1410 716h.01M1401 779h.01M1427 748h.01M1376 731h.01M1398 696h.01M1373 775h.01M1410 718h.01M1407 769h.01M1412 707h.01M1395 793h.01M1390 770h.01M1402 784h.01M1340 733h.01M1378 696h.01M1381 698h.01M1324 714h.01"/>
<path fill="none" stroke="#fff5ad" stroke-width="6.8" stroke-linecap="round" d="M999 623h.01M1002 620h.01M1000 628h.01M1009 617h.01M1000 618h.01M1012 619h.01M1010 619h.01M1007 615h.01M1017 623h.01M1193 620h.01M1200 604h.01M1201 599h.01M1172 631h.01M1054 655h.01M1230 587h.01M1203 605h.01M1142 609h.01M1047 672h.01M1163 588h.01M1163 593h.01M1051 664h.01M1242 599h.01M1086 632h.01M1091 643h.01M1208 617h.01M1145 603h.01M1200 624h.01M1074 689h.01M1046 664h.01M1117 626h.01M1142 597h.01M1138 594h.01M1189 585h.01M1088 671h.01M1142 611h.01M1229 632h.01M1102 672h.01M1180 649h.01M1216 610h.01M1081 634h.01M1207 606h.01M1204 592h.01M1144 625h.01M1193 611h.01M1184 609h.01M1092 627h.01M1098 622h.01M1115 611h.01M1083 636h.01M1242 593h.01M1193 617h.01M1192 622h.01M1199 619h.01M1197 604h.01M1113 602h.01M1088 631h.01M1069 665h.01M1081 638h.01M1066 681h.01M1157 622h.01M1096 668h.01M1059 648h.01M1096 623h.01M1041 661h.01M1245 599h.01M1199 600h.01M1120 638h.01M1136 612h.01M1172 629h.01M1088 640h.01M1044 677h.01M1141 609h.01M1055 695h.01M1154 617h.01M1135 607h.01M1055 702h.01M1102 665h.01M1115 618h.01M1143 610h.01M1046 662h.01M1115 622h.01M1145 604h.01M1123 634h.01M1151 612h.01M1110 653h.01M1218 613h.01M1062 680h.01M1236 606h.01M1120 603h.01M1101 658h.01M1210 606h.01M1092 665h.01M1119 601h.01M1162 586h.01M1057 686h.01M1143 609h.01M1056 700h.01M1054 703h.01M1113 621h.01M1195 601h.01M1204 594h.01M1089 668h.01M1087 672h.01M1069 688h.01M1117 603h.01M1142 615h.01M1186 608h.01M1153 616h.01M1242 595h.01M1115 620h.01M1062 647h.01M1095 668h.01M1197 615h.01M1061 693h.01M1189 613h.01M1195 626h.01M1175 641h.01M1202 611h.01M1212 595h.01M1204 592h.01M1151 617h.01M1155 620h.01M1095 631h.01M1156 642h.01M1142 655h.01M1163 585h.01M1151 617h.01M1212 617h.01M1208 643h.01M1199 599h.01M1097 672h.01M1101 626h.01M1195 582h.01M1245 600h.01M1147 617h.01M1203 588h.01M1082 632h.01M1046 665h.01M1109 652h.01M1119 643h.01M1247 597h.01M1069 689h.01M1237 598h.01M1243 594h.01M1067 688h.01M1061 658h.01M1093 629h.01M1085 638h.01M1053 701h.01M1062 690h.01M1123 599h.01M1100 672h.01M1148 622h.01M1217 612h.01M1204 598h.01M1135 635h.01M1187 586h.01M1202 622h.01M1197 627h.01M1050 679h.01M1075 638h.01M1050 660h.01M1256 672h.01M1190 689h.01M1091 715h.01M1120 710h.01M1132 717h.01M1123 713h.01M1252 672h.01M1189 688h.01M1218 692h.01M1189 704h.01M1119 719h.01M1124 720h.01M1155 709h.01M1096 730h.01M1129 697h.01M1113 726h.01M1186 706h.01M1229 694h.01M1121 709h.01M1260 679h.01M1096 729h.01M1151 698h.01M1097 730h.01M1208 700h.01M1144 700h.01M1147 694h.01M1128 695h.01M1091 716h.01M1128 711h.01M1112 721h.01M1184 703h.01M1244 675h.01M1236 691h.01M1261 667h.01M1274 653h.01M1264 676h.01M1262 666h.01M1063 734h.01M1045 701h.01M1066 755h.01M1042 756h.01M1069 758h.01M1072 748h.01M1065 762h.01M1068 735h.01M1066 765h.01M1021 697h.01M1026 700h.01M1046 707h.01M1066 759h.01M1027 706h.01M1184 726h.01M1186 753h.01M1180 762h.01M1185 750h.01M1221 742h.01M1249 735h.01M1251 732h.01M1241 719h.01M1237 723h.01M1251 737h.01M1235 719h.01M1239 738h.01M1237 723h.01M1233 722h.01M1245 723h.01M1083 769h.01M1063 745h.01M1065 747h.01M1055 747h.01M1046 751h.01M1057 752h.01M1070 761h.01M1059 748h.01M1060 742h.01M1190 750h.01M1196 724h.01M1187 747h.01M1189 750h.01M1188 742h.01M1194 712h.01M1193 727h.01M1178 770h.01M1190 744h.01M1178 767h.01M1181 774h.01M1182 760h.01M1183 753h.01M1195 708h.01M1184 764h.01M1200 710h.01M1197 703h.01M1196 705h.01M1196 708h.01M1190 760h.01M1179 766h.01M1195 728h.01M1186 750h.01M1198 720h.01M1214 744h.01M1647 554h.01M1538 527h.01M1656 547h.01M1607 562h.01M1444 708h.01M1617 582h.01M1543 532h.01M1547 526h.01M1644 599h.01M1573 645h.01M1435 573h.01M1440 578h.01M1549 534h.01M1578 631h.01M1440 707h.01M1648 594h.01M1558 643h.01M1616 673h.01M1448 602h.01M1500 667h.01M1596 540h.01M1495 659h.01M1540 598h.01M1538 539h.01M1452 585h.01M1629 577h.01M1438 579h.01M1445 597h.01M1502 491h.01M1528 489h.01M1513 463h.01M1540 545h.01M1537 620h.01M1541 600h.01M1455 664h.01M1445 699h.01M1601 689h.01M1526 488h.01M1654 551h.01M1558 662h.01M1541 529h.01M1651 594h.01M1524 584h.01M1458 579h.01M1444 704h.01M1503 489h.01M1446 706h.01M1651 559h.01M1483 574h.01M1561 639h.01M1617 559h.01M1655 553h.01M1519 483h.01M1529 622h.01M1449 703h.01M1510 575h.01M1544 537h.01M1629 601h.01M1611 674h.01M1522 666h.01M1455 584h.01M1613 671h.01M1498 568h.01M1535 536h.01M1443 699h.01M1567 656h.01M1444 599h.01M1605 665h.01M1501 669h.01M1602 694h.01M1551 665h.01M1662 601h.01M1614 552h.01M1536 540h.01M1538 618h.01M1444 577h.01M1442 706h.01M1563 649h.01M1566 651h.01M1526 590h.01M1558 671h.01M1507 570h.01M1623 578h.01M1660 551h.01M1613 558h.01M1485 575h.01M1611 672h.01M1650 590h.01M1449 704h.01M1455 665h.01M1615 554h.01M1501 591h.01M1565 657h.01M1443 705h.01M1559 641h.01M1570 654h.01M1532 532h.01M1453 666h.01M1477 575h.01M1540 600h.01M1560 647h.01M1437 576h.01M1644 604h.01M1526 485h.01M1480 642h.01M1529 624h.01M1475 579h.01M1659 552h.01M1586 603h.01M1558 522h.01M1499 670h.01M1446 600h.01M1440 574h.01M1541 598h.01M1634 602h.01M1324 658h.01M1280 604h.01M1362 638h.01M1307 533h.01M1402 600h.01M1332 525h.01M1292 543h.01M1345 549h.01M1411 583h.01M1427 572h.01M1336 552h.01M1346 551h.01M1378 649h.01M1295 628h.01M1369 621h.01M1409 641h.01M1290 620h.01M1297 616h.01M1333 546h.01M1397 633h.01M1416 645h.01M1401 602h.01M1289 593h.01M1306 578h.01M1410 642h.01M1353 575h.01M1337 565h.01M1395 659h.01M1403 598h.01M1334 622h.01M1341 566h.01M1287 596h.01M1303 545h.01M1329 549h.01M1304 525h.01M1316 657h.01M1336 525h.01M1365 631h.01M1318 656h.01M1288 614h.01M1341 563h.01M1408 578h.01M1333 531h.01M1340 528h.01M1335 614h.01M1318 593h.01M1364 629h.01M1319 641h.01M1429 627h.01M1332 526h.01M1344 548h.01M1339 564h.01M1331 616h.01M1332 529h.01M1398 594h.01M1397 600h.01M1281 604h.01M1328 721h.01M1420 722h.01M1427 707h.01M1399 746h.01M1394 754h.01M1373 729h.01M1415 759h.01M1422 679h.01M1395 749h.01M1390 674h.01M1426 676h.01M1363 743h.01M1400 667h.01M1403 745h.01M1395 680h.01M1333 675h.01M1403 762h.01M1402 749h.01M1399 684h.01M1387 773h.01M1398 757h.01M1397 759h.01M1425 722h.01M1416 672h.01M1426 730h.01M1328 718h.01M1427 678h.01M1412 775h.01M1406 756h.01M1352 629h.01M1310 655h.01M1315 643h.01M1344 647h.01M1312 654h.01M1348 630h.01M1310 640h.01M1354 629h.01M1373 776h.01M1369 746h.01M1341 737h.01M1433 728h.01M1397 810h.01M1404 695h.01M1425 719h.01M1339 730h.01M1405 813h.01M1364 736h.01M1336 714h.01M1384 773h.01M1382 770h.01M1421 721h.01M1366 731h.01M1414 716h.01M1360 724h.01M1394 771h.01M1362 736h.01M1362 730h.01M1404 812h.01M1405 817h.01M1380 773h.01M1391 773h.01M1411 718h.01M1409 726h.01M1432 737h.01M1404 775h.01M1407 769h.01M1413 720h.01M1358 736h.01"/>
<path fill="none" stroke="#fdae4f" stroke-width="6.8" stroke-linecap="round" d="M1148 614h.01M1141 610h.01M1191 606h.01M1199 625h.01M1240 600h.01M1097 672h.01M1065 689h.01M1189 580h.01M1092 670h.01M1176 646h.01M1091 634h.01M1168 643h.01M1114 664h.01M1116 601h.01M1203 597h.01M1053 658h.01M1171 649h.01M1100 662h.01M1135 612h.01M1046 674h.01M1102 662h.01M1107 668h.01M1099 668h.01M1242 603h.01M1198 620h.01M1090 670h.01M1055 699h.01M1115 607h.01M1240 604h.01M1177 648h.01M1096 623h.01M1190 605h.01M1209 590h.01M1116 621h.01M1203 596h.01M1245 601h.01M1193 619h.01M1214 698h.01M1211 703h.01M1211 704h.01M1159 704h.01M1122 719h.01M1265 671h.01M1264 672h.01M1268 670h.01M1261 672h.01M1025 697h.01M1247 735h.01M1242 737h.01M1251 732h.01M1255 729h.01M1253 729h.01M1247 733h.01M1248 731h.01M1240 731h.01M1239 731h.01M1052 752h.01M1043 748h.01M1054 748h.01M1053 741h.01M1050 747h.01M1505 572h.01M1526 485h.01M1540 530h.01M1528 486h.01M1645 599h.01M1441 694h.01M1648 558h.01M1501 667h.01M1656 555h.01M1505 573h.01M1506 575h.01M1528 618h.01M1312 543h.01M1343 559h.01M1302 568h.01M1400 582h.01M1313 543h.01M1330 661h.01M1326 650h.01M1370 636h.01M1305 567h.01M1390 652h.01M1305 545h.01M1292 629h.01M1309 543h.01M1413 683h.01M1425 679h.01M1331 691h.01M1422 676h.01M1400 678h.01M1428 702h.01M1411 750h.01M1334 681h.01M1398 756h.01M1316 646h.01M1348 711h.01M1371 738h.01M1403 699h.01M1364 741h.01M1396 771h.01M1401 707h.01M1419 718h.01M1377 774h.01M1351 704h.01M1345 706h.01M1396 812h.01M1402 774h.01M1365 741h.01"/>
<path fill="none" stroke="#a30000" stroke-width="6.8" stroke-linecap="round" d="M1119 602h.01M1065 687h.01M1063 687h.01M1175 644h.01M1116 599h.01M1196 620h.01M1173 650h.01M1179 649h.01M1118 601h.01M1178 648h.01M1198 622h.01M1199 621h.01M1174 649h.01M1100 666h.01M1063 688h.01M1180 647h.01M1066 690h.01M1067 685h.01M1175 650h.01M1264 671h.01M1067 732h.01M1253 730h.01M1235 723h.01M1241 733h.01M1244 720h.01M1249 726h.01M1245 727h.01M1646 599h.01M1652 555h.01M1295 621h.01M1398 636h.01M1319 597h.01M1294 620h.01M1368 734h.01M1421 683h.01M1356 643h.01M1349 707h.01M1399 817h.01M1400 753h.01"/>
<path fill="#6699cd" stroke="#6699cd" stroke-width="1.6" stroke-linejoin="round" d="M1250 617.5L1255 605L1270 595L1285 598.8L1295 605L1292.5 620L1280 630L1265 637.5L1252.5 632.5L1247.5 625Z"/>
<path fill="#6699cd" stroke="#6699cd" stroke-width="1.6" stroke-linejoin="round" d="M1300 592.5L1310 582.5L1325 590L1340 595L1350 600L1352.5 612.5L1340 617.5L1325 610L1310 607.5L1302.5 602.5Z"/>
<path fill="#6699cd" stroke="#6699cd" stroke-width="1.6" stroke-linejoin="round" d="M1310 520L1320 515L1330 520L1332.5 530L1327.5 537.5L1317.5 537.5L1311.2 530Z"/>
<path fill="#6699cd" stroke="#6699cd" stroke-width="1.6" stroke-linejoin="round" d="M1330 550L1342.5 545L1355 547.5L1353.8 556.2L1340 560L1331.2 557.5Z"/>
<path fill="#6699cd" stroke="#6699cd" stroke-width="1.6" stroke-linejoin="round" d="M1279 595L1290.5 598L1296.2 615.2L1290.5 629.5L1279 629.5Z"/>
<path fill="#6699cd" stroke="#6699cd" stroke-width="1.6" stroke-linejoin="round" d="M1314.8 541.2L1329.2 532.8L1352.2 538.5L1358 552.8L1349.2 564.2L1329.2 567.2L1317.8 558.5Z"/>
<path fill="#6699cd" stroke="#6699cd" stroke-width="1.6" stroke-linejoin="round" d="M1353.2 658.5L1367.5 650L1382 658.5L1382 675.8L1373.2 687.2L1359 684.5L1353.2 673Z"/>
<path fill="#6699cd" stroke="#6699cd" stroke-width="1.6" stroke-linejoin="round" d="M1381 676.5L1392.5 670.8L1404 679.2L1402.8 693.8L1389.8 696.5L1381.8 689.5Z"/>
<path fill="#6699cd" stroke="#6699cd" stroke-width="1.6" stroke-linejoin="round" d="M1403.5 668L1420.8 665L1426.5 679.5L1423.5 696.8L1412 702.5L1405 691Z"/>
<path fill="#6699cd" stroke="#6699cd" stroke-width="1.6" stroke-linejoin="round" d="M1307 710.2L1310 698.8L1330 693L1350 690.2L1353 704.5L1344.5 719L1330 727.5L1315.5 721.8Z"/>
<path fill="#6699cd" stroke="#6699cd" stroke-width="1.6" stroke-linejoin="round" d="M1310.5 669.8L1322 661.2L1339.2 667L1337.8 678.5L1322 681.2Z"/>
<path fill="#6699cd" stroke="#6699cd" stroke-width="1.6" stroke-linejoin="round" d="M1348 704.5L1362.2 693L1382.5 701.8L1381 716L1362.2 719L1349.2 713.2Z"/>
<path fill="#6699cd" stroke="#6699cd" stroke-width="1.6" stroke-linejoin="round" d="M1394.5 718.5L1409 710L1432 715.8L1440.5 730L1432 744.5L1414.5 747.2L1400.2 738.8Z"/>
<path fill="#6699cd" stroke="#6699cd" stroke-width="1.6" stroke-linejoin="round" d="M1335.5 729.2L1347 723.5L1364.2 729.2L1361.5 743.8L1344.2 746.5Z"/>
<path fill="#6699cd" stroke="#6699cd" stroke-width="1.6" stroke-linejoin="round" d="M1449 518.5L1497.8 518.5L1497.8 535.8L1480.5 541.5L1457.5 535.8Z"/>
<path fill="#6699cd" stroke="#6699cd" stroke-width="1.6" stroke-linejoin="round" d="M1306.8 707L1318.2 701.2L1341.2 698.5L1352.8 707L1347 718.5L1335.5 727.2L1321 715.8Z"/>
<path fill="#6699cd" stroke="#6699cd" stroke-width="1.6" stroke-linejoin="round" d="M1347.5 709.8L1359 701.2L1376.2 704L1387.8 715.5L1373.2 721.2L1359 718.5Z"/>
<path fill="#6699cd" stroke="#6699cd" stroke-width="1.6" stroke-linejoin="round" d="M1338.5 732.2L1350 723.8L1361.5 726.5L1358.5 741L1344.2 746.8Z"/>
<path fill="#6699cd" stroke="#6699cd" stroke-width="1.6" stroke-linejoin="round" d="M1397.2 713.8L1408.8 708L1431.8 713.8L1437.5 731L1426 742.5L1408.8 731Z"/>
<path fill="#6699cd" stroke="#6699cd" stroke-width="1.6" stroke-linejoin="round" d="M1383 741.8L1400.2 736L1411.8 747.5L1406 759L1388.8 756Z"/>
<path fill="#6699cd" stroke="#6699cd" stroke-width="1.6" stroke-linejoin="round" d="M1368 772.2L1379.5 763.5L1396.8 769.2L1394 783.8L1376.8 783.8Z"/>
<path fill="#6699cd" stroke="#6699cd" stroke-width="1.6" stroke-linejoin="round" d="M1393 791.5L1407.2 782.8L1421.8 791.5L1427.5 803L1416 811.5L1401.5 814.5L1394.5 805.8Z"/>
<path fill="none" stroke="#35992e" stroke-width="6.8" stroke-linecap="round" d="M1430 708h.01M1400 721h.01M1321 694h.01M1417 706h.01M1413 713h.01M1370 740h.01M1380 738h.01M1390 709h.01M1391 715h.01M1362 724h.01"/>
<path fill="none" stroke="#8fca76" stroke-width="6.8" stroke-linecap="round" d="M1391 727h.01M1394 734h.01M1408 673h.01"/>
<path fill="none" stroke="#fff5ad" stroke-width="6.8" stroke-linecap="round" d="M1335 714h.01M1331 676h.01"/>
<path fill="none" stroke="#a30000" stroke-width="6.8" stroke-linecap="round" d="M1325 681h.01"/>
<path fill="#35992e" d="M1358.1 719.2L1371 716.4L1385.8 721L1386.7 735.8L1378.4 748.7L1365.5 747.7L1359.1 735.8Z"/>
<path fill="#6699cd" stroke="#6699cd" stroke-width="1.6" stroke-linejoin="round" d="M1395 783.6L1407.9 780L1418.9 787.3L1426.3 800.2L1418.9 812.2L1404.2 813.1L1395.9 802.1Z"/>
<path fill="none" stroke="#35992e" stroke-width="6.8" stroke-linecap="round" d="M1396 809h.01M1427 802h.01M1424 803h.01M1407 786h.01M1423 783h.01M1424 812h.01M1396 817h.01M1405 809h.01M1404 783h.01M1421 782h.01M1402 810h.01M1420 788h.01M1425 785h.01M1396 814h.01M1411 741h.01M1377 749h.01M1362 740h.01M1412 815h.01M1411 748h.01M1376 710h.01M1359 720h.01M1416 738h.01M1425 721h.01M1403 751h.01M1347 604h.01M1263 619h.01M1296 623h.01"/>
<path fill="none" stroke="#8fca76" stroke-width="6.8" stroke-linecap="round" d="M1399 795h.01M1428 796h.01M1394 744h.01M1424 735h.01M1250 638h.01"/>
<path fill="none" stroke="#fff5ad" stroke-width="6.8" stroke-linecap="round" d="M1424 796h.01M1423 796h.01M1316 710h.01M1343 584h.01"/>
<path fill="none" stroke="#fdae4f" stroke-width="6.8" stroke-linecap="round" d="M1249 621h.01M1261 613h.01"/>
<path fill="none" stroke="#35992e" stroke-width="1.7" stroke-linecap="round" stroke-linejoin="round" d="M1387.5 331.5L1397.5 332.2L1410 325.8L1430 326.8L1450 334.2L1465 344.2L1480 355.2L1487.5 366.8L1500 376.8L1506.2 379.2"/>
<path fill="none" stroke="#35992e" stroke-width="1.3" stroke-linecap="round" stroke-linejoin="round" d="M1520 387.5L1528.8 388L1529.5 397.5L1532 405L1527.5 412L1520.5 420L1513.8 429.5"/>
<path fill="#a30000" d="M1484.5 431.5L1489.5 430L1495.5 431.5L1493 436.5L1486.5 438Z"/>
<path fill="none" stroke="#fff5ad" stroke-width="4.4" stroke-linecap="round" d="M1480 431h.01"/>
<path fill="none" stroke="#fdae4f" stroke-width="3" stroke-linecap="round" d="M1482 429h.01"/>
<path fill="none" stroke="#8fca76" stroke-width="3.2" stroke-linecap="round" d="M1477 433h.01"/>
<path fill="none" stroke="#35992e" stroke-width="6.8" stroke-linecap="round" d="M1399 750h.01M1396 769h.01M1401 766h.01M1404 772h.01M1408 773h.01M1411 784h.01M1392 778h.01M1394 766h.01M1406 783h.01M1386 757h.01M1412 762h.01M1406 765h.01M1390 772h.01M1393 770h.01M1404 778h.01M1405 761h.01M1408 771h.01M1389 765h.01M1414 776h.01M1407 764h.01M1403 768h.01M1407 780h.01M1398 779h.01M1405 784h.01M1400 781h.01M1392 772h.01M1411 776h.01M1391 775h.01M1394 780h.01M1407 763h.01M1406 774h.01M1396 780h.01M1406 784h.01M1413 784h.01M1234 763h.01M1174 737h.01M1157 768h.01M1058 741h.01M1226 758h.01M1074 752h.01M1268 714h.01M1266 760h.01M1024 701h.01M1055 735h.01M1070 739h.01M1221 717h.01M1032 713h.01M1135 738h.01M1125 760h.01M1198 717h.01M1149 774h.01M1222 798h.01M1158 775h.01M1183 762h.01M1138 807h.01M1216 774h.01M1108 773h.01M1081 764h.01M1068 783h.01M1180 774h.01M1090 761h.01M1099 764h.01M1232 804h.01M1144 805h.01M1086 805h.01M1237 672h.01M1181 675h.01M1191 654h.01M1262 663h.01M1142 662h.01M1189 684h.01M1157 681h.01M1234 660h.01M1119 692h.01M1158 678h.01M1177 657h.01M1141 663h.01M884 675h.01M904 658h.01M877 654h.01M901 679h.01M1390 571h.01M1423 542h.01M1409 550h.01M1376 552h.01M1385 565h.01M1374 570h.01M1387 534h.01M1387 550h.01M1390 555h.01M1539 665h.01M1505 696h.01M1508 686h.01M1518 691h.01M1504 707h.01M1580 701h.01M1509 673h.01M1603 697h.01M1492 682h.01M1561 688h.01M1557 714h.01M1557 664h.01M1637 574h.01M1657 552h.01M1677 619h.01M1673 568h.01M1674 600h.01M1640 566h.01M1676 625h.01M1641 612h.01M1654 593h.01M1666 587h.01M1663 595h.01M1634 563h.01M1650 549h.01"/>
<path fill="none" stroke="#8fca76" stroke-width="6.8" stroke-linecap="round" d="M1386 753h.01M1403 750h.01M1393 761h.01M1401 752h.01M1397 753h.01M1401 753h.01M1139 749h.01M1211 716h.01M1127 752h.01M1132 748h.01M1210 681h.01M1212 649h.01M902 671h.01M1424 522h.01M1360 548h.01M1399 539h.01M1397 559h.01M1578 707h.01"/>
<path fill="none" stroke="#fff5ad" stroke-width="6.8" stroke-linecap="round" d="M1402 753h.01M1399 756h.01M1405 757h.01M1402 759h.01M1391 762h.01M1401 757h.01M1394 759h.01M1133 685h.01M1422 560h.01M1373 541h.01M1362 526h.01"/>
<path fill="none" stroke="#fdae4f" stroke-width="6.8" stroke-linecap="round" d="M1405 751h.01M1399 756h.01M1403 752h.01"/>
</svg>
<!-- STATUS BAR -->
<div class="abs" style="left:0;top:1013px;width:1920px;height:2px;background:#fff;"></div>
<div class="sb" style="left:0;width:100px"><span style="left:5px">MapsID: 3930</span></div>
<div class="sb" style="left:101px;width:80px"><span>png</span></div>
<div class="sb" style="left:182px;width:99px"><span>MinZoom: 8</span></div>
<div class="sb" style="left:282px;width:99px"><span>MaxZoom: 17</span></div>
<div class="sb" style="left:382px;width:99px"><span>TileSize: 256</span></div>
<div class="sb" style="left:482px;width:99px"><span>EPSG:3857</span></div>
<div class="sb" style="left:582px;width:1338px"><span style="left:2px">Longitude=10.030518, Latitude=47.383474, tile=8/135/89.png</span></div>
</body>
</html>
